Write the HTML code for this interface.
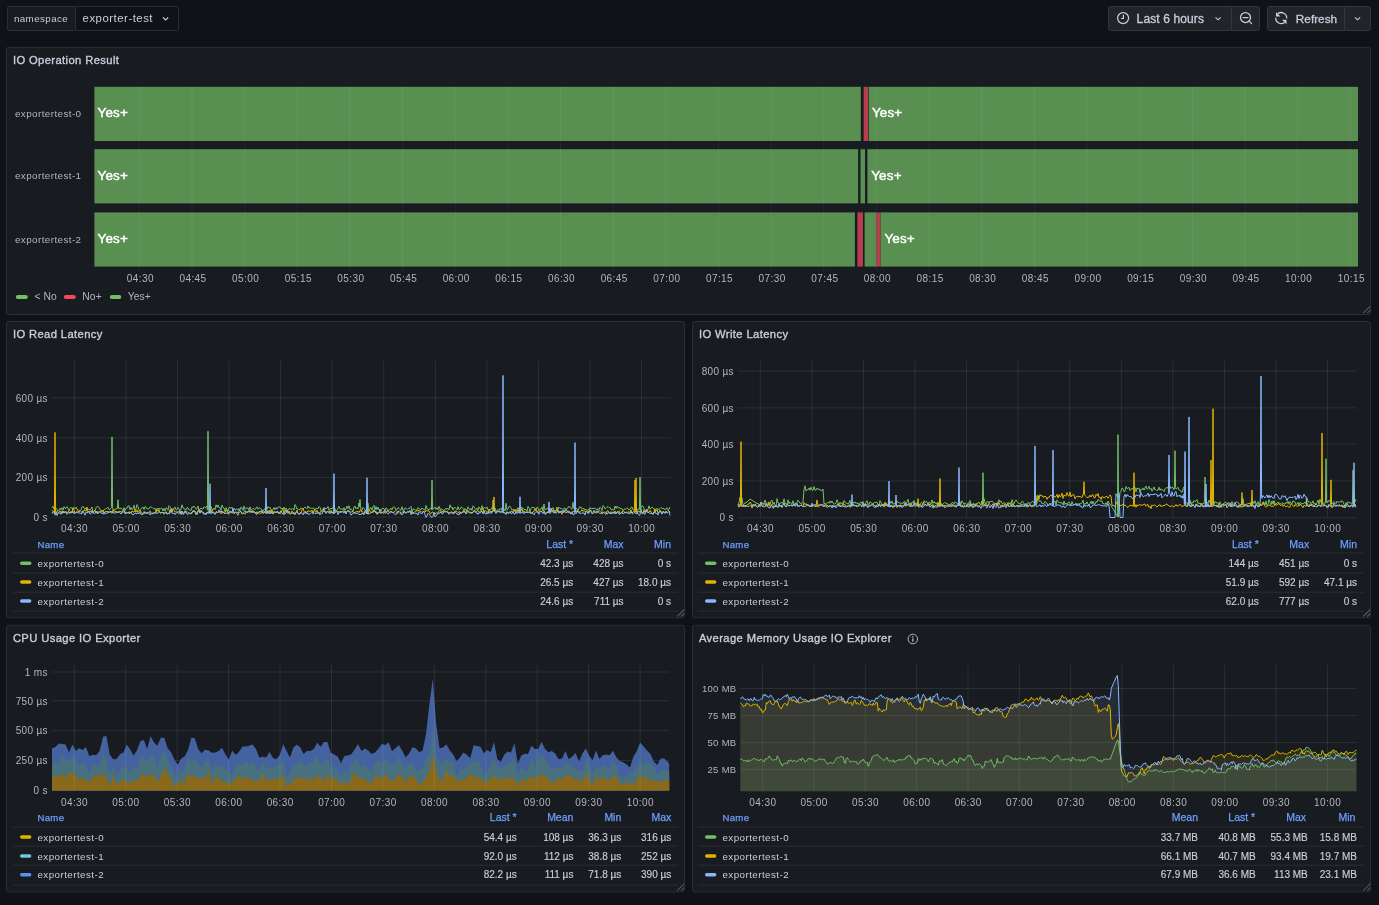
<!DOCTYPE html>
<html><head><meta charset="utf-8"><style>
html,body{margin:0;padding:0;background:#111217;width:1379px;height:905px;overflow:hidden}
svg{display:block;font-family:"Liberation Sans",sans-serif;will-change:transform}
</style></head><body>
<svg width="1379" height="905" viewBox="0 0 1379 905">
<rect width="1379" height="905" fill="#111217"/>
<rect x="7.5" y="6.5" width="68" height="24" fill="#181b1f" stroke="#2b2e34" stroke-width="1" rx="1.5" />
<text x="13.9" y="22" font-size="9.8" fill="#ccccdc" letter-spacing="0.4" >namespace</text>
<rect x="75.5" y="6.5" width="103" height="24" fill="#111217" stroke="#2b2e34" stroke-width="1" rx="1.5" />
<text x="82.6" y="22.0" font-size="11.4" fill="#ccccdc" letter-spacing="0.5" >exporter-test</text>
<path d="M163 17.5 L165.6 20 L168.2 17.5" fill="none" stroke="#ccccdc" stroke-width="1.1"/>
<rect x="1108.5" y="6.5" width="151" height="24" fill="#222429" stroke="#34363c" stroke-width="1" rx="2" />
<line x1="1231.5" y1="7" x2="1231.5" y2="30" stroke="#34363c" stroke-width="1"/>
<circle cx="1123.1" cy="18.1" r="5.5" fill="none" stroke="#ccccdc" stroke-width="1.25"/>
<path d="M1123.4 14.8 V18.5 H1121" fill="none" stroke="#ccccdc" stroke-width="1.2"/>
<text x="1136.6" y="23.1" font-size="12" fill="#ccccdc" letter-spacing="0.12" stroke="#ccccdc" stroke-width="0.3">Last 6 hours</text>
<path d="M1215.5 17.3 L1218.1 19.8 L1220.7 17.3" fill="none" stroke="#ccccdc" stroke-width="1.1"/>
<circle cx="1245.5" cy="17.5" r="5.0" fill="none" stroke="#ccccdc" stroke-width="1.25"/>
<path d="M1243 17.5 H1248 M1249.1 21.1 L1251.6 23.6" fill="none" stroke="#ccccdc" stroke-width="1.25" stroke-linecap="round"/>
<rect x="1267.5" y="6.5" width="103" height="24" fill="#222429" stroke="#34363c" stroke-width="1" rx="2" />
<line x1="1344.5" y1="7" x2="1344.5" y2="30" stroke="#34363c" stroke-width="1"/>
<path d="M1277.81 13.77 A5.5 5.5 0 0 1 1286.69 18.39 M1275.71 17.81 A5.5 5.5 0 0 0 1284.59 22.43" fill="none" stroke="#ccccdc" stroke-width="1.3"/>
<path d="M1276 12 L1276 16.5 L1280.5 16.5 Z M1286.5 24.2 L1286.5 19.7 L1282 19.7 Z" fill="#ccccdc"/>
<text x="1295.8" y="22.9" font-size="11.8" fill="#ccccdc" stroke="#ccccdc" stroke-width="0.3">Refresh</text>
<path d="M1354.9 17.3 L1357.5 19.8 L1360.1 17.3" fill="none" stroke="#ccccdc" stroke-width="1.1"/>
<rect x="6.5" y="47.4" width="1364" height="267.1" fill="#181b1f" stroke="#2b2e34" stroke-width="1" rx="2" />
<text x="12.9" y="63.95" font-size="11.2" fill="#ccccdc" letter-spacing="0.4" stroke="#ccccdc" stroke-width="0.35">IO Operation Result</text>
<path d="M1363.2 313.2 L1370.2 306.2 M1367.2 313.2 L1370.2 310.2" stroke="#53565c" stroke-width="1.1" fill="none"/>
<rect x="6.5" y="321.5" width="678" height="296.29999999999995" fill="#181b1f" stroke="#2b2e34" stroke-width="1" rx="2" />
<text x="12.9" y="338.05" font-size="11.2" fill="#ccccdc" letter-spacing="0.4" stroke="#ccccdc" stroke-width="0.35">IO Read Latency</text>
<path d="M677.2 616.5 L684.2 609.5 M681.2 616.5 L684.2 613.5" stroke="#53565c" stroke-width="1.1" fill="none"/>
<rect x="692.5" y="321.5" width="678" height="296.29999999999995" fill="#181b1f" stroke="#2b2e34" stroke-width="1" rx="2" />
<text x="698.9" y="338.05" font-size="11.2" fill="#ccccdc" letter-spacing="0.4" stroke="#ccccdc" stroke-width="0.35">IO Write Latency</text>
<path d="M1363.2 616.5 L1370.2 609.5 M1367.2 616.5 L1370.2 613.5" stroke="#53565c" stroke-width="1.1" fill="none"/>
<rect x="6.5" y="625.3" width="678" height="266.6" fill="#181b1f" stroke="#2b2e34" stroke-width="1" rx="2" />
<text x="12.9" y="641.8499999999999" font-size="11.2" fill="#ccccdc" letter-spacing="0.4" stroke="#ccccdc" stroke-width="0.35">CPU Usage IO Exporter</text>
<path d="M677.2 890.6 L684.2 883.6 M681.2 890.6 L684.2 887.6" stroke="#53565c" stroke-width="1.1" fill="none"/>
<rect x="692.5" y="625.3" width="678" height="266.6" fill="#181b1f" stroke="#2b2e34" stroke-width="1" rx="2" />
<text x="698.9" y="641.8499999999999" font-size="11.2" fill="#ccccdc" letter-spacing="0.4" stroke="#ccccdc" stroke-width="0.35">Average Memory Usage IO Explorer</text>
<path d="M1363.2 890.6 L1370.2 883.6 M1367.2 890.6 L1370.2 887.6" stroke="#53565c" stroke-width="1.1" fill="none"/>
<circle cx="912.8" cy="639" r="4.8" fill="none" stroke="#b0b0bc" stroke-width="1"/>
<rect x="912.1" y="636.2" width="1.4" height="1.3" fill="#b0b0bc"/><rect x="912.1" y="638.4" width="1.4" height="3.2" fill="#b0b0bc"/>
<rect x="94.4" y="86.8" width="766.4" height="54.2" fill="#5a8f52" />
<rect x="863.6" y="86.8" width="4.5" height="54.2" fill="#b83d4e" />
<rect x="868.7" y="86.8" width="489.29999999999995" height="54.2" fill="#5a8f52" />
<rect x="94.4" y="149.2" width="763.7" height="54.2" fill="#5a8f52" />
<rect x="860.5" y="149.2" width="4.5" height="54.2" fill="#5a8f52" />
<rect x="867.4" y="149.2" width="490.6" height="54.2" fill="#5a8f52" />
<rect x="94.4" y="212.4" width="760.5" height="54.2" fill="#5a8f52" />
<rect x="857.4" y="212.4" width="5.600000000000023" height="54.2" fill="#b83d4e" />
<rect x="864.6" y="212.4" width="11.899999999999977" height="54.2" fill="#5a8f52" />
<rect x="876.5" y="212.4" width="4.100000000000023" height="54.2" fill="#b83d4e" />
<rect x="880.6" y="212.4" width="477.4" height="54.2" fill="#5a8f52" />
<text x="81.5" y="116.9" font-size="9.9" fill="#b4b4c0" text-anchor="end" letter-spacing="0.4" >exportertest-0</text>
<text x="81.5" y="179.29999999999998" font-size="9.9" fill="#b4b4c0" text-anchor="end" letter-spacing="0.4" >exportertest-1</text>
<text x="81.5" y="242.5" font-size="9.9" fill="#b4b4c0" text-anchor="end" letter-spacing="0.4" >exportertest-2</text>
<text x="97.5" y="117" font-size="13.4" fill="#ffffff" letter-spacing="0.2" stroke="#ffffff" stroke-width="0.45">Yes+</text>
<text x="871.9" y="117" font-size="13.4" fill="#ffffff" letter-spacing="0.2" stroke="#ffffff" stroke-width="0.45">Yes+</text>
<text x="97.5" y="180" font-size="13.4" fill="#ffffff" letter-spacing="0.2" stroke="#ffffff" stroke-width="0.45">Yes+</text>
<text x="871.2" y="180" font-size="13.4" fill="#ffffff" letter-spacing="0.2" stroke="#ffffff" stroke-width="0.45">Yes+</text>
<text x="97.5" y="243" font-size="13.4" fill="#ffffff" letter-spacing="0.2" stroke="#ffffff" stroke-width="0.45">Yes+</text>
<text x="884.4" y="243" font-size="13.4" fill="#ffffff" letter-spacing="0.2" stroke="#ffffff" stroke-width="0.45">Yes+</text>
<line x1="139.3" y1="86" x2="139.3" y2="271" stroke="rgba(240,250,255,0.06)" stroke-width="1"/>
<text x="140.3" y="282.3" font-size="10" fill="#b4b4c0" text-anchor="middle" letter-spacing="0.42" >04:30</text>
<line x1="192.0" y1="86" x2="192.0" y2="271" stroke="rgba(240,250,255,0.06)" stroke-width="1"/>
<text x="193.0" y="282.3" font-size="10" fill="#b4b4c0" text-anchor="middle" letter-spacing="0.42" >04:45</text>
<line x1="244.6" y1="86" x2="244.6" y2="271" stroke="rgba(240,250,255,0.06)" stroke-width="1"/>
<text x="245.6" y="282.3" font-size="10" fill="#b4b4c0" text-anchor="middle" letter-spacing="0.42" >05:00</text>
<line x1="297.3" y1="86" x2="297.3" y2="271" stroke="rgba(240,250,255,0.06)" stroke-width="1"/>
<text x="298.3" y="282.3" font-size="10" fill="#b4b4c0" text-anchor="middle" letter-spacing="0.42" >05:15</text>
<line x1="349.9" y1="86" x2="349.9" y2="271" stroke="rgba(240,250,255,0.06)" stroke-width="1"/>
<text x="350.9" y="282.3" font-size="10" fill="#b4b4c0" text-anchor="middle" letter-spacing="0.42" >05:30</text>
<line x1="402.6" y1="86" x2="402.6" y2="271" stroke="rgba(240,250,255,0.06)" stroke-width="1"/>
<text x="403.6" y="282.3" font-size="10" fill="#b4b4c0" text-anchor="middle" letter-spacing="0.42" >05:45</text>
<line x1="455.2" y1="86" x2="455.2" y2="271" stroke="rgba(240,250,255,0.06)" stroke-width="1"/>
<text x="456.2" y="282.3" font-size="10" fill="#b4b4c0" text-anchor="middle" letter-spacing="0.42" >06:00</text>
<line x1="507.9" y1="86" x2="507.9" y2="271" stroke="rgba(240,250,255,0.06)" stroke-width="1"/>
<text x="508.9" y="282.3" font-size="10" fill="#b4b4c0" text-anchor="middle" letter-spacing="0.42" >06:15</text>
<line x1="560.5" y1="86" x2="560.5" y2="271" stroke="rgba(240,250,255,0.06)" stroke-width="1"/>
<text x="561.5" y="282.3" font-size="10" fill="#b4b4c0" text-anchor="middle" letter-spacing="0.42" >06:30</text>
<line x1="613.2" y1="86" x2="613.2" y2="271" stroke="rgba(240,250,255,0.06)" stroke-width="1"/>
<text x="614.2" y="282.3" font-size="10" fill="#b4b4c0" text-anchor="middle" letter-spacing="0.42" >06:45</text>
<line x1="665.8" y1="86" x2="665.8" y2="271" stroke="rgba(240,250,255,0.06)" stroke-width="1"/>
<text x="666.8" y="282.3" font-size="10" fill="#b4b4c0" text-anchor="middle" letter-spacing="0.42" >07:00</text>
<line x1="718.5" y1="86" x2="718.5" y2="271" stroke="rgba(240,250,255,0.06)" stroke-width="1"/>
<text x="719.5" y="282.3" font-size="10" fill="#b4b4c0" text-anchor="middle" letter-spacing="0.42" >07:15</text>
<line x1="771.1" y1="86" x2="771.1" y2="271" stroke="rgba(240,250,255,0.06)" stroke-width="1"/>
<text x="772.1" y="282.3" font-size="10" fill="#b4b4c0" text-anchor="middle" letter-spacing="0.42" >07:30</text>
<line x1="823.8" y1="86" x2="823.8" y2="271" stroke="rgba(240,250,255,0.06)" stroke-width="1"/>
<text x="824.8" y="282.3" font-size="10" fill="#b4b4c0" text-anchor="middle" letter-spacing="0.42" >07:45</text>
<line x1="876.4" y1="86" x2="876.4" y2="271" stroke="rgba(240,250,255,0.06)" stroke-width="1"/>
<text x="877.4" y="282.3" font-size="10" fill="#b4b4c0" text-anchor="middle" letter-spacing="0.42" >08:00</text>
<line x1="929.1" y1="86" x2="929.1" y2="271" stroke="rgba(240,250,255,0.06)" stroke-width="1"/>
<text x="930.1" y="282.3" font-size="10" fill="#b4b4c0" text-anchor="middle" letter-spacing="0.42" >08:15</text>
<line x1="981.7" y1="86" x2="981.7" y2="271" stroke="rgba(240,250,255,0.06)" stroke-width="1"/>
<text x="982.7" y="282.3" font-size="10" fill="#b4b4c0" text-anchor="middle" letter-spacing="0.42" >08:30</text>
<line x1="1034.4" y1="86" x2="1034.4" y2="271" stroke="rgba(240,250,255,0.06)" stroke-width="1"/>
<text x="1035.4" y="282.3" font-size="10" fill="#b4b4c0" text-anchor="middle" letter-spacing="0.42" >08:45</text>
<line x1="1087.0" y1="86" x2="1087.0" y2="271" stroke="rgba(240,250,255,0.06)" stroke-width="1"/>
<text x="1088.0" y="282.3" font-size="10" fill="#b4b4c0" text-anchor="middle" letter-spacing="0.42" >09:00</text>
<line x1="1139.7" y1="86" x2="1139.7" y2="271" stroke="rgba(240,250,255,0.06)" stroke-width="1"/>
<text x="1140.7" y="282.3" font-size="10" fill="#b4b4c0" text-anchor="middle" letter-spacing="0.42" >09:15</text>
<line x1="1192.3" y1="86" x2="1192.3" y2="271" stroke="rgba(240,250,255,0.06)" stroke-width="1"/>
<text x="1193.3" y="282.3" font-size="10" fill="#b4b4c0" text-anchor="middle" letter-spacing="0.42" >09:30</text>
<line x1="1245.0" y1="86" x2="1245.0" y2="271" stroke="rgba(240,250,255,0.06)" stroke-width="1"/>
<text x="1246.0" y="282.3" font-size="10" fill="#b4b4c0" text-anchor="middle" letter-spacing="0.42" >09:45</text>
<line x1="1297.6" y1="86" x2="1297.6" y2="271" stroke="rgba(240,250,255,0.06)" stroke-width="1"/>
<text x="1298.6" y="282.3" font-size="10" fill="#b4b4c0" text-anchor="middle" letter-spacing="0.42" >10:00</text>
<line x1="1350.3" y1="86" x2="1350.3" y2="271" stroke="rgba(240,250,255,0.06)" stroke-width="1"/>
<text x="1351.3" y="282.3" font-size="10" fill="#b4b4c0" text-anchor="middle" letter-spacing="0.42" >10:15</text>
<rect x="15.8" y="295" width="12" height="4" rx="2" fill="#73bf69"/>
<text x="34.5" y="300.3" font-size="10.3" fill="#b4b4c0" letter-spacing="0.1" >&lt; No</text>
<rect x="63.8" y="295" width="12" height="4" rx="2" fill="#f2495c"/>
<text x="82.3" y="300.3" font-size="10.3" fill="#b4b4c0" letter-spacing="0.1" >No+</text>
<rect x="109.8" y="295" width="11.5" height="4" rx="2" fill="#73bf69"/>
<text x="127.7" y="300.3" font-size="10.3" fill="#b4b4c0" letter-spacing="0.1" >Yes+</text>
<line x1="52" y1="397.9" x2="670.7" y2="397.9" stroke="rgba(240,250,255,0.09)" stroke-width="1"/>
<line x1="52" y1="437.8" x2="670.7" y2="437.8" stroke="rgba(240,250,255,0.09)" stroke-width="1"/>
<line x1="52" y1="477.6" x2="670.7" y2="477.6" stroke="rgba(240,250,255,0.09)" stroke-width="1"/>
<line x1="52" y1="517.2" x2="670.7" y2="517.2" stroke="rgba(240,250,255,0.09)" stroke-width="1"/>
<text x="74.5" y="532.3" font-size="10" fill="#b4b4c0" text-anchor="middle" letter-spacing="0.42" >04:30</text>
<text x="126.1" y="532.3" font-size="10" fill="#b4b4c0" text-anchor="middle" letter-spacing="0.42" >05:00</text>
<text x="177.7" y="532.3" font-size="10" fill="#b4b4c0" text-anchor="middle" letter-spacing="0.42" >05:30</text>
<text x="229.2" y="532.3" font-size="10" fill="#b4b4c0" text-anchor="middle" letter-spacing="0.42" >06:00</text>
<text x="280.8" y="532.3" font-size="10" fill="#b4b4c0" text-anchor="middle" letter-spacing="0.42" >06:30</text>
<text x="332.3" y="532.3" font-size="10" fill="#b4b4c0" text-anchor="middle" letter-spacing="0.42" >07:00</text>
<text x="383.9" y="532.3" font-size="10" fill="#b4b4c0" text-anchor="middle" letter-spacing="0.42" >07:30</text>
<text x="435.5" y="532.3" font-size="10" fill="#b4b4c0" text-anchor="middle" letter-spacing="0.42" >08:00</text>
<text x="487.0" y="532.3" font-size="10" fill="#b4b4c0" text-anchor="middle" letter-spacing="0.42" >08:30</text>
<text x="538.6" y="532.3" font-size="10" fill="#b4b4c0" text-anchor="middle" letter-spacing="0.42" >09:00</text>
<text x="590.1" y="532.3" font-size="10" fill="#b4b4c0" text-anchor="middle" letter-spacing="0.42" >09:30</text>
<text x="641.7" y="532.3" font-size="10" fill="#b4b4c0" text-anchor="middle" letter-spacing="0.42" >10:00</text>
<line x1="74.3" y1="360.6" x2="74.3" y2="517.2" stroke="rgba(240,250,255,0.09)" stroke-width="1"/>
<line x1="125.9" y1="360.6" x2="125.9" y2="517.2" stroke="rgba(240,250,255,0.09)" stroke-width="1"/>
<line x1="177.5" y1="360.6" x2="177.5" y2="517.2" stroke="rgba(240,250,255,0.09)" stroke-width="1"/>
<line x1="229.0" y1="360.6" x2="229.0" y2="517.2" stroke="rgba(240,250,255,0.09)" stroke-width="1"/>
<line x1="280.6" y1="360.6" x2="280.6" y2="517.2" stroke="rgba(240,250,255,0.09)" stroke-width="1"/>
<line x1="332.1" y1="360.6" x2="332.1" y2="517.2" stroke="rgba(240,250,255,0.09)" stroke-width="1"/>
<line x1="383.7" y1="360.6" x2="383.7" y2="517.2" stroke="rgba(240,250,255,0.09)" stroke-width="1"/>
<line x1="435.3" y1="360.6" x2="435.3" y2="517.2" stroke="rgba(240,250,255,0.09)" stroke-width="1"/>
<line x1="486.8" y1="360.6" x2="486.8" y2="517.2" stroke="rgba(240,250,255,0.09)" stroke-width="1"/>
<line x1="538.4" y1="360.6" x2="538.4" y2="517.2" stroke="rgba(240,250,255,0.09)" stroke-width="1"/>
<line x1="589.9" y1="360.6" x2="589.9" y2="517.2" stroke="rgba(240,250,255,0.09)" stroke-width="1"/>
<line x1="641.5" y1="360.6" x2="641.5" y2="517.2" stroke="rgba(240,250,255,0.09)" stroke-width="1"/>
<text x="47.82" y="401.6" font-size="10.0" fill="#b4b4c0" text-anchor="end" letter-spacing="0.32" >600 µs</text>
<text x="47.82" y="441.5" font-size="10.0" fill="#b4b4c0" text-anchor="end" letter-spacing="0.32" >400 µs</text>
<text x="47.82" y="481.3" font-size="10.0" fill="#b4b4c0" text-anchor="end" letter-spacing="0.32" >200 µs</text>
<text x="47.82" y="520.9" font-size="10.0" fill="#b4b4c0" text-anchor="end" letter-spacing="0.32" >0 s</text>
<path d="M52.0 507.8 L53.0 506.2 L54.0 509.6 L55.0 509.8 L56.0 508.4 L57.0 509.3 L58.0 511.0 L59.0 510.2 L60.0 508.1 L61.0 509.7 L62.0 507.7 L63.0 510.1 L64.0 506.7 L65.0 508.4 L66.0 508.2 L67.0 506.6 L68.0 508.7 L69.0 510.9 L70.0 508.4 L71.0 507.2 L72.0 508.7 L73.0 509.5 L74.0 507.6 L75.0 508.8 L76.0 507.0 L77.0 509.5 L78.0 509.4 L79.0 510.5 L80.0 510.7 L81.0 509.7 L82.0 506.7 L83.0 506.9 L84.0 507.4 L85.0 509.2 L86.0 507.8 L87.0 510.1 L88.0 509.1 L89.0 509.3 L90.0 509.8 L91.0 509.2 L92.0 507.0 L93.0 512.0 L94.0 510.7 L95.0 510.8 L96.0 507.8 L97.0 506.4 L98.0 506.8 L99.0 507.4 L100.0 509.9 L101.0 510.0 L102.0 510.7 L103.0 511.6 L104.0 509.5 L105.0 509.3 L106.0 508.3 L107.0 508.4 L108.0 507.3 L109.0 509.5 L110.0 509.2 L111.0 508.3 L111.4 507.7 L112.0 436.8 L112.6 507.7 L113.0 509.4 L114.0 510.5 L115.0 508.9 L116.0 509.2 L117.0 508.1 L117.4 508.5 L118.0 499.7 L118.6 508.5 L119.0 508.4 L120.0 508.4 L121.0 508.0 L122.0 509.3 L123.0 510.5 L124.0 507.6 L125.0 510.6 L126.0 508.3 L127.0 508.3 L128.0 506.0 L129.0 505.7 L130.0 509.8 L131.0 507.4 L132.0 509.8 L133.0 508.9 L134.0 505.2 L135.0 510.5 L136.0 508.7 L137.0 504.6 L138.0 506.5 L139.0 510.1 L140.0 511.4 L141.0 508.7 L142.0 507.9 L143.0 507.0 L144.0 509.5 L145.0 506.5 L146.0 507.2 L147.0 509.0 L148.0 508.9 L149.0 508.5 L150.0 506.9 L151.0 507.2 L152.0 507.3 L153.0 508.3 L154.0 508.9 L155.0 508.4 L156.0 511.4 L157.0 508.0 L158.0 509.6 L159.0 508.0 L160.0 509.2 L161.0 508.2 L162.0 508.3 L163.0 510.9 L164.0 508.4 L165.0 511.0 L166.0 507.8 L167.0 508.2 L168.0 510.2 L169.0 505.6 L170.0 506.6 L171.0 508.8 L172.0 509.4 L173.0 509.5 L174.0 508.4 L175.0 506.9 L176.0 509.9 L177.0 509.4 L178.0 507.3 L179.0 508.9 L180.0 511.2 L181.0 509.0 L182.0 504.8 L183.0 508.2 L184.0 508.3 L185.0 509.2 L186.0 510.0 L187.0 507.6 L188.0 507.9 L189.0 510.1 L190.0 509.8 L191.0 510.6 L192.0 506.9 L193.0 507.5 L194.0 506.0 L195.0 507.5 L196.0 509.2 L197.0 508.7 L198.0 506.1 L199.0 510.7 L200.0 508.8 L201.0 508.1 L202.0 508.6 L203.0 509.1 L204.0 506.7 L205.0 507.7 L206.0 507.1 L207.0 506.0 L207.4 510.1 L208.0 431.2 L208.6 510.1 L209.0 510.7 L210.0 510.4 L211.0 506.5 L212.0 509.3 L213.0 509.7 L214.0 508.0 L215.0 509.9 L216.0 504.8 L217.0 507.4 L218.0 504.9 L219.0 507.8 L220.0 507.5 L221.0 510.1 L222.0 505.0 L223.0 507.3 L224.0 508.0 L225.0 511.7 L226.0 507.6 L227.0 509.4 L228.0 511.2 L229.0 507.2 L230.0 507.7 L231.0 508.4 L232.0 507.0 L233.0 510.4 L234.0 508.2 L235.0 510.2 L236.0 509.5 L237.0 508.8 L238.0 510.1 L239.0 508.4 L240.0 510.2 L241.0 507.1 L242.0 507.8 L243.0 510.4 L244.0 506.0 L245.0 509.4 L246.0 508.3 L247.0 508.1 L248.0 507.9 L249.0 510.5 L250.0 506.8 L251.0 509.9 L252.0 509.4 L253.0 508.2 L254.0 508.7 L255.0 509.7 L256.0 508.0 L257.0 506.8 L258.0 509.2 L259.0 507.7 L260.0 508.3 L261.0 508.9 L262.0 509.8 L263.0 511.2 L264.0 509.2 L265.0 508.9 L266.0 509.9 L267.0 509.2 L268.0 506.6 L269.0 508.0 L270.0 507.2 L271.0 509.7 L272.0 510.5 L273.0 509.3 L274.0 507.5 L275.0 509.8 L276.0 507.5 L277.0 509.1 L278.0 507.2 L279.0 507.0 L280.0 507.0 L281.0 508.8 L282.0 507.9 L283.0 509.4 L284.0 507.1 L285.0 509.4 L286.0 508.0 L287.0 510.4 L288.0 510.1 L289.0 508.5 L290.0 508.9 L291.0 509.1 L292.0 509.4 L293.0 508.4 L294.0 510.2 L295.0 504.5 L296.0 506.3 L297.0 509.1 L298.0 508.7 L299.0 509.9 L300.0 509.6 L301.0 507.8 L302.0 508.9 L303.0 509.0 L304.0 507.9 L305.0 507.2 L306.0 507.7 L307.0 508.7 L308.0 505.9 L309.0 508.2 L310.0 507.5 L311.0 508.7 L312.0 507.7 L313.0 508.9 L314.0 508.1 L315.0 510.5 L316.0 508.4 L317.0 508.5 L318.0 508.8 L319.0 506.4 L320.0 507.4 L321.0 510.7 L322.0 509.5 L323.0 508.9 L324.0 510.2 L325.0 508.6 L326.0 508.5 L327.0 508.4 L328.0 506.5 L329.0 510.0 L330.0 508.6 L331.0 508.7 L332.0 508.4 L333.0 508.0 L334.0 505.9 L335.0 509.0 L336.0 511.6 L337.0 510.1 L338.0 508.4 L339.0 506.3 L340.0 508.8 L341.0 509.3 L342.0 508.6 L343.0 509.9 L344.0 507.6 L345.0 510.2 L346.0 509.0 L347.0 506.1 L348.0 508.4 L349.0 505.7 L350.0 509.8 L351.0 508.9 L352.0 509.6 L353.0 511.9 L354.0 506.7 L355.0 506.2 L356.0 508.9 L357.0 507.5 L358.0 508.9 L358.4 506.7 L359.0 503.0 L359.6 506.7 L359.4 506.2 L360.0 499.5 L360.6 506.2 L361.0 510.5 L362.0 510.2 L363.0 507.4 L364.0 508.4 L365.0 510.0 L366.0 511.2 L367.0 507.6 L368.0 503.1 L369.0 510.3 L370.0 508.3 L371.0 507.5 L372.0 510.2 L373.0 506.6 L374.0 505.2 L375.0 510.1 L376.0 506.5 L377.0 509.8 L378.0 507.2 L379.0 509.8 L380.0 509.4 L381.0 510.9 L382.0 508.5 L383.0 508.3 L384.0 508.7 L385.0 510.2 L386.0 507.8 L387.0 508.6 L388.0 511.3 L389.0 509.8 L390.0 509.7 L391.0 508.1 L392.0 509.9 L393.0 507.3 L394.0 506.9 L395.0 507.6 L396.0 510.6 L397.0 509.0 L398.0 507.6 L399.0 508.3 L400.0 509.4 L401.0 510.3 L402.0 506.7 L403.0 510.5 L404.0 510.0 L405.0 507.9 L406.0 508.3 L407.0 509.4 L408.0 508.4 L409.0 509.0 L410.0 507.4 L411.0 506.4 L412.0 512.0 L413.0 509.0 L414.0 509.1 L415.0 509.5 L416.0 510.5 L417.0 510.0 L418.0 507.5 L419.0 508.7 L420.0 508.9 L421.0 509.8 L422.0 508.0 L423.0 509.3 L424.0 509.1 L425.0 510.6 L426.0 505.4 L427.0 508.9 L428.0 509.2 L429.0 509.7 L430.0 508.8 L431.0 507.7 L431.4 509.7 L432.0 480.0 L432.6 509.7 L433.0 509.3 L434.0 507.7 L435.0 507.0 L436.0 509.5 L437.0 507.7 L438.0 509.6 L439.0 506.3 L440.0 509.1 L441.0 509.1 L442.0 509.0 L443.0 510.6 L444.0 510.5 L445.0 508.9 L446.0 508.8 L447.0 508.9 L448.0 508.2 L449.0 509.8 L450.0 504.8 L451.0 507.7 L452.0 506.9 L453.0 510.1 L454.0 507.5 L455.0 507.4 L456.0 508.5 L457.0 509.8 L458.0 506.6 L459.0 509.6 L460.0 509.3 L461.0 507.2 L462.0 507.3 L463.0 508.6 L464.0 511.3 L465.0 508.5 L466.0 510.2 L467.0 510.0 L468.0 506.7 L469.0 508.8 L470.0 510.1 L471.0 508.2 L472.0 510.4 L473.0 505.8 L474.0 506.9 L475.0 508.2 L476.0 509.7 L477.0 508.3 L478.0 510.0 L479.0 506.8 L480.0 508.0 L481.0 510.6 L482.0 505.6 L483.0 509.2 L484.0 507.6 L485.0 507.8 L486.0 508.4 L487.0 506.9 L488.0 510.0 L489.0 509.6 L490.0 510.4 L491.0 509.0 L492.0 507.6 L492.4 509.6 L493.0 500.0 L493.6 509.6 L494.0 507.1 L495.0 507.6 L496.0 511.5 L497.0 510.2 L498.0 509.4 L499.0 510.7 L500.0 508.4 L501.0 509.6 L502.0 507.8 L503.0 508.4 L504.0 508.9 L505.0 510.8 L506.0 503.2 L507.0 510.2 L508.0 508.8 L509.0 506.5 L510.0 506.3 L511.0 507.9 L512.0 510.2 L513.0 509.2 L514.0 511.2 L515.0 509.1 L516.0 510.7 L517.0 509.1 L518.0 507.6 L519.0 509.7 L520.0 507.8 L521.0 507.0 L522.0 507.8 L523.0 508.3 L524.0 509.1 L525.0 509.9 L526.0 509.6 L527.0 511.5 L528.0 506.3 L529.0 508.2 L530.0 512.2 L531.0 508.4 L532.0 507.2 L533.0 507.8 L534.0 507.6 L535.0 508.2 L536.0 510.7 L537.0 507.0 L538.0 507.9 L539.0 510.7 L540.0 509.2 L541.0 509.3 L542.0 506.8 L543.0 510.1 L544.0 504.0 L545.0 510.1 L546.0 509.0 L547.0 508.6 L548.0 508.1 L549.0 510.1 L550.0 509.3 L551.0 508.3 L552.0 509.0 L553.0 507.5 L554.0 510.5 L555.0 510.6 L556.0 510.3 L557.0 509.2 L558.0 509.5 L559.0 507.1 L560.0 508.4 L561.0 508.5 L562.0 508.7 L563.0 509.7 L564.0 508.3 L565.0 507.9 L566.0 510.4 L567.0 508.4 L568.0 508.0 L569.0 506.2 L570.0 507.1 L571.0 508.5 L572.0 509.2 L573.0 502.2 L574.0 508.8 L575.0 509.3 L576.0 508.2 L577.0 508.9 L578.0 510.7 L579.0 507.9 L580.0 506.6 L581.0 508.3 L582.0 507.7 L583.0 508.8 L584.0 508.4 L585.0 510.0 L586.0 509.2 L587.0 510.6 L588.0 509.3 L589.0 510.2 L590.0 507.5 L591.0 509.2 L592.0 508.2 L593.0 508.8 L594.0 508.1 L595.0 508.4 L596.0 508.9 L597.0 510.3 L598.0 508.5 L599.0 509.6 L600.0 507.2 L601.0 508.4 L602.0 510.5 L603.0 505.5 L604.0 506.5 L605.0 508.8 L606.0 508.5 L607.0 507.3 L608.0 506.5 L609.0 507.6 L610.0 507.4 L611.0 509.7 L612.0 509.6 L613.0 509.6 L614.0 510.2 L615.0 506.0 L616.0 508.5 L617.0 506.2 L618.0 507.9 L619.0 508.0 L620.0 507.8 L621.0 509.0 L622.0 508.7 L623.0 510.4 L624.0 509.3 L625.0 509.1 L626.0 508.8 L627.0 507.8 L628.0 509.0 L629.0 509.9 L630.0 509.4 L631.0 507.4 L632.0 506.9 L633.0 509.7 L634.0 509.1 L635.0 509.2 L636.0 507.7 L637.0 509.8 L638.0 509.8 L639.0 508.5 L639.4 509.6 L640.0 477.0 L640.6 509.6 L641.0 507.6 L642.0 505.9 L643.0 506.2 L644.0 508.5 L645.0 512.0 L646.0 509.8 L647.0 511.1 L648.0 509.6 L649.0 505.8 L650.0 509.1 L651.0 508.3 L652.0 507.0 L653.0 507.9 L654.0 508.9 L655.0 513.1 L656.0 509.5 L657.0 508.3 L658.0 509.8 L659.0 509.4 L660.0 508.5 L661.0 507.4 L662.0 508.7 L663.0 508.3 L664.0 508.9 L665.0 509.4 L666.0 509.3 L667.0 507.7 L668.0 509.6 L669.0 509.4 L670.0 507.0" fill="none" stroke="#73bf69" stroke-width="1" stroke-linejoin="miter" stroke-miterlimit="2"/>
<path d="M52.0 510.2 L53.0 511.5 L54.0 511.8 L54.4 513.6 L55.0 432.4 L55.6 513.6 L56.0 513.7 L57.0 511.2 L58.0 512.7 L59.0 512.3 L60.0 510.8 L61.0 513.2 L62.0 513.9 L63.0 510.8 L64.0 512.7 L65.0 511.2 L66.0 513.1 L67.0 513.2 L68.0 511.6 L69.0 511.8 L70.0 513.7 L71.0 511.1 L72.0 513.1 L73.0 507.6 L74.0 510.3 L75.0 513.1 L76.0 512.2 L77.0 511.6 L78.0 510.7 L79.0 512.2 L80.0 510.4 L81.0 511.7 L82.0 512.6 L83.0 511.6 L84.0 510.2 L85.0 510.0 L86.0 511.4 L87.0 507.1 L88.0 512.7 L89.0 511.1 L90.0 511.2 L91.0 511.5 L92.0 511.0 L93.0 513.3 L94.0 511.1 L95.0 510.5 L96.0 513.0 L97.0 511.1 L98.0 513.5 L99.0 512.7 L100.0 511.4 L101.0 512.0 L102.0 510.7 L103.0 510.6 L104.0 513.1 L105.0 511.5 L106.0 511.7 L107.0 511.4 L108.0 512.0 L109.0 511.6 L110.0 512.0 L111.0 512.0 L112.0 513.4 L113.0 509.7 L114.0 511.8 L115.0 512.1 L116.0 510.9 L117.0 512.5 L118.0 511.8 L119.0 511.3 L120.0 511.1 L121.0 511.9 L122.0 512.2 L123.0 512.3 L124.0 511.6 L125.0 511.6 L126.0 513.4 L127.0 512.1 L128.0 513.2 L129.0 511.6 L130.0 513.2 L131.0 512.1 L132.0 511.2 L133.0 511.6 L134.0 512.3 L135.0 510.2 L136.0 512.2 L137.0 509.8 L138.0 512.2 L139.0 511.1 L140.0 510.7 L141.0 511.3 L142.0 513.4 L143.0 513.9 L144.0 511.6 L145.0 513.6 L146.0 512.3 L147.0 513.9 L148.0 512.1 L149.0 512.8 L150.0 510.9 L151.0 513.4 L152.0 513.0 L153.0 513.3 L154.0 513.8 L155.0 511.7 L156.0 512.6 L157.0 510.0 L158.0 511.1 L159.0 509.6 L160.0 513.0 L161.0 512.7 L162.0 512.5 L163.0 512.3 L164.0 514.3 L165.0 513.1 L166.0 511.5 L167.0 514.0 L168.0 514.0 L169.0 513.1 L170.0 509.7 L171.0 511.1 L172.0 512.6 L173.0 508.5 L174.0 510.3 L175.0 512.3 L176.0 511.3 L177.0 512.4 L178.0 512.4 L179.0 513.8 L180.0 511.2 L181.0 513.3 L182.0 511.1 L183.0 513.3 L184.0 512.7 L185.0 512.6 L186.0 512.3 L187.0 511.4 L188.0 512.6 L189.0 512.7 L190.0 513.5 L191.0 512.5 L192.0 512.6 L193.0 510.9 L194.0 510.2 L195.0 512.3 L196.0 514.7 L197.0 511.9 L198.0 511.0 L199.0 509.1 L200.0 512.7 L201.0 510.9 L202.0 511.3 L203.0 512.3 L204.0 512.7 L205.0 514.1 L206.0 513.4 L207.0 512.8 L208.0 512.0 L209.0 510.7 L210.0 511.7 L211.0 513.1 L212.0 509.5 L213.0 511.9 L214.0 513.7 L215.0 513.0 L216.0 511.7 L217.0 511.6 L218.0 512.7 L219.0 511.7 L220.0 512.6 L221.0 513.9 L222.0 511.7 L223.0 511.4 L224.0 513.2 L225.0 512.4 L226.0 511.1 L227.0 509.8 L228.0 514.0 L229.0 514.1 L230.0 511.9 L231.0 512.6 L232.0 512.3 L233.0 512.6 L234.0 513.9 L235.0 512.6 L236.0 512.0 L237.0 512.5 L238.0 512.3 L239.0 512.9 L240.0 511.8 L241.0 511.4 L242.0 514.2 L243.0 512.9 L244.0 513.1 L245.0 514.3 L246.0 512.2 L247.0 511.9 L248.0 512.5 L249.0 511.0 L250.0 511.1 L251.0 511.0 L252.0 512.8 L253.0 510.3 L254.0 512.2 L255.0 511.9 L256.0 513.8 L257.0 511.7 L258.0 513.1 L259.0 513.0 L260.0 512.9 L261.0 513.7 L262.0 510.1 L263.0 512.6 L264.0 511.7 L265.0 511.7 L266.0 513.6 L267.0 511.5 L268.0 511.3 L269.0 513.5 L270.0 509.9 L271.0 513.6 L272.0 509.7 L273.0 514.2 L274.0 511.3 L275.0 512.8 L276.0 512.5 L277.0 512.2 L278.0 512.7 L279.0 512.1 L280.0 513.4 L281.0 512.8 L282.0 510.2 L283.0 509.1 L284.0 514.7 L285.0 509.5 L286.0 512.2 L287.0 511.4 L288.0 511.4 L289.0 511.1 L290.0 514.4 L291.0 513.2 L292.0 510.9 L293.0 512.9 L294.0 512.3 L295.0 514.3 L296.0 512.2 L297.0 510.2 L298.0 514.0 L299.0 514.1 L300.0 514.2 L301.0 512.9 L302.0 509.9 L303.0 508.1 L304.0 511.6 L305.0 512.2 L306.0 511.5 L307.0 512.6 L308.0 510.6 L309.0 511.3 L310.0 511.0 L311.0 511.7 L312.0 510.1 L313.0 514.1 L314.0 510.3 L315.0 511.1 L316.0 512.4 L317.0 510.2 L318.0 512.9 L319.0 512.9 L320.0 513.0 L321.0 511.0 L322.0 510.9 L323.0 511.4 L324.0 511.3 L325.0 511.8 L326.0 512.1 L327.0 511.8 L328.0 511.3 L329.0 513.2 L330.0 513.3 L331.0 510.3 L332.0 512.6 L333.0 512.4 L334.0 513.8 L335.0 511.3 L336.0 510.5 L337.0 511.7 L338.0 511.9 L339.0 511.6 L340.0 511.6 L341.0 511.7 L342.0 512.3 L343.0 511.1 L344.0 510.8 L345.0 511.8 L346.0 512.4 L347.0 511.7 L348.0 510.5 L349.0 511.9 L350.0 511.3 L351.0 512.5 L352.0 511.3 L353.0 511.9 L354.0 513.0 L355.0 512.1 L356.0 511.9 L357.0 511.7 L358.0 511.1 L359.0 512.6 L360.0 510.4 L361.0 511.3 L362.0 510.9 L363.0 512.5 L364.0 514.6 L365.0 510.6 L366.0 512.8 L367.0 512.0 L368.0 514.3 L369.0 509.2 L370.0 511.0 L371.0 512.7 L372.0 512.1 L373.0 512.6 L374.0 510.0 L375.0 511.7 L376.0 511.3 L377.0 514.5 L378.0 512.5 L379.0 512.6 L380.0 511.8 L381.0 513.8 L382.0 512.2 L383.0 512.5 L384.0 511.0 L385.0 513.2 L386.0 513.1 L387.0 510.8 L388.0 511.2 L389.0 512.5 L390.0 511.8 L391.0 511.0 L392.0 512.2 L393.0 512.8 L394.0 512.0 L395.0 511.5 L396.0 512.5 L397.0 511.8 L398.0 511.7 L399.0 512.5 L400.0 513.6 L401.0 513.6 L402.0 512.3 L403.0 511.7 L404.0 512.1 L405.0 512.4 L406.0 512.8 L407.0 511.8 L408.0 512.0 L409.0 512.4 L410.0 510.9 L411.0 512.0 L412.0 512.4 L413.0 512.9 L414.0 512.4 L415.0 511.4 L416.0 510.7 L417.0 511.1 L418.0 510.4 L419.0 510.7 L420.0 511.1 L421.0 511.3 L422.0 512.5 L423.0 511.7 L424.0 511.7 L425.0 512.1 L426.0 511.0 L427.0 510.5 L428.0 511.2 L429.0 510.7 L430.0 513.6 L431.0 513.6 L432.0 511.9 L433.0 512.4 L434.0 513.6 L435.0 513.6 L436.0 513.2 L437.0 512.8 L438.0 513.3 L439.0 510.8 L440.0 509.7 L441.0 511.1 L442.0 512.5 L443.0 511.0 L444.0 511.5 L445.0 512.0 L446.0 511.9 L447.0 510.8 L448.0 511.7 L449.0 513.0 L450.0 512.7 L451.0 512.0 L452.0 511.8 L453.0 513.6 L454.0 513.8 L455.0 510.9 L456.0 511.3 L457.0 511.4 L458.0 512.6 L459.0 512.0 L460.0 511.6 L461.0 513.8 L462.0 512.5 L463.0 511.1 L464.0 512.0 L465.0 511.8 L466.0 513.6 L467.0 509.9 L468.0 511.9 L469.0 512.2 L470.0 513.3 L471.0 512.0 L472.0 512.8 L473.0 512.9 L474.0 510.1 L475.0 511.3 L476.0 511.3 L477.0 511.1 L478.0 510.5 L479.0 512.4 L480.0 511.6 L481.0 512.2 L482.0 509.4 L483.0 508.8 L484.0 512.2 L485.0 510.3 L486.0 511.6 L487.0 512.5 L488.0 514.2 L489.0 509.2 L490.0 511.9 L491.0 511.0 L492.0 512.5 L493.0 510.3 L493.4 511.2 L494.0 497.0 L494.6 511.2 L495.0 512.0 L496.0 511.8 L497.0 511.4 L498.0 511.4 L499.0 511.1 L500.0 512.8 L501.0 511.8 L502.0 510.3 L503.0 512.4 L504.0 512.4 L505.0 513.3 L506.0 513.8 L507.0 511.9 L508.0 513.5 L509.0 512.3 L510.0 512.6 L511.0 511.4 L512.0 511.9 L513.0 511.6 L514.0 509.7 L515.0 511.6 L516.0 510.3 L517.0 512.3 L518.0 509.3 L519.0 512.1 L520.0 510.0 L521.0 510.9 L522.0 508.4 L523.0 512.3 L524.0 510.8 L525.0 511.8 L526.0 513.0 L527.0 511.8 L528.0 512.5 L529.0 511.9 L530.0 513.2 L531.0 512.8 L532.0 513.3 L533.0 511.8 L534.0 511.7 L535.0 508.7 L536.0 510.7 L537.0 510.7 L538.0 512.9 L539.0 511.4 L540.0 510.8 L541.0 511.6 L542.0 511.1 L543.0 510.7 L544.0 510.5 L545.0 513.0 L546.0 513.5 L547.0 511.8 L548.0 512.2 L549.0 512.9 L550.0 511.4 L551.0 508.4 L552.0 510.5 L553.0 509.7 L554.0 511.0 L555.0 513.1 L556.0 511.7 L557.0 507.1 L558.0 512.3 L559.0 513.2 L560.0 510.9 L561.0 512.6 L562.0 514.3 L563.0 511.5 L564.0 512.1 L565.0 511.1 L566.0 510.3 L567.0 510.4 L568.0 513.0 L569.0 512.5 L570.0 511.7 L571.0 514.1 L572.0 511.6 L573.0 512.1 L574.0 511.1 L575.0 511.2 L576.0 510.8 L577.0 511.4 L578.0 510.8 L579.0 512.1 L580.0 512.2 L581.0 511.3 L582.0 509.6 L583.0 511.3 L584.0 510.5 L585.0 511.4 L586.0 512.3 L587.0 511.2 L588.0 513.4 L589.0 510.5 L590.0 511.0 L591.0 510.3 L592.0 512.2 L593.0 513.9 L594.0 512.7 L595.0 512.4 L596.0 511.5 L597.0 511.2 L598.0 511.7 L599.0 512.7 L600.0 513.8 L601.0 512.7 L602.0 511.8 L603.0 512.0 L604.0 512.9 L605.0 513.9 L606.0 514.3 L607.0 511.0 L608.0 510.5 L609.0 513.1 L610.0 513.0 L611.0 513.2 L612.0 513.9 L613.0 511.8 L614.0 513.0 L615.0 510.9 L616.0 513.4 L617.0 511.9 L618.0 511.9 L619.0 510.8 L620.0 513.6 L621.0 513.1 L622.0 512.7 L623.0 510.5 L624.0 511.2 L625.0 513.2 L626.0 511.9 L627.0 512.2 L628.0 512.4 L629.0 511.5 L630.0 513.2 L631.0 509.8 L632.0 513.8 L633.0 513.7 L634.0 512.5 L634.4 509.6 L635.0 480.0 L635.6 509.6 L635.4 511.9 L636.0 478.0 L636.6 511.9 L637.0 514.0 L638.0 511.3 L639.0 510.9 L640.0 512.5 L641.0 511.4 L642.0 511.6 L643.0 513.8 L644.0 509.7 L645.0 512.8 L646.0 510.8 L647.0 512.2 L648.0 512.5 L649.0 512.3 L650.0 510.3 L651.0 512.0 L652.0 512.6 L653.0 514.2 L654.0 512.3 L655.0 508.8 L656.0 511.1 L657.0 509.6 L658.0 513.4 L659.0 512.9 L660.0 510.2 L661.0 511.4 L662.0 513.5 L663.0 511.0 L664.0 512.6 L665.0 511.6 L666.0 512.2 L667.0 511.4 L668.0 510.4 L669.0 510.9 L670.0 512.5" fill="none" stroke="#e0b400" stroke-width="1" stroke-linejoin="miter" stroke-miterlimit="2"/>
<path d="M52.0 513.6 L53.0 511.5 L54.0 511.9 L55.0 515.2 L56.0 513.0 L57.0 515.5 L58.0 513.0 L59.0 512.8 L60.0 513.4 L61.0 514.3 L62.0 510.9 L63.0 512.6 L64.0 512.6 L65.0 512.5 L66.0 511.4 L67.0 514.4 L68.0 513.4 L69.0 512.2 L70.0 512.6 L71.0 512.1 L72.0 512.8 L73.0 511.3 L74.0 513.7 L75.0 513.0 L76.0 512.3 L77.0 512.7 L78.0 512.8 L79.0 513.0 L80.0 512.9 L81.0 513.8 L82.0 513.7 L83.0 510.6 L84.0 513.1 L85.0 515.2 L86.0 512.1 L87.0 513.2 L88.0 512.3 L89.0 511.1 L90.0 514.1 L91.0 513.6 L92.0 510.4 L93.0 512.5 L94.0 513.4 L95.0 513.5 L96.0 511.2 L97.0 513.5 L98.0 513.0 L99.0 511.3 L100.0 512.5 L101.0 512.2 L102.0 513.9 L103.0 512.6 L104.0 514.3 L105.0 512.8 L106.0 513.2 L107.0 513.7 L108.0 511.8 L109.0 512.9 L110.0 511.6 L111.0 511.2 L112.0 512.1 L113.0 512.0 L114.0 512.7 L115.0 513.4 L116.0 512.7 L117.0 512.1 L118.0 513.0 L119.0 511.8 L120.0 512.8 L121.0 514.1 L122.0 512.7 L123.0 510.5 L124.0 510.1 L125.0 513.7 L126.0 513.5 L127.0 512.8 L128.0 512.4 L129.0 513.3 L130.0 513.4 L131.0 511.9 L132.0 514.1 L133.0 514.9 L134.0 514.5 L135.0 513.0 L136.0 513.2 L137.0 514.1 L138.0 512.5 L139.0 513.9 L140.0 512.1 L141.0 514.4 L142.0 514.3 L143.0 514.5 L144.0 513.5 L145.0 511.7 L146.0 513.2 L147.0 513.2 L148.0 512.7 L149.0 512.8 L150.0 515.1 L151.0 513.3 L152.0 514.1 L153.0 513.5 L154.0 512.3 L155.0 513.3 L156.0 512.6 L157.0 513.9 L158.0 512.1 L159.0 511.7 L160.0 512.9 L161.0 513.1 L162.0 512.4 L163.0 512.4 L164.0 513.0 L165.0 512.8 L166.0 512.5 L167.0 513.8 L168.0 513.0 L169.0 513.9 L170.0 513.5 L171.0 508.7 L172.0 512.7 L173.0 513.9 L174.0 513.1 L175.0 514.7 L176.0 512.9 L177.0 512.6 L178.0 511.8 L179.0 510.8 L180.0 511.8 L181.0 514.6 L182.0 511.0 L183.0 514.5 L184.0 513.7 L185.0 510.5 L186.0 512.1 L187.0 514.1 L188.0 514.2 L189.0 513.7 L190.0 513.2 L191.0 514.0 L192.0 513.3 L193.0 510.8 L194.0 512.0 L195.0 511.1 L196.0 512.5 L197.0 514.6 L198.0 511.6 L199.0 510.8 L200.0 513.2 L201.0 510.1 L202.0 512.6 L203.0 513.0 L204.0 514.5 L205.0 513.2 L206.0 514.9 L207.0 512.2 L208.0 513.5 L209.0 511.8 L209.4 513.4 L210.0 483.7 L210.6 513.4 L211.0 513.9 L212.0 512.1 L213.0 512.9 L214.0 512.9 L215.0 514.6 L216.0 512.9 L217.0 512.5 L218.0 512.5 L219.0 509.9 L220.0 512.4 L221.0 510.5 L222.0 512.3 L223.0 512.5 L224.0 513.0 L225.0 513.8 L226.0 513.1 L227.0 513.0 L228.0 513.1 L229.0 511.7 L230.0 511.6 L231.0 511.1 L232.0 513.1 L233.0 508.6 L234.0 513.4 L235.0 511.8 L236.0 512.6 L237.0 513.9 L238.0 515.4 L239.0 510.4 L240.0 510.4 L241.0 512.4 L242.0 513.3 L243.0 513.5 L244.0 511.9 L245.0 510.5 L246.0 512.6 L247.0 511.9 L248.0 511.8 L249.0 510.8 L250.0 512.7 L251.0 510.6 L252.0 512.0 L253.0 512.3 L254.0 512.2 L255.0 512.6 L256.0 514.2 L257.0 514.4 L258.0 512.5 L259.0 511.7 L260.0 511.3 L261.0 511.4 L262.0 511.7 L263.0 513.4 L264.0 513.1 L265.0 511.5 L265.4 511.8 L266.0 488.0 L266.6 511.8 L267.0 513.9 L268.0 510.6 L269.0 513.1 L270.0 513.8 L271.0 512.0 L272.0 513.3 L273.0 513.2 L274.0 512.8 L275.0 511.4 L276.0 512.5 L277.0 511.2 L278.0 511.5 L279.0 514.0 L280.0 512.2 L281.0 510.8 L282.0 513.5 L283.0 513.9 L284.0 514.0 L285.0 513.4 L286.0 513.0 L287.0 510.0 L288.0 513.5 L289.0 511.8 L290.0 512.5 L291.0 513.5 L292.0 513.3 L293.0 512.9 L294.0 514.1 L295.0 514.6 L296.0 512.2 L297.0 512.0 L298.0 512.6 L299.0 513.9 L300.0 512.9 L301.0 512.1 L302.0 513.4 L303.0 515.0 L304.0 512.3 L305.0 513.7 L306.0 511.8 L307.0 514.1 L308.0 513.2 L309.0 514.8 L310.0 513.6 L311.0 513.2 L312.0 512.2 L313.0 512.1 L314.0 512.6 L315.0 513.7 L316.0 513.1 L317.0 513.3 L318.0 513.2 L319.0 512.5 L320.0 514.9 L321.0 513.3 L322.0 513.9 L323.0 511.4 L324.0 507.5 L325.0 512.0 L326.0 513.5 L327.0 511.8 L328.0 511.7 L329.0 510.6 L330.0 512.9 L331.0 512.8 L332.0 512.2 L333.0 513.7 L333.4 513.2 L334.0 473.6 L334.6 513.2 L335.0 512.9 L336.0 511.8 L337.0 511.5 L338.0 514.7 L339.0 512.2 L340.0 512.4 L341.0 512.2 L342.0 511.5 L343.0 511.6 L344.0 513.2 L345.0 510.7 L346.0 514.0 L347.0 511.3 L348.0 510.8 L349.0 510.5 L350.0 512.8 L351.0 515.2 L352.0 513.9 L353.0 513.5 L354.0 512.6 L355.0 513.7 L356.0 513.2 L357.0 513.1 L358.0 513.3 L359.0 514.8 L360.0 514.2 L361.0 514.8 L362.0 512.9 L363.0 514.2 L364.0 513.8 L365.0 511.5 L366.0 512.0 L366.4 513.9 L367.0 477.7 L367.6 513.9 L368.0 513.0 L369.0 514.1 L370.0 513.1 L371.0 512.9 L372.0 512.1 L373.0 510.8 L374.0 510.0 L375.0 512.3 L376.0 512.7 L377.0 512.2 L378.0 513.5 L379.0 512.5 L380.0 509.4 L381.0 512.2 L382.0 512.3 L383.0 512.8 L384.0 513.3 L385.0 509.9 L386.0 511.9 L387.0 512.6 L388.0 514.0 L389.0 513.7 L390.0 512.2 L391.0 511.8 L392.0 512.8 L393.0 511.8 L394.0 513.5 L395.0 514.7 L396.0 514.1 L397.0 513.9 L398.0 512.0 L399.0 510.7 L400.0 511.7 L401.0 513.4 L402.0 515.0 L403.0 514.1 L404.0 510.6 L405.0 512.0 L406.0 513.4 L407.0 512.1 L408.0 511.4 L409.0 512.0 L410.0 510.4 L411.0 514.7 L412.0 512.2 L413.0 514.0 L414.0 513.1 L415.0 513.0 L416.0 513.4 L417.0 513.3 L418.0 515.2 L419.0 511.8 L420.0 512.5 L421.0 513.4 L422.0 513.8 L423.0 511.6 L424.0 511.6 L425.0 514.4 L426.0 517.4 L427.0 515.9 L428.0 513.3 L429.0 514.3 L430.0 515.2 L431.0 517.1 L432.0 517.3 L433.0 516.4 L434.0 512.1 L435.0 516.9 L436.0 515.8 L437.0 514.9 L438.0 513.5 L439.0 512.9 L440.0 513.3 L441.0 511.6 L442.0 513.8 L443.0 513.8 L444.0 511.7 L445.0 510.9 L446.0 511.4 L447.0 512.5 L448.0 512.3 L449.0 514.3 L450.0 513.2 L451.0 512.4 L452.0 513.6 L453.0 513.0 L454.0 512.1 L455.0 511.9 L456.0 512.5 L457.0 514.3 L458.0 513.8 L459.0 515.1 L460.0 512.4 L461.0 513.4 L462.0 512.2 L463.0 512.2 L464.0 511.9 L465.0 511.3 L466.0 514.0 L467.0 512.6 L468.0 511.4 L469.0 511.3 L470.0 512.7 L471.0 513.0 L472.0 513.1 L473.0 511.6 L474.0 511.4 L475.0 510.8 L476.0 513.2 L477.0 512.7 L478.0 514.4 L479.0 512.4 L480.0 513.1 L481.0 512.2 L482.0 511.1 L483.0 514.0 L484.0 511.1 L485.0 513.6 L486.0 514.1 L487.0 511.6 L488.0 512.3 L489.0 512.6 L490.0 512.2 L491.0 513.7 L492.0 511.0 L493.0 511.3 L494.0 509.9 L495.0 511.7 L496.0 513.5 L497.0 511.7 L498.0 512.0 L499.0 511.1 L500.0 512.0 L501.0 511.6 L502.0 512.5 L502.4 512.8 L503.0 375.4 L503.6 512.8 L504.0 512.8 L505.0 512.5 L506.0 514.6 L507.0 511.7 L508.0 512.7 L509.0 513.4 L510.0 511.5 L511.0 513.7 L512.0 513.4 L513.0 511.6 L514.0 514.1 L515.0 514.1 L516.0 511.4 L517.0 513.6 L518.0 512.1 L519.0 512.6 L519.4 513.3 L520.0 496.7 L520.6 513.3 L521.0 513.3 L522.0 512.5 L523.0 511.9 L524.0 513.9 L525.0 512.1 L526.0 512.6 L527.0 512.1 L528.0 512.8 L529.0 511.8 L530.0 512.9 L531.0 512.8 L532.0 513.2 L533.0 513.5 L534.0 514.9 L535.0 512.7 L536.0 511.6 L537.0 512.3 L538.0 511.9 L539.0 514.3 L540.0 512.2 L541.0 511.1 L542.0 512.0 L543.0 513.7 L544.0 511.5 L545.0 514.4 L546.0 513.7 L547.0 512.9 L548.0 512.1 L548.4 512.1 L549.0 501.8 L549.6 512.1 L550.0 513.6 L551.0 509.2 L552.0 512.3 L553.0 511.0 L554.0 513.3 L555.0 511.3 L556.0 513.3 L557.0 512.4 L558.0 509.9 L559.0 512.5 L560.0 511.9 L561.0 512.6 L562.0 510.6 L563.0 512.9 L564.0 509.7 L565.0 512.6 L566.0 512.7 L567.0 511.8 L568.0 511.4 L569.0 511.2 L570.0 513.2 L571.0 514.1 L572.0 512.3 L573.0 514.7 L574.0 514.9 L574.4 512.2 L575.0 442.6 L575.6 512.2 L576.0 513.8 L577.0 510.8 L578.0 512.3 L579.0 512.8 L580.0 513.3 L581.0 513.7 L582.0 512.5 L583.0 513.4 L584.0 512.7 L585.0 515.1 L586.0 511.0 L587.0 512.4 L588.0 513.0 L589.0 513.0 L590.0 510.2 L591.0 511.8 L592.0 513.5 L593.0 512.3 L594.0 510.3 L595.0 512.3 L596.0 513.1 L597.0 512.7 L598.0 512.3 L599.0 510.3 L600.0 511.3 L601.0 512.3 L602.0 514.2 L603.0 512.0 L604.0 512.8 L605.0 511.7 L606.0 512.8 L607.0 514.2 L608.0 512.5 L609.0 512.6 L610.0 514.0 L611.0 511.7 L612.0 512.8 L613.0 511.9 L614.0 513.8 L615.0 512.4 L616.0 514.0 L617.0 512.1 L618.0 511.9 L619.0 514.2 L620.0 514.3 L621.0 512.6 L622.0 511.9 L623.0 514.0 L624.0 512.8 L625.0 512.4 L626.0 513.1 L627.0 512.6 L628.0 513.1 L629.0 513.9 L630.0 513.3 L631.0 512.0 L632.0 513.1 L633.0 511.8 L634.0 511.4 L635.0 513.0 L636.0 513.7 L637.0 510.8 L638.0 514.1 L639.0 515.4 L640.0 514.8 L641.0 509.2 L642.0 513.5 L643.0 513.0 L644.0 513.8 L645.0 514.4 L646.0 510.1 L647.0 509.1 L648.0 512.1 L649.0 513.0 L650.0 513.1 L651.0 513.6 L652.0 513.0 L653.0 514.5 L654.0 511.8 L655.0 512.2 L656.0 513.8 L657.0 513.3 L658.0 515.1 L659.0 511.8 L660.0 510.7 L661.0 512.5 L662.0 514.2 L663.0 512.0 L664.0 511.7 L665.0 513.5 L666.0 511.3 L667.0 513.1 L668.0 512.6 L669.0 511.3 L670.0 515.5" fill="none" stroke="#8ab8ff" stroke-width="1" stroke-linejoin="miter" stroke-miterlimit="2"/>
<text x="37.4" y="548.3" font-size="9.6" fill="#6e9fff" letter-spacing="0.35" stroke="#6e9fff" stroke-width="0.25">Name</text>
<text x="573.2" y="548.3" font-size="10.5" fill="#6e9fff" text-anchor="end" stroke="#6e9fff" stroke-width="0.25">Last *</text>
<text x="623.6" y="548.3" font-size="10.5" fill="#6e9fff" text-anchor="end" stroke="#6e9fff" stroke-width="0.25">Max</text>
<text x="671" y="548.3" font-size="10.5" fill="#6e9fff" text-anchor="end" stroke="#6e9fff" stroke-width="0.25">Min</text>
<line x1="13" y1="553.0" x2="678" y2="553.0" stroke="rgba(204,204,220,0.10)" stroke-width="1"/>
<line x1="13" y1="573.0" x2="678" y2="573.0" stroke="rgba(204,204,220,0.10)" stroke-width="1"/>
<line x1="13" y1="592.2" x2="678" y2="592.2" stroke="rgba(204,204,220,0.10)" stroke-width="1"/>
<line x1="13" y1="611.1" x2="678" y2="611.1" stroke="rgba(204,204,220,0.10)" stroke-width="1"/>
<rect x="20" y="561.4499999999999" width="11.4" height="3.5" rx="1.75" fill="#73bf69"/>
<text x="37.4" y="566.9" font-size="9.8" fill="#ccccdc" letter-spacing="0.45" >exportertest-0</text>
<text x="573.2" y="566.9" font-size="10" fill="#ccccdc" text-anchor="end" stroke="#ccccdc" stroke-width="0.15">42.3 µs</text>
<text x="623.6" y="566.9" font-size="10" fill="#ccccdc" text-anchor="end" stroke="#ccccdc" stroke-width="0.15">428 µs</text>
<text x="671" y="566.9" font-size="10" fill="#ccccdc" text-anchor="end" stroke="#ccccdc" stroke-width="0.15">0 s</text>
<rect x="20" y="580.25" width="11.4" height="3.5" rx="1.75" fill="#e0b400"/>
<text x="37.4" y="585.7" font-size="9.8" fill="#ccccdc" letter-spacing="0.45" >exportertest-1</text>
<text x="573.2" y="585.7" font-size="10" fill="#ccccdc" text-anchor="end" stroke="#ccccdc" stroke-width="0.15">26.5 µs</text>
<text x="623.6" y="585.7" font-size="10" fill="#ccccdc" text-anchor="end" stroke="#ccccdc" stroke-width="0.15">427 µs</text>
<text x="671" y="585.7" font-size="10" fill="#ccccdc" text-anchor="end" stroke="#ccccdc" stroke-width="0.15">18.0 µs</text>
<rect x="20" y="599.15" width="11.4" height="3.5" rx="1.75" fill="#8ab8ff"/>
<text x="37.4" y="604.6" font-size="9.8" fill="#ccccdc" letter-spacing="0.45" >exportertest-2</text>
<text x="573.2" y="604.6" font-size="10" fill="#ccccdc" text-anchor="end" stroke="#ccccdc" stroke-width="0.15">24.6 µs</text>
<text x="623.6" y="604.6" font-size="10" fill="#ccccdc" text-anchor="end" stroke="#ccccdc" stroke-width="0.15">711 µs</text>
<text x="671" y="604.6" font-size="10" fill="#ccccdc" text-anchor="end" stroke="#ccccdc" stroke-width="0.15">0 s</text>
<line x1="738" y1="371.1" x2="1356.7" y2="371.1" stroke="rgba(240,250,255,0.09)" stroke-width="1"/>
<line x1="738" y1="407.9" x2="1356.7" y2="407.9" stroke="rgba(240,250,255,0.09)" stroke-width="1"/>
<line x1="738" y1="443.9" x2="1356.7" y2="443.9" stroke="rgba(240,250,255,0.09)" stroke-width="1"/>
<line x1="738" y1="480.9" x2="1356.7" y2="480.9" stroke="rgba(240,250,255,0.09)" stroke-width="1"/>
<line x1="738" y1="517.8" x2="1356.7" y2="517.8" stroke="rgba(240,250,255,0.09)" stroke-width="1"/>
<text x="760.5" y="532.3" font-size="10" fill="#b4b4c0" text-anchor="middle" letter-spacing="0.42" >04:30</text>
<text x="812.1" y="532.3" font-size="10" fill="#b4b4c0" text-anchor="middle" letter-spacing="0.42" >05:00</text>
<text x="863.7" y="532.3" font-size="10" fill="#b4b4c0" text-anchor="middle" letter-spacing="0.42" >05:30</text>
<text x="915.2" y="532.3" font-size="10" fill="#b4b4c0" text-anchor="middle" letter-spacing="0.42" >06:00</text>
<text x="966.8" y="532.3" font-size="10" fill="#b4b4c0" text-anchor="middle" letter-spacing="0.42" >06:30</text>
<text x="1018.3" y="532.3" font-size="10" fill="#b4b4c0" text-anchor="middle" letter-spacing="0.42" >07:00</text>
<text x="1069.9" y="532.3" font-size="10" fill="#b4b4c0" text-anchor="middle" letter-spacing="0.42" >07:30</text>
<text x="1121.5" y="532.3" font-size="10" fill="#b4b4c0" text-anchor="middle" letter-spacing="0.42" >08:00</text>
<text x="1173.0" y="532.3" font-size="10" fill="#b4b4c0" text-anchor="middle" letter-spacing="0.42" >08:30</text>
<text x="1224.6" y="532.3" font-size="10" fill="#b4b4c0" text-anchor="middle" letter-spacing="0.42" >09:00</text>
<text x="1276.1" y="532.3" font-size="10" fill="#b4b4c0" text-anchor="middle" letter-spacing="0.42" >09:30</text>
<text x="1327.7" y="532.3" font-size="10" fill="#b4b4c0" text-anchor="middle" letter-spacing="0.42" >10:00</text>
<line x1="760.3" y1="360.8" x2="760.3" y2="517.4" stroke="rgba(240,250,255,0.09)" stroke-width="1"/>
<line x1="811.9" y1="360.8" x2="811.9" y2="517.4" stroke="rgba(240,250,255,0.09)" stroke-width="1"/>
<line x1="863.5" y1="360.8" x2="863.5" y2="517.4" stroke="rgba(240,250,255,0.09)" stroke-width="1"/>
<line x1="915.0" y1="360.8" x2="915.0" y2="517.4" stroke="rgba(240,250,255,0.09)" stroke-width="1"/>
<line x1="966.6" y1="360.8" x2="966.6" y2="517.4" stroke="rgba(240,250,255,0.09)" stroke-width="1"/>
<line x1="1018.1" y1="360.8" x2="1018.1" y2="517.4" stroke="rgba(240,250,255,0.09)" stroke-width="1"/>
<line x1="1069.7" y1="360.8" x2="1069.7" y2="517.4" stroke="rgba(240,250,255,0.09)" stroke-width="1"/>
<line x1="1121.3" y1="360.8" x2="1121.3" y2="517.4" stroke="rgba(240,250,255,0.09)" stroke-width="1"/>
<line x1="1172.8" y1="360.8" x2="1172.8" y2="517.4" stroke="rgba(240,250,255,0.09)" stroke-width="1"/>
<line x1="1224.4" y1="360.8" x2="1224.4" y2="517.4" stroke="rgba(240,250,255,0.09)" stroke-width="1"/>
<line x1="1275.9" y1="360.8" x2="1275.9" y2="517.4" stroke="rgba(240,250,255,0.09)" stroke-width="1"/>
<line x1="1327.5" y1="360.8" x2="1327.5" y2="517.4" stroke="rgba(240,250,255,0.09)" stroke-width="1"/>
<text x="733.82" y="374.7" font-size="10.0" fill="#b4b4c0" text-anchor="end" letter-spacing="0.32" >800 µs</text>
<text x="733.82" y="411.5" font-size="10.0" fill="#b4b4c0" text-anchor="end" letter-spacing="0.32" >600 µs</text>
<text x="733.82" y="447.5" font-size="10.0" fill="#b4b4c0" text-anchor="end" letter-spacing="0.32" >400 µs</text>
<text x="733.82" y="484.5" font-size="10.0" fill="#b4b4c0" text-anchor="end" letter-spacing="0.32" >200 µs</text>
<text x="733.82" y="521.4" font-size="10.0" fill="#b4b4c0" text-anchor="end" letter-spacing="0.32" >0 s</text>
<path d="M738.0 505.6 L739.0 502.3 L740.0 496.9 L741.0 502.7 L742.0 498.1 L743.0 505.2 L744.0 504.3 L745.0 502.6 L746.0 503.0 L747.0 501.8 L748.0 501.2 L749.0 500.0 L750.0 499.3 L751.0 499.6 L752.0 500.4 L753.0 500.9 L754.0 501.7 L755.0 502.1 L756.0 503.4 L757.0 502.9 L758.0 504.0 L759.0 504.0 L760.0 505.0 L761.0 502.1 L762.0 502.6 L763.0 504.3 L764.0 502.6 L765.0 500.0 L766.0 503.1 L767.0 503.7 L768.0 502.6 L769.0 504.0 L770.0 505.0 L771.0 500.9 L772.0 500.2 L773.0 504.2 L774.0 502.2 L775.0 505.1 L776.0 506.9 L777.0 498.6 L778.0 502.7 L779.0 503.2 L780.0 503.6 L781.0 503.1 L782.0 502.0 L783.0 503.7 L784.0 498.8 L785.0 503.7 L786.0 503.3 L787.0 504.9 L788.0 499.8 L789.0 503.8 L790.0 502.0 L791.0 503.4 L792.0 504.2 L793.0 500.7 L794.0 503.4 L795.0 505.3 L796.0 504.9 L797.0 502.4 L798.0 500.0 L799.0 501.8 L800.0 503.3 L801.0 503.4 L802.0 502.8 L803.0 502.7 L804.0 489.7 L805.0 485.7 L806.0 491.0 L807.0 489.4 L808.0 489.9 L809.0 487.9 L810.0 490.3 L811.0 487.1 L812.0 489.9 L813.0 490.5 L814.0 486.4 L815.0 490.0 L816.0 490.2 L817.0 488.1 L818.0 489.4 L819.0 488.8 L820.0 490.4 L821.0 489.8 L822.0 490.9 L823.0 489.1 L824.0 503.7 L825.0 503.2 L826.0 504.6 L827.0 503.1 L828.0 502.1 L829.0 503.3 L830.0 500.9 L831.0 503.0 L832.0 500.9 L833.0 503.2 L834.0 504.1 L835.0 504.0 L836.0 503.0 L837.0 499.7 L838.0 502.6 L839.0 504.9 L840.0 502.4 L841.0 503.9 L842.0 502.4 L843.0 505.3 L844.0 500.5 L845.0 502.5 L846.0 502.7 L847.0 503.9 L848.0 503.3 L849.0 503.4 L850.0 500.2 L851.0 505.8 L852.0 503.5 L853.0 502.4 L854.0 503.1 L855.0 501.8 L856.0 503.7 L857.0 502.6 L858.0 504.2 L859.0 503.5 L860.0 503.1 L861.0 501.9 L862.0 503.7 L863.0 501.6 L864.0 504.6 L865.0 504.3 L866.0 502.2 L867.0 500.7 L868.0 504.1 L869.0 504.1 L870.0 501.8 L871.0 502.7 L872.0 503.4 L873.0 504.2 L874.0 502.8 L875.0 502.2 L876.0 502.6 L877.0 502.0 L878.0 505.5 L879.0 505.6 L880.0 500.6 L881.0 502.7 L882.0 505.2 L883.0 505.0 L884.0 505.8 L885.0 504.9 L886.0 503.8 L887.0 503.6 L888.0 505.0 L889.0 503.8 L890.0 501.1 L891.0 503.4 L892.0 500.9 L893.0 504.3 L894.0 503.7 L895.0 503.0 L896.0 503.1 L897.0 501.0 L898.0 502.6 L899.0 502.4 L900.0 503.3 L901.0 502.9 L902.0 503.4 L903.0 503.5 L904.0 501.4 L905.0 501.6 L906.0 504.7 L907.0 502.1 L908.0 499.2 L909.0 504.2 L910.0 502.8 L911.0 506.0 L912.0 502.0 L913.0 502.4 L914.0 500.6 L915.0 504.1 L916.0 502.7 L917.0 504.0 L918.0 503.9 L919.0 506.4 L920.0 503.9 L921.0 502.7 L922.0 502.6 L923.0 504.2 L924.0 500.7 L925.0 502.6 L926.0 501.2 L927.0 501.9 L928.0 504.8 L929.0 502.0 L930.0 502.6 L931.0 504.3 L932.0 499.9 L933.0 503.4 L934.0 501.6 L935.0 503.5 L936.0 502.6 L937.0 504.5 L938.0 501.9 L939.0 503.8 L940.0 505.1 L941.0 503.1 L942.0 504.9 L943.0 504.1 L944.0 503.4 L945.0 502.3 L946.0 503.5 L947.0 503.4 L948.0 504.2 L949.0 504.7 L950.0 504.5 L951.0 504.0 L952.0 502.5 L953.0 502.6 L954.0 503.9 L955.0 501.7 L956.0 502.8 L957.0 503.1 L958.0 503.8 L959.0 504.0 L960.0 501.7 L961.0 504.1 L962.0 500.8 L963.0 502.4 L964.0 504.4 L965.0 502.8 L966.0 503.8 L967.0 506.5 L968.0 502.9 L969.0 503.0 L970.0 500.5 L971.0 503.7 L972.0 505.1 L973.0 503.5 L974.0 503.3 L975.0 507.1 L976.0 503.4 L977.0 503.4 L978.0 503.4 L979.0 501.9 L980.0 504.2 L981.0 504.9 L982.0 504.6 L982.4 504.3 L983.0 472.7 L983.6 504.3 L984.0 498.6 L985.0 502.6 L986.0 505.4 L987.0 501.6 L988.0 501.4 L989.0 503.2 L990.0 501.3 L991.0 501.6 L992.0 501.3 L993.0 501.7 L994.0 502.9 L995.0 504.2 L996.0 503.4 L997.0 504.2 L998.0 502.7 L999.0 499.7 L1000.0 502.2 L1001.0 500.9 L1002.0 503.5 L1003.0 503.9 L1004.0 502.4 L1005.0 503.0 L1006.0 504.0 L1007.0 504.7 L1008.0 502.2 L1009.0 504.4 L1010.0 502.5 L1011.0 504.3 L1012.0 499.7 L1013.0 502.6 L1014.0 503.6 L1015.0 501.5 L1016.0 499.9 L1017.0 501.6 L1018.0 502.8 L1019.0 503.7 L1020.0 503.9 L1021.0 503.1 L1022.0 501.2 L1023.0 501.7 L1024.0 503.8 L1025.0 504.4 L1026.0 503.3 L1027.0 505.7 L1028.0 502.4 L1029.0 503.1 L1030.0 503.4 L1031.0 502.9 L1032.0 501.4 L1033.0 501.4 L1034.0 503.2 L1035.0 503.7 L1036.0 505.5 L1037.0 503.3 L1038.0 495.3 L1039.0 501.3 L1040.0 501.0 L1041.0 501.1 L1042.0 503.8 L1043.0 503.6 L1044.0 503.6 L1045.0 501.3 L1046.0 502.7 L1047.0 503.1 L1048.0 505.9 L1049.0 504.5 L1050.0 503.0 L1051.0 504.3 L1052.0 503.4 L1053.0 502.8 L1054.0 502.7 L1055.0 500.9 L1056.0 505.2 L1057.0 499.8 L1058.0 501.7 L1059.0 502.6 L1060.0 502.4 L1061.0 503.0 L1062.0 502.6 L1063.0 505.3 L1064.0 501.0 L1065.0 504.6 L1066.0 503.0 L1067.0 504.5 L1068.0 502.5 L1069.0 501.9 L1070.0 503.5 L1071.0 505.4 L1072.0 501.6 L1073.0 504.2 L1074.0 505.1 L1075.0 503.9 L1076.0 503.1 L1077.0 505.9 L1078.0 503.3 L1079.0 504.3 L1080.0 503.5 L1081.0 503.9 L1082.0 502.6 L1083.0 500.1 L1084.0 504.9 L1085.0 503.3 L1086.0 504.0 L1087.0 501.8 L1088.0 504.5 L1089.0 505.0 L1090.0 503.5 L1091.0 501.2 L1092.0 504.2 L1093.0 501.1 L1094.0 504.0 L1095.0 504.3 L1096.0 501.5 L1097.0 502.3 L1098.0 499.5 L1099.0 500.2 L1100.0 501.3 L1101.0 501.0 L1102.0 500.9 L1103.0 504.1 L1104.0 503.4 L1105.0 504.6 L1106.0 502.7 L1107.0 505.0 L1108.0 501.0 L1109.0 503.1 L1110.0 504.0 L1111.0 505.6 L1112.0 507.2 L1113.0 508.9 L1114.0 510.5 L1115.0 512.1 L1116.0 513.8 L1117.0 515.4 L1117.4 517.0 L1118.0 434.6 L1118.6 517.0 L1119.0 502.2 L1120.0 492.3 L1121.0 491.2 L1122.0 488.0 L1123.0 488.7 L1124.0 491.7 L1125.0 491.4 L1126.0 486.4 L1127.0 488.7 L1128.0 488.2 L1129.0 487.3 L1130.0 490.5 L1131.0 489.0 L1132.0 488.2 L1133.0 489.4 L1134.0 486.3 L1135.0 487.2 L1136.0 491.9 L1137.0 487.9 L1138.0 489.1 L1139.0 487.8 L1140.0 492.9 L1141.0 489.0 L1142.0 489.8 L1143.0 487.9 L1144.0 490.2 L1145.0 488.0 L1146.0 486.0 L1147.0 489.3 L1148.0 488.5 L1149.0 486.3 L1150.0 489.4 L1151.0 488.2 L1152.0 491.3 L1153.0 489.4 L1154.0 486.9 L1155.0 489.9 L1156.0 489.5 L1157.0 490.6 L1158.0 490.3 L1159.0 487.1 L1160.0 490.3 L1161.0 488.7 L1162.0 489.9 L1163.0 490.2 L1164.0 491.5 L1165.0 488.8 L1166.0 487.8 L1167.0 487.6 L1168.0 488.0 L1169.0 487.4 L1170.0 486.2 L1171.0 488.5 L1172.0 487.2 L1173.0 487.5 L1174.0 489.7 L1174.4 487.7 L1175.0 450.7 L1175.6 487.7 L1176.0 489.0 L1177.0 488.5 L1178.0 487.3 L1179.0 489.9 L1180.0 490.6 L1181.0 491.5 L1182.0 492.4 L1183.0 488.7 L1184.0 486.8 L1185.0 505.1 L1186.0 502.1 L1187.0 503.4 L1188.0 503.3 L1189.0 503.1 L1190.0 499.9 L1191.0 504.4 L1192.0 502.0 L1193.0 502.9 L1194.0 500.5 L1195.0 501.7 L1196.0 501.0 L1197.0 499.6 L1198.0 503.4 L1199.0 503.2 L1200.0 503.4 L1201.0 503.5 L1202.0 504.2 L1203.0 503.4 L1204.0 503.9 L1204.4 502.0 L1205.0 477.0 L1205.6 502.0 L1206.0 503.9 L1207.0 502.2 L1208.0 503.1 L1209.0 500.0 L1210.0 502.5 L1211.0 503.9 L1212.0 502.9 L1213.0 501.7 L1214.0 504.2 L1215.0 501.4 L1216.0 502.8 L1217.0 503.0 L1218.0 502.6 L1219.0 504.5 L1220.0 501.8 L1221.0 504.9 L1222.0 504.8 L1223.0 503.6 L1224.0 503.8 L1225.0 502.2 L1226.0 502.2 L1227.0 503.9 L1228.0 503.6 L1229.0 504.7 L1230.0 502.8 L1231.0 504.0 L1232.0 501.6 L1233.0 504.1 L1234.0 504.1 L1235.0 504.3 L1236.0 502.1 L1237.0 501.7 L1238.0 502.8 L1239.0 503.3 L1240.0 504.6 L1241.0 504.4 L1242.0 503.4 L1243.0 498.4 L1244.0 505.9 L1245.0 505.2 L1246.0 504.0 L1247.0 504.3 L1248.0 503.5 L1249.0 503.5 L1250.0 503.3 L1251.0 502.5 L1252.0 505.7 L1253.0 501.6 L1254.0 503.7 L1255.0 500.7 L1256.0 503.9 L1257.0 503.9 L1258.0 501.6 L1259.0 505.5 L1260.0 503.5 L1261.0 505.3 L1262.0 504.3 L1263.0 501.9 L1264.0 502.3 L1265.0 505.0 L1266.0 500.9 L1267.0 505.9 L1268.0 504.5 L1269.0 499.4 L1270.0 502.7 L1271.0 504.9 L1272.0 500.8 L1273.0 504.2 L1274.0 500.6 L1275.0 504.3 L1276.0 504.0 L1277.0 502.9 L1278.0 502.3 L1279.0 502.5 L1280.0 503.8 L1281.0 503.6 L1282.0 502.6 L1283.0 503.5 L1284.0 503.6 L1285.0 504.4 L1286.0 502.2 L1287.0 503.4 L1288.0 501.2 L1289.0 504.3 L1290.0 501.5 L1291.0 502.9 L1292.0 503.9 L1293.0 500.7 L1294.0 502.0 L1295.0 501.9 L1296.0 504.3 L1297.0 504.3 L1298.0 502.1 L1299.0 505.8 L1300.0 502.4 L1301.0 503.0 L1302.0 503.8 L1303.0 503.7 L1304.0 503.4 L1305.0 501.9 L1306.0 503.9 L1307.0 497.8 L1308.0 502.1 L1309.0 501.5 L1310.0 502.4 L1311.0 503.0 L1312.0 503.2 L1313.0 500.8 L1314.0 504.0 L1315.0 503.8 L1316.0 503.5 L1317.0 503.0 L1318.0 500.1 L1319.0 504.1 L1320.0 499.2 L1321.0 502.6 L1322.0 503.2 L1323.0 503.5 L1324.0 502.8 L1325.0 503.5 L1325.4 502.8 L1326.0 458.6 L1326.6 502.8 L1327.0 501.4 L1328.0 502.3 L1329.0 500.2 L1330.0 500.7 L1331.0 503.0 L1332.0 503.8 L1333.0 503.0 L1334.0 501.5 L1335.0 502.5 L1336.0 503.7 L1337.0 501.1 L1338.0 501.9 L1339.0 502.5 L1340.0 501.3 L1341.0 502.4 L1342.0 500.6 L1343.0 501.7 L1344.0 504.1 L1345.0 507.1 L1346.0 502.6 L1347.0 504.4 L1348.0 501.7 L1349.0 502.8 L1350.0 503.0 L1351.0 502.6 L1352.0 503.9 L1352.4 504.1 L1353.0 470.0 L1353.6 504.1 L1354.0 503.1 L1355.0 502.0 L1356.0 499.3" fill="none" stroke="#73bf69" stroke-width="1" stroke-linejoin="miter" stroke-miterlimit="2"/>
<path d="M738.0 504.1 L739.0 506.4 L740.0 504.2 L740.4 505.6 L741.0 441.6 L741.6 505.6 L742.0 506.2 L743.0 506.8 L744.0 505.9 L745.0 506.6 L746.0 506.5 L747.0 504.9 L748.0 503.8 L749.0 504.4 L750.0 502.1 L751.0 503.0 L752.0 508.2 L753.0 504.1 L754.0 506.0 L755.0 505.2 L756.0 505.6 L757.0 506.4 L758.0 505.4 L759.0 504.6 L760.0 506.9 L761.0 505.1 L762.0 506.2 L763.0 505.5 L764.0 504.9 L765.0 503.1 L766.0 506.7 L767.0 504.4 L768.0 505.9 L769.0 501.9 L770.0 506.6 L771.0 505.8 L772.0 504.2 L773.0 505.2 L774.0 507.3 L775.0 506.0 L776.0 507.0 L777.0 505.8 L778.0 507.4 L779.0 504.6 L780.0 506.4 L781.0 505.7 L782.0 505.4 L783.0 504.4 L784.0 503.4 L785.0 505.9 L786.0 505.8 L787.0 504.0 L788.0 505.0 L789.0 505.5 L790.0 505.9 L791.0 504.9 L792.0 505.0 L793.0 505.3 L794.0 505.5 L795.0 504.3 L796.0 502.9 L797.0 505.0 L798.0 505.9 L799.0 505.9 L800.0 506.1 L801.0 504.8 L802.0 505.4 L803.0 506.4 L804.0 502.7 L805.0 504.8 L806.0 503.5 L807.0 505.2 L808.0 505.2 L809.0 506.1 L810.0 506.8 L811.0 505.2 L812.0 506.9 L813.0 504.4 L814.0 505.9 L815.0 506.3 L816.0 506.7 L817.0 499.9 L818.0 506.9 L819.0 506.5 L820.0 504.7 L821.0 504.9 L822.0 504.4 L823.0 504.3 L824.0 506.5 L825.0 504.4 L826.0 504.4 L827.0 505.9 L828.0 505.5 L829.0 507.1 L830.0 505.2 L831.0 506.3 L832.0 505.5 L833.0 507.1 L834.0 506.1 L835.0 506.7 L836.0 505.4 L837.0 505.2 L838.0 503.7 L839.0 506.4 L840.0 505.0 L841.0 505.5 L842.0 506.3 L843.0 505.1 L844.0 504.9 L845.0 504.5 L846.0 506.8 L847.0 505.9 L848.0 506.8 L849.0 505.2 L850.0 504.8 L851.0 506.5 L852.0 505.2 L853.0 503.6 L854.0 506.1 L855.0 505.5 L856.0 505.8 L857.0 507.0 L858.0 505.7 L859.0 504.6 L860.0 504.8 L861.0 504.6 L862.0 505.8 L863.0 506.8 L864.0 506.0 L865.0 504.0 L866.0 504.9 L867.0 504.5 L868.0 505.4 L869.0 504.9 L870.0 505.3 L871.0 505.3 L872.0 504.8 L873.0 503.7 L874.0 506.0 L875.0 505.5 L876.0 506.9 L877.0 506.6 L878.0 505.5 L879.0 504.3 L880.0 505.5 L881.0 504.7 L882.0 505.5 L883.0 504.8 L884.0 507.2 L885.0 502.0 L886.0 506.1 L887.0 504.3 L888.0 505.6 L889.0 506.9 L890.0 505.7 L891.0 504.9 L892.0 506.2 L893.0 505.7 L894.0 506.5 L895.0 506.7 L896.0 505.2 L897.0 507.5 L898.0 505.5 L899.0 506.1 L900.0 504.7 L901.0 506.6 L902.0 505.4 L903.0 505.9 L904.0 505.4 L905.0 503.2 L906.0 506.3 L907.0 504.3 L908.0 505.2 L909.0 505.1 L910.0 503.3 L911.0 504.8 L912.0 505.2 L913.0 506.2 L914.0 505.5 L915.0 504.5 L916.0 503.8 L917.0 505.4 L917.4 506.2 L918.0 498.7 L918.6 506.2 L919.0 505.1 L920.0 504.5 L921.0 504.8 L922.0 506.5 L923.0 503.6 L924.0 504.4 L925.0 503.9 L926.0 504.9 L927.0 505.5 L928.0 505.1 L929.0 505.1 L930.0 503.8 L931.0 505.4 L932.0 506.2 L933.0 504.4 L934.0 507.5 L935.0 505.6 L936.0 505.7 L937.0 506.4 L938.0 503.0 L939.0 506.1 L939.4 506.1 L940.0 478.5 L940.6 506.1 L941.0 504.2 L942.0 506.4 L943.0 506.6 L944.0 505.0 L945.0 508.0 L946.0 506.7 L947.0 506.0 L948.0 504.7 L949.0 505.8 L950.0 506.1 L951.0 505.9 L952.0 503.9 L953.0 505.1 L954.0 505.8 L955.0 504.9 L956.0 505.3 L957.0 505.9 L958.0 505.3 L959.0 504.6 L960.0 504.0 L961.0 507.1 L962.0 506.2 L963.0 506.3 L964.0 505.7 L965.0 505.6 L966.0 506.6 L967.0 506.6 L968.0 505.0 L969.0 504.6 L970.0 506.4 L971.0 503.8 L972.0 506.2 L973.0 504.6 L974.0 504.4 L975.0 505.5 L976.0 503.9 L977.0 505.1 L978.0 505.4 L979.0 506.3 L980.0 505.7 L981.0 504.5 L982.0 501.0 L983.0 505.7 L984.0 504.5 L985.0 504.8 L986.0 505.8 L987.0 505.3 L988.0 505.9 L989.0 503.3 L990.0 504.3 L991.0 505.6 L992.0 505.6 L993.0 503.6 L994.0 505.7 L995.0 503.8 L996.0 503.7 L997.0 506.2 L998.0 504.7 L999.0 502.6 L1000.0 505.1 L1001.0 507.8 L1002.0 506.3 L1003.0 504.7 L1004.0 505.9 L1005.0 503.9 L1006.0 506.2 L1007.0 504.3 L1008.0 505.0 L1009.0 506.8 L1010.0 506.1 L1011.0 504.1 L1012.0 506.6 L1013.0 503.1 L1014.0 506.2 L1015.0 506.8 L1016.0 505.8 L1017.0 505.3 L1018.0 507.2 L1019.0 506.1 L1020.0 506.2 L1021.0 504.5 L1022.0 504.2 L1023.0 505.1 L1024.0 504.8 L1025.0 505.5 L1026.0 505.0 L1027.0 506.3 L1028.0 507.2 L1029.0 505.5 L1030.0 504.3 L1031.0 506.4 L1032.0 507.0 L1033.0 505.4 L1034.0 504.9 L1035.0 504.8 L1036.0 504.1 L1037.0 495.7 L1038.0 495.8 L1039.0 499.0 L1040.0 494.5 L1041.0 495.9 L1042.0 495.3 L1043.0 497.2 L1044.0 496.8 L1045.0 496.2 L1046.0 496.9 L1047.0 499.4 L1048.0 497.2 L1049.0 497.5 L1050.0 495.6 L1051.0 495.0 L1052.0 496.5 L1053.0 494.6 L1054.0 496.0 L1055.0 497.3 L1056.0 496.5 L1057.0 494.5 L1058.0 498.1 L1059.0 494.5 L1060.0 496.8 L1061.0 496.4 L1062.0 493.1 L1063.0 498.5 L1064.0 494.9 L1065.0 496.0 L1066.0 495.8 L1067.0 492.5 L1068.0 495.6 L1069.0 496.1 L1070.0 492.0 L1071.0 496.9 L1072.0 495.0 L1073.0 494.9 L1074.0 494.8 L1075.0 498.8 L1076.0 497.1 L1077.0 496.1 L1078.0 496.5 L1079.0 496.9 L1080.0 496.1 L1081.0 497.4 L1082.0 497.4 L1083.0 494.2 L1083.4 494.3 L1084.0 481.7 L1084.6 494.3 L1085.0 495.3 L1086.0 496.4 L1087.0 497.6 L1088.0 497.4 L1089.0 497.2 L1090.0 495.1 L1091.0 497.0 L1092.0 495.2 L1093.0 494.7 L1094.0 497.6 L1095.0 498.0 L1096.0 494.3 L1097.0 495.8 L1098.0 493.5 L1099.0 497.5 L1100.0 497.0 L1101.0 499.5 L1102.0 496.5 L1103.0 497.4 L1104.0 497.9 L1105.0 497.3 L1106.0 496.4 L1107.0 496.6 L1108.0 498.2 L1109.0 496.7 L1110.0 494.9 L1111.0 496.0 L1112.0 505.4 L1113.0 505.7 L1114.0 505.4 L1115.0 506.9 L1116.0 503.8 L1117.0 501.7 L1118.0 504.3 L1119.0 505.4 L1120.0 505.6 L1121.0 505.2 L1122.0 505.5 L1123.0 503.9 L1124.0 505.3 L1125.0 505.2 L1126.0 505.6 L1127.0 506.9 L1128.0 507.6 L1129.0 506.1 L1130.0 505.1 L1131.0 505.5 L1132.0 505.5 L1133.0 506.0 L1133.4 506.4 L1134.0 472.7 L1134.6 506.4 L1135.0 504.6 L1136.0 507.3 L1137.0 504.7 L1138.0 506.1 L1139.0 504.7 L1140.0 504.7 L1141.0 505.3 L1142.0 505.0 L1143.0 505.1 L1144.0 504.2 L1145.0 504.1 L1146.0 506.3 L1147.0 505.0 L1148.0 504.4 L1149.0 507.4 L1150.0 506.2 L1151.0 508.7 L1152.0 504.8 L1153.0 505.8 L1154.0 505.0 L1155.0 505.1 L1156.0 506.3 L1157.0 507.2 L1158.0 505.7 L1159.0 505.3 L1160.0 504.6 L1161.0 506.6 L1162.0 506.1 L1163.0 505.7 L1164.0 505.3 L1165.0 505.5 L1166.0 504.0 L1167.0 504.0 L1168.0 505.5 L1169.0 505.5 L1170.0 506.8 L1171.0 506.1 L1172.0 505.5 L1173.0 506.6 L1174.0 506.7 L1175.0 506.0 L1176.0 504.5 L1177.0 506.2 L1178.0 505.6 L1179.0 505.6 L1180.0 504.2 L1181.0 505.3 L1182.0 506.8 L1183.0 505.5 L1184.0 506.1 L1185.0 505.1 L1186.0 506.4 L1187.0 505.6 L1188.0 503.4 L1189.0 505.8 L1190.0 505.3 L1191.0 506.1 L1192.0 504.0 L1193.0 504.3 L1194.0 506.1 L1195.0 507.1 L1196.0 504.4 L1197.0 505.2 L1198.0 504.8 L1199.0 506.4 L1200.0 506.2 L1201.0 503.4 L1202.0 504.7 L1203.0 506.3 L1204.0 505.2 L1205.0 505.5 L1206.0 506.3 L1207.0 505.2 L1208.0 506.5 L1209.0 505.2 L1210.0 506.0 L1210.4 506.3 L1211.0 460.0 L1211.6 506.3 L1212.0 506.1 L1212.4 505.6 L1213.0 408.7 L1213.6 505.6 L1214.0 505.7 L1215.0 505.1 L1216.0 506.1 L1217.0 504.9 L1218.0 506.9 L1219.0 504.0 L1220.0 505.2 L1221.0 507.5 L1222.0 505.2 L1223.0 506.5 L1224.0 505.9 L1225.0 504.8 L1226.0 505.5 L1227.0 505.0 L1228.0 502.7 L1229.0 503.1 L1230.0 504.8 L1231.0 507.1 L1232.0 503.9 L1233.0 505.5 L1234.0 506.0 L1235.0 505.1 L1236.0 505.4 L1237.0 505.9 L1238.0 507.7 L1239.0 504.7 L1240.0 507.3 L1241.0 504.1 L1241.4 505.1 L1242.0 492.5 L1242.6 505.1 L1243.0 505.8 L1244.0 504.2 L1245.0 505.4 L1246.0 504.7 L1247.0 505.4 L1248.0 505.7 L1249.0 505.9 L1250.0 505.9 L1251.0 502.7 L1251.4 505.8 L1252.0 490.0 L1252.6 505.8 L1253.0 505.1 L1254.0 507.1 L1255.0 506.6 L1256.0 504.7 L1257.0 504.9 L1258.0 505.6 L1259.0 506.1 L1260.0 505.1 L1261.0 505.2 L1262.0 505.4 L1263.0 502.4 L1264.0 504.8 L1265.0 506.2 L1266.0 507.3 L1267.0 506.1 L1268.0 505.7 L1269.0 504.9 L1270.0 505.5 L1271.0 506.0 L1272.0 506.7 L1273.0 506.0 L1274.0 506.0 L1275.0 503.6 L1276.0 505.4 L1277.0 504.8 L1278.0 504.1 L1279.0 503.3 L1280.0 505.2 L1281.0 505.5 L1282.0 504.2 L1283.0 506.4 L1284.0 505.0 L1285.0 506.1 L1286.0 506.9 L1287.0 505.7 L1288.0 506.4 L1289.0 507.3 L1290.0 507.3 L1291.0 503.6 L1292.0 504.2 L1293.0 505.8 L1294.0 506.8 L1295.0 504.5 L1296.0 505.4 L1297.0 506.6 L1298.0 505.8 L1299.0 505.4 L1300.0 505.1 L1301.0 504.3 L1302.0 506.2 L1303.0 507.7 L1304.0 505.2 L1305.0 505.9 L1306.0 506.3 L1307.0 503.1 L1308.0 505.2 L1309.0 506.5 L1310.0 504.0 L1311.0 504.1 L1312.0 504.9 L1313.0 504.7 L1314.0 506.0 L1315.0 505.1 L1316.0 503.8 L1317.0 505.2 L1318.0 505.5 L1319.0 504.9 L1320.0 505.3 L1321.0 506.9 L1321.4 503.8 L1322.0 433.0 L1322.6 503.8 L1323.0 505.1 L1324.0 504.5 L1325.0 506.1 L1326.0 505.3 L1327.0 507.7 L1328.0 506.3 L1329.0 505.1 L1330.0 506.3 L1330.4 504.6 L1331.0 479.8 L1331.6 504.6 L1332.0 507.8 L1333.0 506.6 L1334.0 505.9 L1335.0 505.4 L1336.0 506.5 L1337.0 505.1 L1338.0 505.9 L1339.0 505.7 L1340.0 506.4 L1341.0 505.0 L1342.0 505.3 L1343.0 507.7 L1344.0 505.5 L1345.0 506.7 L1346.0 505.3 L1347.0 506.6 L1348.0 505.6 L1349.0 505.4 L1350.0 507.0 L1351.0 505.0 L1352.0 505.6 L1353.0 506.9 L1354.0 505.9 L1355.0 504.1 L1356.0 507.4" fill="none" stroke="#e0b400" stroke-width="1" stroke-linejoin="miter" stroke-miterlimit="2"/>
<path d="M738.0 506.8 L739.0 507.1 L740.0 505.7 L741.0 506.3 L742.0 505.7 L743.0 505.9 L744.0 505.0 L745.0 506.0 L746.0 505.1 L747.0 506.6 L748.0 506.2 L749.0 506.6 L750.0 505.4 L751.0 506.4 L752.0 505.8 L753.0 506.2 L754.0 505.9 L755.0 504.0 L756.0 505.9 L757.0 507.4 L758.0 507.1 L759.0 505.8 L760.0 505.6 L761.0 502.0 L762.0 506.0 L763.0 506.6 L764.0 507.1 L765.0 506.5 L766.0 505.1 L767.0 504.1 L768.0 507.3 L769.0 507.6 L770.0 508.1 L771.0 505.7 L772.0 505.7 L773.0 508.4 L774.0 507.6 L775.0 505.5 L776.0 505.7 L777.0 506.5 L778.0 507.2 L779.0 503.8 L780.0 506.3 L781.0 505.1 L782.0 507.6 L783.0 505.4 L784.0 503.1 L785.0 505.9 L786.0 507.1 L787.0 506.2 L788.0 505.7 L789.0 505.4 L790.0 506.0 L791.0 505.2 L792.0 506.0 L793.0 506.0 L794.0 503.7 L795.0 506.2 L796.0 505.8 L797.0 503.4 L798.0 506.8 L799.0 505.8 L800.0 505.9 L801.0 504.8 L802.0 505.7 L803.0 507.1 L804.0 506.2 L805.0 506.5 L806.0 506.4 L807.0 504.9 L808.0 504.2 L809.0 505.8 L810.0 505.5 L811.0 506.8 L812.0 503.2 L813.0 506.1 L814.0 505.2 L815.0 504.2 L816.0 506.0 L817.0 506.5 L818.0 505.4 L819.0 504.8 L820.0 505.2 L821.0 504.8 L822.0 505.8 L823.0 506.1 L824.0 506.3 L825.0 506.0 L826.0 505.9 L827.0 507.5 L828.0 506.8 L829.0 506.0 L830.0 505.7 L831.0 506.1 L832.0 508.1 L833.0 505.0 L834.0 507.1 L835.0 505.7 L836.0 508.0 L837.0 506.5 L838.0 505.3 L839.0 504.7 L840.0 506.7 L841.0 506.3 L842.0 506.0 L843.0 505.9 L844.0 507.0 L845.0 506.4 L846.0 507.5 L847.0 506.4 L848.0 505.3 L849.0 505.2 L850.0 507.3 L851.0 506.6 L851.4 506.2 L852.0 494.6 L852.6 506.2 L853.0 505.2 L854.0 504.5 L855.0 505.9 L856.0 505.7 L857.0 505.4 L858.0 506.6 L859.0 504.6 L860.0 505.5 L861.0 506.5 L862.0 506.3 L863.0 503.1 L864.0 506.7 L865.0 504.6 L866.0 506.3 L867.0 505.6 L868.0 507.8 L869.0 505.9 L870.0 506.0 L871.0 505.7 L872.0 504.4 L873.0 505.8 L874.0 506.6 L875.0 507.9 L876.0 505.2 L877.0 505.7 L878.0 506.9 L879.0 504.1 L880.0 506.1 L881.0 506.7 L882.0 504.8 L883.0 504.0 L884.0 504.5 L885.0 505.9 L886.0 504.4 L887.0 505.8 L888.0 506.2 L888.4 506.9 L889.0 481.0 L889.6 506.9 L890.0 506.6 L891.0 506.4 L892.0 506.0 L893.0 507.8 L894.0 505.7 L895.0 505.5 L895.4 505.2 L896.0 495.0 L896.6 505.2 L897.0 506.0 L898.0 505.2 L899.0 506.4 L900.0 507.2 L901.0 504.9 L902.0 507.6 L903.0 507.1 L904.0 506.1 L905.0 502.7 L906.0 506.1 L907.0 504.7 L908.0 504.7 L909.0 505.1 L910.0 507.0 L911.0 505.6 L912.0 506.9 L913.0 505.6 L914.0 502.6 L915.0 506.3 L916.0 506.1 L917.0 505.6 L918.0 505.3 L919.0 507.4 L920.0 506.3 L921.0 505.8 L922.0 507.5 L923.0 506.9 L924.0 506.0 L925.0 503.9 L926.0 505.6 L927.0 505.7 L928.0 504.3 L929.0 504.5 L930.0 507.2 L931.0 505.7 L932.0 505.3 L933.0 508.2 L934.0 505.9 L935.0 506.4 L936.0 507.5 L937.0 506.5 L938.0 507.2 L939.0 504.7 L940.0 506.7 L941.0 505.7 L942.0 505.1 L943.0 505.7 L944.0 506.3 L945.0 505.7 L946.0 505.2 L947.0 506.2 L948.0 506.2 L949.0 506.5 L950.0 505.8 L951.0 506.2 L952.0 506.7 L953.0 504.8 L954.0 506.6 L955.0 506.0 L956.0 507.4 L957.0 504.8 L958.0 505.0 L958.4 506.0 L959.0 467.6 L959.6 506.0 L960.0 504.7 L961.0 505.6 L962.0 504.8 L963.0 507.2 L964.0 507.0 L965.0 506.5 L966.0 506.2 L967.0 505.5 L968.0 506.0 L969.0 507.3 L970.0 503.1 L971.0 506.4 L972.0 505.9 L973.0 507.9 L974.0 505.5 L975.0 504.7 L976.0 506.1 L977.0 505.4 L978.0 507.0 L979.0 506.7 L980.0 506.5 L981.0 508.4 L982.0 505.8 L983.0 506.1 L984.0 506.0 L985.0 505.3 L986.0 506.7 L987.0 508.1 L988.0 504.7 L989.0 505.7 L990.0 507.8 L991.0 505.7 L992.0 505.7 L993.0 508.6 L994.0 504.4 L995.0 506.5 L996.0 507.6 L997.0 502.6 L998.0 506.0 L999.0 508.2 L1000.0 507.2 L1001.0 505.1 L1002.0 506.3 L1003.0 506.7 L1004.0 506.0 L1005.0 505.9 L1006.0 507.8 L1007.0 506.0 L1008.0 504.4 L1009.0 506.9 L1010.0 506.0 L1011.0 505.9 L1012.0 506.1 L1013.0 506.8 L1014.0 505.1 L1015.0 507.0 L1016.0 506.1 L1017.0 505.8 L1018.0 505.5 L1019.0 505.4 L1020.0 507.1 L1021.0 504.8 L1022.0 506.8 L1023.0 505.8 L1024.0 506.9 L1025.0 504.3 L1026.0 506.8 L1027.0 505.7 L1028.0 506.3 L1029.0 505.0 L1030.0 505.4 L1031.0 506.3 L1032.0 505.1 L1033.0 505.7 L1034.0 506.7 L1034.4 505.1 L1035.0 445.9 L1035.6 505.1 L1036.0 505.1 L1037.0 506.9 L1038.0 505.9 L1039.0 505.5 L1040.0 504.7 L1041.0 507.0 L1042.0 505.1 L1043.0 506.6 L1044.0 505.1 L1045.0 504.4 L1046.0 506.2 L1047.0 506.6 L1048.0 505.0 L1049.0 505.2 L1050.0 504.6 L1051.0 504.9 L1052.0 505.7 L1052.4 506.0 L1053.0 449.9 L1053.6 506.0 L1054.0 506.7 L1055.0 506.1 L1056.0 505.9 L1057.0 505.7 L1058.0 504.3 L1059.0 505.7 L1060.0 504.9 L1061.0 506.9 L1062.0 507.0 L1063.0 506.8 L1064.0 506.1 L1065.0 507.8 L1066.0 506.5 L1067.0 505.1 L1068.0 504.9 L1069.0 504.3 L1070.0 506.1 L1071.0 504.8 L1072.0 505.9 L1073.0 504.5 L1074.0 505.4 L1075.0 504.1 L1076.0 505.3 L1077.0 504.7 L1078.0 505.7 L1079.0 504.1 L1080.0 506.4 L1081.0 505.8 L1082.0 507.6 L1083.0 507.8 L1084.0 505.0 L1085.0 506.6 L1086.0 505.0 L1087.0 506.0 L1088.0 506.1 L1089.0 504.4 L1090.0 507.3 L1091.0 507.5 L1092.0 506.0 L1093.0 505.4 L1094.0 504.9 L1095.0 505.1 L1096.0 505.4 L1097.0 505.1 L1098.0 505.2 L1099.0 504.1 L1100.0 505.4 L1101.0 505.1 L1102.0 505.8 L1103.0 506.2 L1104.0 505.6 L1105.0 505.8 L1106.0 506.2 L1107.0 506.3 L1108.0 503.6 L1109.0 505.5 L1110.0 517.5 L1111.0 517.5 L1112.0 517.5 L1113.0 517.5 L1114.0 517.5 L1115.0 517.5 L1116.0 493.7 L1117.0 495.8 L1118.0 497.8 L1119.0 493.7 L1120.0 517.5 L1121.0 517.5 L1122.0 517.5 L1123.0 517.5 L1124.0 496.6 L1125.0 494.3 L1126.0 497.2 L1127.0 494.5 L1128.0 496.0 L1129.0 495.9 L1130.0 496.9 L1131.0 496.3 L1132.0 498.1 L1133.0 498.8 L1134.0 497.7 L1135.0 497.7 L1136.0 494.8 L1137.0 495.3 L1138.0 495.7 L1139.0 494.7 L1140.0 497.6 L1141.0 492.6 L1142.0 495.1 L1143.0 496.5 L1144.0 496.6 L1145.0 495.3 L1146.0 496.3 L1147.0 494.9 L1148.0 493.1 L1149.0 496.6 L1150.0 494.2 L1151.0 494.6 L1152.0 494.8 L1153.0 494.2 L1154.0 495.0 L1155.0 493.5 L1156.0 494.6 L1157.0 494.5 L1158.0 496.8 L1159.0 494.9 L1160.0 495.4 L1161.0 493.3 L1162.0 497.8 L1163.0 496.7 L1164.0 495.5 L1165.0 494.6 L1166.0 494.7 L1167.0 496.5 L1168.0 494.6 L1168.4 493.1 L1169.0 455.0 L1169.6 493.1 L1170.0 493.6 L1171.0 496.6 L1172.0 491.7 L1173.0 495.3 L1174.0 496.1 L1175.0 492.3 L1176.0 491.4 L1177.0 496.9 L1178.0 495.3 L1179.0 496.3 L1180.0 494.9 L1181.0 497.6 L1182.0 495.7 L1183.0 498.5 L1184.0 494.0 L1184.4 504.3 L1185.0 451.6 L1185.6 504.3 L1186.0 505.5 L1187.0 506.9 L1188.0 505.0 L1188.4 504.4 L1189.0 416.9 L1189.6 504.4 L1190.0 506.7 L1191.0 505.9 L1192.0 506.6 L1193.0 504.8 L1194.0 505.7 L1195.0 507.5 L1196.0 503.8 L1197.0 506.3 L1198.0 506.2 L1199.0 506.1 L1200.0 506.9 L1201.0 506.0 L1202.0 504.6 L1203.0 507.0 L1204.0 506.8 L1205.0 506.6 L1205.4 507.0 L1206.0 484.0 L1206.6 507.0 L1207.0 506.8 L1208.0 503.3 L1209.0 507.1 L1210.0 505.7 L1211.0 506.4 L1212.0 506.1 L1213.0 506.5 L1214.0 505.1 L1215.0 505.2 L1216.0 506.0 L1217.0 506.9 L1218.0 505.4 L1219.0 507.8 L1220.0 505.6 L1221.0 506.5 L1222.0 504.9 L1223.0 503.9 L1224.0 505.3 L1225.0 504.3 L1226.0 504.6 L1227.0 508.0 L1228.0 506.2 L1229.0 504.8 L1230.0 506.3 L1231.0 503.9 L1232.0 507.0 L1233.0 505.4 L1234.0 506.5 L1235.0 502.4 L1236.0 504.5 L1237.0 507.2 L1238.0 505.9 L1239.0 504.8 L1240.0 505.8 L1241.0 506.8 L1242.0 506.9 L1243.0 506.4 L1244.0 506.1 L1245.0 505.8 L1246.0 505.8 L1247.0 506.1 L1248.0 506.7 L1249.0 506.2 L1250.0 505.6 L1251.0 506.0 L1252.0 506.3 L1253.0 505.5 L1254.0 505.4 L1255.0 508.5 L1256.0 504.0 L1257.0 506.0 L1258.0 506.9 L1259.0 506.6 L1260.0 505.7 L1260.4 496.0 L1261.0 376.0 L1261.6 496.0 L1262.0 498.4 L1263.0 495.5 L1264.0 497.0 L1265.0 498.0 L1266.0 496.3 L1267.0 494.8 L1268.0 497.9 L1269.0 495.2 L1270.0 497.8 L1271.0 495.7 L1272.0 497.2 L1273.0 497.8 L1274.0 498.6 L1275.0 494.6 L1276.0 494.2 L1277.0 495.2 L1278.0 496.6 L1279.0 498.6 L1280.0 499.0 L1281.0 498.9 L1282.0 495.5 L1283.0 496.4 L1284.0 497.1 L1285.0 495.7 L1286.0 498.2 L1287.0 500.6 L1288.0 498.1 L1289.0 498.0 L1290.0 496.7 L1291.0 497.9 L1292.0 496.9 L1293.0 497.8 L1294.0 496.7 L1295.0 496.1 L1296.0 499.7 L1297.0 497.9 L1298.0 494.3 L1299.0 498.8 L1300.0 495.1 L1301.0 496.2 L1302.0 498.4 L1303.0 497.4 L1304.0 494.1 L1305.0 496.3 L1306.0 496.4 L1307.0 506.1 L1308.0 505.4 L1309.0 506.9 L1310.0 505.9 L1311.0 505.1 L1312.0 505.8 L1313.0 506.5 L1314.0 506.8 L1315.0 506.2 L1316.0 506.3 L1317.0 507.2 L1318.0 505.8 L1319.0 505.2 L1320.0 506.1 L1321.0 506.1 L1322.0 505.3 L1323.0 506.4 L1324.0 505.0 L1325.0 504.7 L1326.0 506.0 L1327.0 506.2 L1328.0 507.5 L1329.0 504.2 L1330.0 506.0 L1331.0 506.2 L1332.0 506.3 L1333.0 505.9 L1334.0 503.0 L1335.0 504.9 L1336.0 506.3 L1337.0 504.8 L1338.0 506.1 L1339.0 504.6 L1340.0 505.4 L1341.0 506.4 L1342.0 505.7 L1343.0 505.9 L1344.0 506.8 L1345.0 508.0 L1346.0 505.2 L1347.0 504.5 L1348.0 504.9 L1349.0 507.1 L1350.0 506.2 L1351.0 506.5 L1352.0 504.7 L1353.0 507.3 L1353.4 506.5 L1354.0 462.8 L1354.6 506.5 L1355.0 504.8 L1356.0 506.0" fill="none" stroke="#8ab8ff" stroke-width="1" stroke-linejoin="miter" stroke-miterlimit="2"/>
<text x="722.4" y="548.3" font-size="9.6" fill="#6e9fff" letter-spacing="0.35" stroke="#6e9fff" stroke-width="0.25">Name</text>
<text x="1258.8" y="548.3" font-size="10.5" fill="#6e9fff" text-anchor="end" stroke="#6e9fff" stroke-width="0.25">Last *</text>
<text x="1309.2" y="548.3" font-size="10.5" fill="#6e9fff" text-anchor="end" stroke="#6e9fff" stroke-width="0.25">Max</text>
<text x="1357" y="548.3" font-size="10.5" fill="#6e9fff" text-anchor="end" stroke="#6e9fff" stroke-width="0.25">Min</text>
<line x1="698" y1="553.0" x2="1364" y2="553.0" stroke="rgba(204,204,220,0.10)" stroke-width="1"/>
<line x1="698" y1="573.0" x2="1364" y2="573.0" stroke="rgba(204,204,220,0.10)" stroke-width="1"/>
<line x1="698" y1="592.2" x2="1364" y2="592.2" stroke="rgba(204,204,220,0.10)" stroke-width="1"/>
<line x1="698" y1="611.1" x2="1364" y2="611.1" stroke="rgba(204,204,220,0.10)" stroke-width="1"/>
<rect x="705" y="561.4499999999999" width="11.4" height="3.5" rx="1.75" fill="#73bf69"/>
<text x="722.4" y="566.9" font-size="9.8" fill="#ccccdc" letter-spacing="0.45" >exportertest-0</text>
<text x="1258.8" y="566.9" font-size="10" fill="#ccccdc" text-anchor="end" stroke="#ccccdc" stroke-width="0.15">144 µs</text>
<text x="1309.2" y="566.9" font-size="10" fill="#ccccdc" text-anchor="end" stroke="#ccccdc" stroke-width="0.15">451 µs</text>
<text x="1357" y="566.9" font-size="10" fill="#ccccdc" text-anchor="end" stroke="#ccccdc" stroke-width="0.15">0 s</text>
<rect x="705" y="580.25" width="11.4" height="3.5" rx="1.75" fill="#e0b400"/>
<text x="722.4" y="585.7" font-size="9.8" fill="#ccccdc" letter-spacing="0.45" >exportertest-1</text>
<text x="1258.8" y="585.7" font-size="10" fill="#ccccdc" text-anchor="end" stroke="#ccccdc" stroke-width="0.15">51.9 µs</text>
<text x="1309.2" y="585.7" font-size="10" fill="#ccccdc" text-anchor="end" stroke="#ccccdc" stroke-width="0.15">592 µs</text>
<text x="1357" y="585.7" font-size="10" fill="#ccccdc" text-anchor="end" stroke="#ccccdc" stroke-width="0.15">47.1 µs</text>
<rect x="705" y="599.15" width="11.4" height="3.5" rx="1.75" fill="#8ab8ff"/>
<text x="722.4" y="604.6" font-size="9.8" fill="#ccccdc" letter-spacing="0.45" >exportertest-2</text>
<text x="1258.8" y="604.6" font-size="10" fill="#ccccdc" text-anchor="end" stroke="#ccccdc" stroke-width="0.15">62.0 µs</text>
<text x="1309.2" y="604.6" font-size="10" fill="#ccccdc" text-anchor="end" stroke="#ccccdc" stroke-width="0.15">777 µs</text>
<text x="1357" y="604.6" font-size="10" fill="#ccccdc" text-anchor="end" stroke="#ccccdc" stroke-width="0.15">0 s</text>
<line x1="52" y1="672" x2="669.2" y2="672" stroke="rgba(240,250,255,0.09)" stroke-width="1"/>
<line x1="52" y1="700.8" x2="669.2" y2="700.8" stroke="rgba(240,250,255,0.09)" stroke-width="1"/>
<line x1="52" y1="730.7" x2="669.2" y2="730.7" stroke="rgba(240,250,255,0.09)" stroke-width="1"/>
<line x1="52" y1="760.5" x2="669.2" y2="760.5" stroke="rgba(240,250,255,0.09)" stroke-width="1"/>
<line x1="52" y1="790.4" x2="669.2" y2="790.4" stroke="rgba(240,250,255,0.09)" stroke-width="1"/>
<text x="74.5" y="806" font-size="10" fill="#b4b4c0" text-anchor="middle" letter-spacing="0.42" >04:30</text>
<text x="125.9" y="806" font-size="10" fill="#b4b4c0" text-anchor="middle" letter-spacing="0.42" >05:00</text>
<text x="177.4" y="806" font-size="10" fill="#b4b4c0" text-anchor="middle" letter-spacing="0.42" >05:30</text>
<text x="228.8" y="806" font-size="10" fill="#b4b4c0" text-anchor="middle" letter-spacing="0.42" >06:00</text>
<text x="280.2" y="806" font-size="10" fill="#b4b4c0" text-anchor="middle" letter-spacing="0.42" >06:30</text>
<text x="331.7" y="806" font-size="10" fill="#b4b4c0" text-anchor="middle" letter-spacing="0.42" >07:00</text>
<text x="383.1" y="806" font-size="10" fill="#b4b4c0" text-anchor="middle" letter-spacing="0.42" >07:30</text>
<text x="434.5" y="806" font-size="10" fill="#b4b4c0" text-anchor="middle" letter-spacing="0.42" >08:00</text>
<text x="486.0" y="806" font-size="10" fill="#b4b4c0" text-anchor="middle" letter-spacing="0.42" >08:30</text>
<text x="537.4" y="806" font-size="10" fill="#b4b4c0" text-anchor="middle" letter-spacing="0.42" >09:00</text>
<text x="588.8" y="806" font-size="10" fill="#b4b4c0" text-anchor="middle" letter-spacing="0.42" >09:30</text>
<text x="640.3" y="806" font-size="10" fill="#b4b4c0" text-anchor="middle" letter-spacing="0.42" >10:00</text>
<text x="47.82" y="675.7" font-size="10.0" fill="#b4b4c0" text-anchor="end" letter-spacing="0.32" >1 ms</text>
<text x="47.82" y="704.5" font-size="10.0" fill="#b4b4c0" text-anchor="end" letter-spacing="0.32" >750 µs</text>
<text x="47.82" y="734.4" font-size="10.0" fill="#b4b4c0" text-anchor="end" letter-spacing="0.32" >500 µs</text>
<text x="47.82" y="764.2" font-size="10.0" fill="#b4b4c0" text-anchor="end" letter-spacing="0.32" >250 µs</text>
<text x="47.82" y="794.1" font-size="10.0" fill="#b4b4c0" text-anchor="end" letter-spacing="0.32" >0 s</text>
<path d="M52.0 748.6 L55.4 747.0 L58.8 743.4 L62.2 743.9 L65.6 744.6 L69.0 752.6 L72.4 744.5 L75.8 751.1 L79.2 748.3 L82.6 750.0 L86.0 747.1 L89.4 756.3 L92.8 754.8 L96.2 755.2 L99.6 751.1 L103.0 736.8 L106.4 736.0 L109.8 754.7 L113.2 759.3 L116.6 759.1 L120.0 754.3 L123.4 752.5 L126.8 744.5 L130.2 749.6 L133.6 755.5 L137.0 750.2 L140.4 741.0 L143.8 740.1 L147.2 748.7 L150.6 736.2 L154.0 742.5 L157.4 745.7 L160.8 737.8 L164.2 737.7 L167.6 748.1 L171.0 752.3 L174.4 759.6 L177.8 764.8 L181.2 758.4 L184.6 756.4 L188.0 749.9 L191.4 737.4 L194.8 738.2 L198.2 749.1 L201.6 753.2 L205.0 749.7 L208.4 750.3 L211.8 752.7 L215.2 752.6 L218.6 751.0 L222.0 747.7 L225.4 754.3 L228.8 759.7 L232.2 750.4 L235.6 754.7 L239.0 751.9 L242.4 746.4 L245.8 746.4 L249.2 745.8 L252.6 744.6 L256.0 748.9 L259.4 757.4 L262.8 756.7 L266.2 757.6 L269.6 752.1 L273.0 757.9 L276.4 759.3 L279.8 754.9 L283.2 744.0 L286.6 751.0 L290.0 757.5 L293.4 747.6 L296.8 744.7 L300.2 747.3 L303.6 754.1 L307.0 750.7 L310.4 751.0 L313.8 749.0 L317.2 742.8 L320.6 746.8 L324.0 742.1 L327.4 742.1 L330.8 752.8 L334.2 754.6 L337.6 756.4 L341.0 763.3 L344.4 756.0 L347.8 755.4 L351.2 754.3 L354.6 749.5 L358.0 744.1 L361.4 750.9 L364.8 748.4 L368.2 750.5 L371.6 754.1 L375.0 752.5 L378.4 748.8 L381.8 744.0 L385.2 745.1 L388.6 742.3 L392.0 751.3 L395.4 748.2 L398.8 744.9 L402.2 750.7 L405.6 757.3 L409.0 753.8 L412.4 747.2 L415.8 748.3 L419.2 752.2 L422.6 750.6 L426.0 734.2 L429.4 704.3 L432.8 678.4 L436.2 724.5 L439.6 748.2 L443.0 747.4 L446.4 744.2 L449.8 750.6 L453.2 754.6 L456.6 761.2 L460.0 757.6 L463.4 752.6 L466.8 754.7 L470.2 758.2 L473.6 745.3 L477.0 746.0 L480.4 746.7 L483.8 753.3 L487.2 750.1 L490.6 752.3 L494.0 742.1 L497.4 759.2 L500.8 762.0 L504.2 754.8 L507.6 751.6 L511.0 752.4 L514.4 743.1 L517.8 763.8 L521.2 755.5 L524.6 753.7 L528.0 753.9 L531.4 745.6 L534.8 748.9 L538.2 749.0 L541.6 741.7 L545.0 748.9 L548.4 752.2 L551.8 751.1 L555.2 753.5 L558.6 759.2 L562.0 758.5 L565.4 750.9 L568.8 759.2 L572.2 756.5 L575.6 753.1 L579.0 761.6 L582.4 753.4 L585.8 748.2 L589.2 755.7 L592.6 760.3 L596.0 750.4 L599.4 758.9 L602.8 755.2 L606.2 754.4 L609.6 755.3 L613.0 750.8 L616.4 757.5 L619.8 761.1 L623.2 762.3 L626.6 764.5 L630.0 767.5 L633.4 756.7 L636.8 751.0 L640.2 742.5 L643.6 746.4 L647.0 750.4 L650.4 754.0 L653.8 761.5 L657.2 765.0 L660.6 758.7 L664.0 758.2 L669.2 763.5 L669.2 790.4 L52.0 790.4 Z" fill="#4462a0"/>
<path d="M52.0 766.0 L55.4 760.2 L58.8 764.4 L62.2 755.1 L65.6 760.5 L69.0 761.1 L72.4 756.1 L75.8 761.1 L79.2 766.0 L82.6 762.9 L86.0 765.5 L89.4 774.5 L92.8 762.2 L96.2 765.9 L99.6 766.2 L103.0 751.3 L106.4 761.8 L109.8 775.0 L113.2 765.8 L116.6 775.8 L120.0 770.2 L123.4 765.8 L126.8 767.9 L130.2 771.7 L133.6 765.6 L137.0 769.0 L140.4 758.9 L143.8 757.6 L147.2 761.8 L150.6 754.4 L154.0 757.6 L157.4 769.0 L160.8 756.5 L164.2 750.3 L167.6 759.0 L171.0 765.9 L174.4 774.9 L177.8 775.6 L181.2 771.4 L184.6 769.9 L188.0 757.1 L191.4 763.1 L194.8 758.4 L198.2 764.2 L201.6 766.9 L205.0 763.4 L208.4 757.7 L211.8 773.3 L215.2 765.2 L218.6 765.2 L222.0 767.0 L225.4 767.1 L228.8 773.8 L232.2 774.5 L235.6 764.5 L239.0 763.0 L242.4 765.3 L245.8 760.1 L249.2 765.4 L252.6 762.6 L256.0 768.6 L259.4 770.5 L262.8 760.7 L266.2 768.9 L269.6 767.6 L273.0 767.2 L276.4 765.8 L279.8 764.4 L283.2 758.8 L286.6 776.2 L290.0 772.2 L293.4 765.5 L296.8 764.1 L300.2 761.7 L303.6 764.0 L307.0 766.1 L310.4 762.7 L313.8 761.3 L317.2 756.0 L320.6 765.8 L324.0 762.1 L327.4 757.1 L330.8 767.2 L334.2 766.9 L337.6 771.7 L341.0 775.9 L344.4 770.4 L347.8 773.1 L351.2 764.3 L354.6 759.6 L358.0 760.0 L361.4 767.9 L364.8 763.8 L368.2 768.6 L371.6 771.2 L375.0 762.9 L378.4 758.9 L381.8 763.7 L385.2 759.4 L388.6 763.4 L392.0 765.2 L395.4 764.2 L398.8 756.1 L402.2 764.2 L405.6 767.4 L409.0 764.1 L412.4 762.7 L415.8 770.1 L419.2 770.7 L422.6 768.3 L426.0 757.7 L429.4 756.0 L432.8 726.0 L436.2 756.0 L439.6 762.8 L443.0 764.5 L446.4 757.8 L449.8 762.3 L453.2 761.8 L456.6 776.1 L460.0 769.7 L463.4 769.1 L466.8 766.2 L470.2 762.8 L473.6 761.7 L477.0 761.0 L480.4 763.8 L483.8 774.8 L487.2 771.6 L490.6 765.2 L494.0 757.4 L497.4 765.1 L500.8 768.4 L504.2 767.4 L507.6 763.3 L511.0 762.5 L514.4 757.4 L517.8 776.8 L521.2 767.1 L524.6 769.6 L528.0 771.6 L531.4 757.2 L534.8 765.8 L538.2 758.6 L541.6 754.6 L545.0 758.0 L548.4 764.1 L551.8 769.0 L555.2 769.1 L558.6 766.8 L562.0 768.5 L565.4 761.7 L568.8 764.0 L572.2 764.3 L575.6 770.5 L579.0 770.0 L582.4 772.1 L585.8 757.8 L589.2 766.4 L592.6 773.1 L596.0 765.5 L599.4 768.4 L602.8 765.1 L606.2 767.3 L609.6 769.7 L613.0 760.9 L616.4 765.4 L619.8 775.4 L623.2 778.4 L626.6 775.4 L630.0 774.3 L633.4 771.1 L636.8 767.0 L640.2 759.2 L643.6 765.7 L647.0 761.7 L650.4 764.1 L653.8 766.9 L657.2 774.4 L660.6 772.1 L664.0 768.7 L669.2 771.4 L669.2 790.4 L52.0 790.4 Z" fill="#48707e"/>
<path d="M52.0 776.8 L55.4 775.5 L58.8 776.9 L62.2 773.5 L65.6 778.2 L69.0 771.7 L72.4 773.4 L75.8 775.1 L79.2 780.2 L82.6 777.1 L86.0 780.2 L89.4 782.5 L92.8 777.6 L96.2 774.7 L99.6 777.2 L103.0 772.2 L106.4 776.5 L109.8 786.2 L113.2 775.2 L116.6 784.8 L120.0 781.6 L123.4 779.1 L126.8 782.6 L130.2 783.1 L133.6 779.8 L137.0 781.6 L140.4 776.5 L143.8 773.1 L147.2 777.6 L150.6 774.4 L154.0 775.0 L157.4 782.4 L160.8 776.1 L164.2 768.0 L167.6 774.3 L171.0 779.8 L174.4 786.3 L177.8 784.0 L181.2 779.4 L184.6 783.4 L188.0 773.1 L191.4 777.3 L194.8 775.9 L198.2 778.6 L201.6 778.0 L205.0 778.9 L208.4 770.3 L211.8 783.9 L215.2 777.3 L218.6 777.1 L222.0 781.9 L225.4 781.2 L228.8 784.5 L232.2 781.8 L235.6 779.6 L239.0 775.2 L242.4 779.8 L245.8 776.1 L249.2 778.1 L252.6 781.8 L256.0 779.6 L259.4 781.3 L262.8 773.6 L266.2 780.4 L269.6 780.0 L273.0 779.6 L276.4 778.3 L279.8 779.8 L283.2 774.9 L286.6 786.4 L290.0 783.5 L293.4 780.8 L296.8 777.4 L300.2 777.8 L303.6 778.8 L307.0 779.1 L310.4 778.7 L313.8 779.5 L317.2 774.7 L320.6 778.4 L324.0 780.9 L327.4 773.6 L330.8 780.6 L334.2 777.0 L337.6 780.9 L341.0 783.6 L344.4 781.8 L347.8 785.4 L351.2 778.0 L354.6 772.0 L358.0 778.5 L361.4 778.3 L364.8 779.1 L368.2 782.4 L371.6 783.3 L375.0 776.8 L378.4 776.1 L381.8 779.0 L385.2 774.6 L388.6 778.1 L392.0 781.2 L395.4 779.9 L398.8 773.1 L402.2 777.3 L405.6 782.3 L409.0 776.6 L412.4 775.7 L415.8 779.2 L419.2 784.9 L422.6 782.1 L426.0 776.9 L429.4 772.0 L432.8 755.0 L436.2 772.0 L439.6 780.7 L443.0 780.0 L446.4 769.4 L449.8 776.4 L453.2 774.1 L456.6 781.0 L460.0 780.7 L463.4 780.0 L466.8 778.0 L470.2 773.3 L473.6 777.2 L477.0 777.6 L480.4 776.7 L483.8 783.4 L487.2 779.7 L490.6 780.2 L494.0 775.0 L497.4 778.9 L500.8 778.5 L504.2 779.8 L507.6 776.8 L511.0 778.6 L514.4 778.4 L517.8 786.4 L521.2 778.6 L524.6 780.7 L528.0 779.8 L531.4 775.9 L534.8 779.1 L538.2 776.6 L541.6 774.4 L545.0 775.4 L548.4 778.5 L551.8 783.1 L555.2 781.3 L558.6 778.0 L562.0 780.0 L565.4 775.5 L568.8 775.1 L572.2 777.5 L575.6 779.2 L579.0 779.6 L582.4 781.9 L585.8 772.8 L589.2 779.4 L592.6 785.0 L596.0 775.7 L599.4 781.0 L602.8 776.3 L606.2 780.0 L609.6 780.2 L613.0 776.8 L616.4 775.4 L619.8 785.1 L623.2 783.2 L626.6 782.9 L630.0 782.7 L633.4 784.9 L636.8 779.4 L640.2 775.0 L643.6 778.2 L647.0 777.1 L650.4 781.9 L653.8 779.4 L657.2 781.5 L660.6 781.8 L664.0 780.5 L669.2 780.6 L669.2 790.4 L52.0 790.4 Z" fill="#8a6a1a"/>
<line x1="74.3" y1="664.8" x2="74.3" y2="790.4" stroke="rgba(240,250,255,0.09)" stroke-width="1"/>
<line x1="125.7" y1="664.8" x2="125.7" y2="790.4" stroke="rgba(240,250,255,0.09)" stroke-width="1"/>
<line x1="177.2" y1="664.8" x2="177.2" y2="790.4" stroke="rgba(240,250,255,0.09)" stroke-width="1"/>
<line x1="228.6" y1="664.8" x2="228.6" y2="790.4" stroke="rgba(240,250,255,0.09)" stroke-width="1"/>
<line x1="280.0" y1="664.8" x2="280.0" y2="790.4" stroke="rgba(240,250,255,0.09)" stroke-width="1"/>
<line x1="331.5" y1="664.8" x2="331.5" y2="790.4" stroke="rgba(240,250,255,0.09)" stroke-width="1"/>
<line x1="382.9" y1="664.8" x2="382.9" y2="790.4" stroke="rgba(240,250,255,0.09)" stroke-width="1"/>
<line x1="434.3" y1="664.8" x2="434.3" y2="790.4" stroke="rgba(240,250,255,0.09)" stroke-width="1"/>
<line x1="485.8" y1="664.8" x2="485.8" y2="790.4" stroke="rgba(240,250,255,0.09)" stroke-width="1"/>
<line x1="537.2" y1="664.8" x2="537.2" y2="790.4" stroke="rgba(240,250,255,0.09)" stroke-width="1"/>
<line x1="588.6" y1="664.8" x2="588.6" y2="790.4" stroke="rgba(240,250,255,0.09)" stroke-width="1"/>
<line x1="640.1" y1="664.8" x2="640.1" y2="790.4" stroke="rgba(240,250,255,0.09)" stroke-width="1"/>
<text x="37.4" y="821.3" font-size="9.6" fill="#6e9fff" letter-spacing="0.35" stroke="#6e9fff" stroke-width="0.25">Name</text>
<text x="516.7" y="821.3" font-size="10.5" fill="#6e9fff" text-anchor="end" stroke="#6e9fff" stroke-width="0.25">Last *</text>
<text x="573.4" y="821.3" font-size="10.5" fill="#6e9fff" text-anchor="end" stroke="#6e9fff" stroke-width="0.25">Mean</text>
<text x="621.3" y="821.3" font-size="10.5" fill="#6e9fff" text-anchor="end" stroke="#6e9fff" stroke-width="0.25">Min</text>
<text x="671.3" y="821.3" font-size="10.5" fill="#6e9fff" text-anchor="end" stroke="#6e9fff" stroke-width="0.25">Max</text>
<line x1="13" y1="827.1" x2="678" y2="827.1" stroke="rgba(204,204,220,0.10)" stroke-width="1"/>
<line x1="13" y1="846.1" x2="678" y2="846.1" stroke="rgba(204,204,220,0.10)" stroke-width="1"/>
<line x1="13" y1="865.2" x2="678" y2="865.2" stroke="rgba(204,204,220,0.10)" stroke-width="1"/>
<line x1="13" y1="885.2" x2="678" y2="885.2" stroke="rgba(204,204,220,0.10)" stroke-width="1"/>
<rect x="20" y="835.3499999999999" width="11.4" height="3.5" rx="1.75" fill="#e0b400"/>
<text x="37.4" y="840.8" font-size="9.8" fill="#ccccdc" letter-spacing="0.45" >exportertest-0</text>
<text x="516.7" y="840.8" font-size="10" fill="#ccccdc" text-anchor="end" stroke="#ccccdc" stroke-width="0.15">54.4 µs</text>
<text x="573.4" y="840.8" font-size="10" fill="#ccccdc" text-anchor="end" stroke="#ccccdc" stroke-width="0.15">108 µs</text>
<text x="621.3" y="840.8" font-size="10" fill="#ccccdc" text-anchor="end" stroke="#ccccdc" stroke-width="0.15">36.3 µs</text>
<text x="671.3" y="840.8" font-size="10" fill="#ccccdc" text-anchor="end" stroke="#ccccdc" stroke-width="0.15">316 µs</text>
<rect x="20" y="854.15" width="11.4" height="3.5" rx="1.75" fill="#6ccadb"/>
<text x="37.4" y="859.6" font-size="9.8" fill="#ccccdc" letter-spacing="0.45" >exportertest-1</text>
<text x="516.7" y="859.6" font-size="10" fill="#ccccdc" text-anchor="end" stroke="#ccccdc" stroke-width="0.15">92.0 µs</text>
<text x="573.4" y="859.6" font-size="10" fill="#ccccdc" text-anchor="end" stroke="#ccccdc" stroke-width="0.15">112 µs</text>
<text x="621.3" y="859.6" font-size="10" fill="#ccccdc" text-anchor="end" stroke="#ccccdc" stroke-width="0.15">38.8 µs</text>
<text x="671.3" y="859.6" font-size="10" fill="#ccccdc" text-anchor="end" stroke="#ccccdc" stroke-width="0.15">252 µs</text>
<rect x="20" y="872.9499999999999" width="11.4" height="3.5" rx="1.75" fill="#5794f2"/>
<text x="37.4" y="878.4" font-size="9.8" fill="#ccccdc" letter-spacing="0.45" >exportertest-2</text>
<text x="516.7" y="878.4" font-size="10" fill="#ccccdc" text-anchor="end" stroke="#ccccdc" stroke-width="0.15">82.2 µs</text>
<text x="573.4" y="878.4" font-size="10" fill="#ccccdc" text-anchor="end" stroke="#ccccdc" stroke-width="0.15">111 µs</text>
<text x="621.3" y="878.4" font-size="10" fill="#ccccdc" text-anchor="end" stroke="#ccccdc" stroke-width="0.15">71.8 µs</text>
<text x="671.3" y="878.4" font-size="10" fill="#ccccdc" text-anchor="end" stroke="#ccccdc" stroke-width="0.15">390 µs</text>
<text x="762.8" y="806" font-size="10" fill="#b4b4c0" text-anchor="middle" letter-spacing="0.42" >04:30</text>
<text x="814.1" y="806" font-size="10" fill="#b4b4c0" text-anchor="middle" letter-spacing="0.42" >05:00</text>
<text x="865.5" y="806" font-size="10" fill="#b4b4c0" text-anchor="middle" letter-spacing="0.42" >05:30</text>
<text x="916.8" y="806" font-size="10" fill="#b4b4c0" text-anchor="middle" letter-spacing="0.42" >06:00</text>
<text x="968.2" y="806" font-size="10" fill="#b4b4c0" text-anchor="middle" letter-spacing="0.42" >06:30</text>
<text x="1019.5" y="806" font-size="10" fill="#b4b4c0" text-anchor="middle" letter-spacing="0.42" >07:00</text>
<text x="1070.9" y="806" font-size="10" fill="#b4b4c0" text-anchor="middle" letter-spacing="0.42" >07:30</text>
<text x="1122.2" y="806" font-size="10" fill="#b4b4c0" text-anchor="middle" letter-spacing="0.42" >08:00</text>
<text x="1173.6" y="806" font-size="10" fill="#b4b4c0" text-anchor="middle" letter-spacing="0.42" >08:30</text>
<text x="1224.9" y="806" font-size="10" fill="#b4b4c0" text-anchor="middle" letter-spacing="0.42" >09:00</text>
<text x="1276.3" y="806" font-size="10" fill="#b4b4c0" text-anchor="middle" letter-spacing="0.42" >09:30</text>
<text x="1327.6" y="806" font-size="10" fill="#b4b4c0" text-anchor="middle" letter-spacing="0.42" >10:00</text>
<text x="736.5" y="692.2" font-size="9.5" fill="#b4b4c0" text-anchor="end" letter-spacing="0.3" >100 MB</text>
<text x="736.5" y="719.3" font-size="9.5" fill="#b4b4c0" text-anchor="end" letter-spacing="0.3" >75 MB</text>
<text x="736.5" y="746.2" font-size="9.5" fill="#b4b4c0" text-anchor="end" letter-spacing="0.3" >50 MB</text>
<text x="736.5" y="773.1" font-size="9.5" fill="#b4b4c0" text-anchor="end" letter-spacing="0.3" >25 MB</text>
<line x1="740.3" y1="688.5" x2="1356.5" y2="688.5" stroke="rgba(240,250,255,0.09)" stroke-width="1"/>
<line x1="740.3" y1="715.6" x2="1356.5" y2="715.6" stroke="rgba(240,250,255,0.09)" stroke-width="1"/>
<line x1="740.3" y1="742.5" x2="1356.5" y2="742.5" stroke="rgba(240,250,255,0.09)" stroke-width="1"/>
<line x1="740.3" y1="769.4" x2="1356.5" y2="769.4" stroke="rgba(240,250,255,0.09)" stroke-width="1"/>
<line x1="762.6" y1="664.8" x2="762.6" y2="791.2" stroke="rgba(240,250,255,0.09)" stroke-width="1"/>
<line x1="813.9" y1="664.8" x2="813.9" y2="791.2" stroke="rgba(240,250,255,0.09)" stroke-width="1"/>
<line x1="865.3" y1="664.8" x2="865.3" y2="791.2" stroke="rgba(240,250,255,0.09)" stroke-width="1"/>
<line x1="916.6" y1="664.8" x2="916.6" y2="791.2" stroke="rgba(240,250,255,0.09)" stroke-width="1"/>
<line x1="968.0" y1="664.8" x2="968.0" y2="791.2" stroke="rgba(240,250,255,0.09)" stroke-width="1"/>
<line x1="1019.3" y1="664.8" x2="1019.3" y2="791.2" stroke="rgba(240,250,255,0.09)" stroke-width="1"/>
<line x1="1070.7" y1="664.8" x2="1070.7" y2="791.2" stroke="rgba(240,250,255,0.09)" stroke-width="1"/>
<line x1="1122.0" y1="664.8" x2="1122.0" y2="791.2" stroke="rgba(240,250,255,0.09)" stroke-width="1"/>
<line x1="1173.4" y1="664.8" x2="1173.4" y2="791.2" stroke="rgba(240,250,255,0.09)" stroke-width="1"/>
<line x1="1224.7" y1="664.8" x2="1224.7" y2="791.2" stroke="rgba(240,250,255,0.09)" stroke-width="1"/>
<line x1="1276.1" y1="664.8" x2="1276.1" y2="791.2" stroke="rgba(240,250,255,0.09)" stroke-width="1"/>
<line x1="1327.4" y1="664.8" x2="1327.4" y2="791.2" stroke="rgba(240,250,255,0.09)" stroke-width="1"/>
<path d="M740.3 759.5 L741.3 758.8 L742.3 759.5 L743.3 760.5 L744.3 760.7 L745.3 760.4 L746.3 760.6 L747.3 762.0 L748.3 759.8 L749.3 761.7 L750.3 760.7 L751.3 760.1 L752.3 759.4 L753.3 758.6 L754.3 758.5 L755.3 759.2 L756.3 759.7 L757.3 760.1 L758.3 759.8 L759.3 760.8 L760.3 759.2 L761.3 759.8 L762.3 760.1 L763.3 760.9 L764.3 762.0 L765.3 758.8 L766.3 758.8 L767.3 758.7 L768.3 757.8 L769.3 755.8 L770.3 757.6 L771.3 759.3 L772.3 760.1 L773.3 760.1 L774.3 759.5 L775.3 759.7 L776.3 759.7 L777.3 755.9 L778.3 757.6 L779.3 759.3 L780.3 763.0 L781.3 763.1 L782.3 766.1 L783.3 764.3 L784.3 763.2 L785.3 763.2 L786.3 763.3 L787.3 763.8 L788.3 760.0 L789.3 761.3 L790.3 760.8 L791.3 759.8 L792.3 761.3 L793.3 761.5 L794.3 760.2 L795.3 761.1 L796.3 761.5 L797.3 761.6 L798.3 760.1 L799.3 759.3 L800.3 759.0 L801.3 760.7 L802.3 757.9 L803.3 759.2 L804.3 760.1 L805.3 762.1 L806.3 761.3 L807.3 760.0 L808.3 758.5 L809.3 758.3 L810.3 759.6 L811.3 758.1 L812.3 759.3 L813.3 759.5 L814.3 760.9 L815.3 761.0 L816.3 761.1 L817.3 760.1 L818.3 759.4 L819.3 759.4 L820.3 758.4 L821.3 760.0 L822.3 759.6 L823.3 759.3 L824.3 759.3 L825.3 761.4 L826.3 762.4 L827.3 764.2 L828.3 763.3 L829.3 762.6 L830.3 763.1 L831.3 762.4 L832.3 763.7 L833.3 763.3 L834.3 761.7 L835.3 760.4 L836.3 758.2 L837.3 757.4 L838.3 758.0 L839.3 757.4 L840.3 756.6 L841.3 756.4 L842.3 757.2 L843.3 757.1 L844.3 762.1 L845.3 763.5 L846.3 758.6 L847.3 757.6 L848.3 759.4 L849.3 760.3 L850.3 762.2 L851.3 761.5 L852.3 761.3 L853.3 761.3 L854.3 761.5 L855.3 761.8 L856.3 761.3 L857.3 763.9 L858.3 764.3 L859.3 763.0 L860.3 761.0 L861.3 760.9 L862.3 760.7 L863.3 759.0 L864.3 761.1 L865.3 762.6 L866.3 762.7 L867.3 762.1 L868.3 766.5 L869.3 763.8 L870.3 761.6 L871.3 760.3 L872.3 756.8 L873.3 756.2 L874.3 755.5 L875.3 755.5 L876.3 755.5 L877.3 754.2 L878.3 755.6 L879.3 757.1 L880.3 757.5 L881.3 758.3 L882.3 759.2 L883.3 760.4 L884.3 759.9 L885.3 759.4 L886.3 757.9 L887.3 757.4 L888.3 760.6 L889.3 761.2 L890.3 760.5 L891.3 761.6 L892.3 760.3 L893.3 759.8 L894.3 762.8 L895.3 761.1 L896.3 760.8 L897.3 760.5 L898.3 760.2 L899.3 759.0 L900.3 760.6 L901.3 759.3 L902.3 759.7 L903.3 760.1 L904.3 759.1 L905.3 759.2 L906.3 756.6 L907.3 757.2 L908.3 755.5 L909.3 755.8 L910.3 755.8 L911.3 758.3 L912.3 758.4 L913.3 759.5 L914.3 760.5 L915.3 764.0 L916.3 763.3 L917.3 763.3 L918.3 758.6 L919.3 760.4 L920.3 758.9 L921.3 760.3 L922.3 758.4 L923.3 758.5 L924.3 758.3 L925.3 758.4 L926.3 758.6 L927.3 759.5 L928.3 761.8 L929.3 760.2 L930.3 758.2 L931.3 758.3 L932.3 758.7 L933.3 759.9 L934.3 763.7 L935.3 762.1 L936.3 763.4 L937.3 763.8 L938.3 765.2 L939.3 760.9 L940.3 761.0 L941.3 761.2 L942.3 759.5 L943.3 764.2 L944.3 764.7 L945.3 765.0 L946.3 765.6 L947.3 764.4 L948.3 763.7 L949.3 762.1 L950.3 762.6 L951.3 761.4 L952.3 761.9 L953.3 759.9 L954.3 758.5 L955.3 762.1 L956.3 761.1 L957.3 763.5 L958.3 762.1 L959.3 757.9 L960.3 758.1 L961.3 757.8 L962.3 760.0 L963.3 759.3 L964.3 761.0 L965.3 758.7 L966.3 757.8 L967.3 756.4 L968.3 754.9 L969.3 756.5 L970.3 755.1 L971.3 757.2 L972.3 760.2 L973.3 760.3 L974.3 764.5 L975.3 765.6 L976.3 764.0 L977.3 763.9 L978.3 765.1 L979.3 763.5 L980.3 764.5 L981.3 765.4 L982.3 768.5 L983.3 766.2 L984.3 766.3 L985.3 761.2 L986.3 761.3 L987.3 762.3 L988.3 761.8 L989.3 761.6 L990.3 760.2 L991.3 759.6 L992.3 763.0 L993.3 764.4 L994.3 767.3 L995.3 764.9 L996.3 763.5 L997.3 758.5 L998.3 763.0 L999.3 762.5 L1000.3 761.9 L1001.3 763.1 L1002.3 762.2 L1003.3 762.1 L1004.3 757.2 L1005.3 756.6 L1006.3 755.7 L1007.3 756.0 L1008.3 755.8 L1009.3 756.6 L1010.3 757.4 L1011.3 757.1 L1012.3 759.3 L1013.3 759.1 L1014.3 759.4 L1015.3 757.8 L1016.3 760.0 L1017.3 758.6 L1018.3 758.9 L1019.3 758.8 L1020.3 757.5 L1021.3 758.6 L1022.3 759.1 L1023.3 759.1 L1024.3 758.7 L1025.3 759.5 L1026.3 759.8 L1027.3 759.8 L1028.3 756.3 L1029.3 756.4 L1030.3 758.7 L1031.3 759.2 L1032.3 759.3 L1033.3 758.1 L1034.3 758.3 L1035.3 758.5 L1036.3 758.7 L1037.3 758.9 L1038.3 758.6 L1039.3 758.0 L1040.3 757.7 L1041.3 757.3 L1042.3 758.8 L1043.3 759.0 L1044.3 756.9 L1045.3 758.3 L1046.3 759.1 L1047.3 759.4 L1048.3 760.4 L1049.3 760.9 L1050.3 761.5 L1051.3 761.4 L1052.3 760.0 L1053.3 758.5 L1054.3 756.8 L1055.3 757.0 L1056.3 755.8 L1057.3 755.2 L1058.3 755.5 L1059.3 757.6 L1060.3 758.6 L1061.3 759.5 L1062.3 760.2 L1063.3 759.2 L1064.3 760.1 L1065.3 758.7 L1066.3 759.4 L1067.3 759.3 L1068.3 758.6 L1069.3 758.7 L1070.3 760.8 L1071.3 761.0 L1072.3 757.4 L1073.3 757.5 L1074.3 758.7 L1075.3 759.9 L1076.3 760.0 L1077.3 760.4 L1078.3 759.3 L1079.3 759.7 L1080.3 761.3 L1081.3 759.4 L1082.3 759.7 L1083.3 761.2 L1084.3 759.2 L1085.3 760.8 L1086.3 760.2 L1087.3 759.2 L1088.3 757.6 L1089.3 757.2 L1090.3 757.6 L1091.3 756.9 L1092.3 756.6 L1093.3 757.3 L1094.3 757.0 L1095.3 758.0 L1096.3 758.8 L1097.3 759.1 L1098.3 761.1 L1099.3 760.9 L1100.3 760.0 L1101.3 761.9 L1102.3 761.5 L1103.3 759.8 L1104.3 759.1 L1105.3 759.5 L1106.3 758.8 L1107.3 759.4 L1108.3 759.6 L1109.3 758.5 L1110.3 759.2 L1111.3 756.4 L1112.3 753.6 L1113.3 750.8 L1114.3 748.0 L1115.3 745.3 L1116.3 742.8 L1117.3 740.3 L1118.3 740.7 L1119.3 747.9 L1120.3 755.0 L1121.3 760.9 L1122.3 764.1 L1123.3 767.3 L1124.3 770.4 L1125.3 773.6 L1126.3 776.8 L1127.3 779.7 L1128.3 781.7 L1129.3 781.8 L1130.3 782.0 L1131.3 780.9 L1132.3 780.1 L1133.3 779.6 L1134.3 778.9 L1135.3 778.4 L1136.3 777.8 L1137.3 775.9 L1138.3 775.7 L1139.3 774.0 L1140.3 772.0 L1141.3 774.4 L1142.3 774.3 L1143.3 775.2 L1144.3 775.6 L1145.3 775.0 L1146.3 773.1 L1147.3 772.4 L1148.3 770.5 L1149.3 770.1 L1150.3 771.0 L1151.3 770.9 L1152.3 771.1 L1153.3 770.3 L1154.3 771.0 L1155.3 769.2 L1156.3 770.2 L1157.3 770.2 L1158.3 771.0 L1159.3 771.8 L1160.3 771.1 L1161.3 770.6 L1162.3 771.4 L1163.3 772.7 L1164.3 772.0 L1165.3 773.0 L1166.3 771.7 L1167.3 771.1 L1168.3 772.1 L1169.3 772.2 L1170.3 771.2 L1171.3 771.4 L1172.3 771.3 L1173.3 771.9 L1174.3 771.3 L1175.3 771.2 L1176.3 770.1 L1177.3 770.2 L1178.3 769.4 L1179.3 769.0 L1180.3 769.5 L1181.3 769.2 L1182.3 769.6 L1183.3 769.4 L1184.3 770.4 L1185.3 770.4 L1186.3 770.5 L1187.3 771.3 L1188.3 770.5 L1189.3 769.1 L1190.3 769.9 L1191.3 771.6 L1192.3 772.8 L1193.3 770.7 L1194.3 771.4 L1195.3 770.2 L1196.3 769.5 L1197.3 771.5 L1198.3 769.3 L1199.3 770.5 L1200.3 770.6 L1201.3 771.8 L1202.3 770.7 L1203.3 772.7 L1204.3 773.6 L1205.3 772.3 L1206.3 771.0 L1207.3 770.5 L1208.3 769.5 L1209.3 767.7 L1210.3 769.4 L1211.3 770.2 L1212.3 768.7 L1213.3 772.8 L1214.3 772.1 L1215.3 770.1 L1216.3 772.3 L1217.3 773.1 L1218.3 772.4 L1219.3 772.7 L1220.3 772.9 L1221.3 771.7 L1222.3 772.3 L1223.3 772.8 L1224.3 771.8 L1225.3 772.9 L1226.3 772.1 L1227.3 768.9 L1228.3 768.7 L1229.3 768.6 L1230.3 768.5 L1231.3 766.5 L1232.3 766.5 L1233.3 766.5 L1234.3 766.9 L1235.3 768.7 L1236.3 765.4 L1237.3 766.2 L1238.3 764.8 L1239.3 767.1 L1240.3 766.4 L1241.3 768.2 L1242.3 768.1 L1243.3 767.0 L1244.3 764.7 L1245.3 765.5 L1246.3 768.1 L1247.3 769.8 L1248.3 769.5 L1249.3 770.0 L1250.3 766.1 L1251.3 765.2 L1252.3 763.6 L1253.3 766.7 L1254.3 766.6 L1255.3 764.7 L1256.3 764.8 L1257.3 767.0 L1258.3 767.0 L1259.3 767.4 L1260.3 765.7 L1261.3 764.1 L1262.3 763.2 L1263.3 765.9 L1264.3 767.2 L1265.3 766.6 L1266.3 766.0 L1267.3 763.8 L1268.3 762.9 L1269.3 762.5 L1270.3 761.2 L1271.3 760.2 L1272.3 761.4 L1273.3 759.7 L1274.3 760.9 L1275.3 762.1 L1276.3 762.8 L1277.3 762.0 L1278.3 760.5 L1279.3 761.0 L1280.3 762.4 L1281.3 761.6 L1282.3 763.7 L1283.3 763.7 L1284.3 762.2 L1285.3 760.2 L1286.3 757.5 L1287.3 757.0 L1288.3 757.4 L1289.3 756.3 L1290.3 757.3 L1291.3 757.4 L1292.3 756.4 L1293.3 755.7 L1294.3 755.0 L1295.3 754.1 L1296.3 755.5 L1297.3 755.0 L1298.3 755.3 L1299.3 755.9 L1300.3 753.3 L1301.3 751.7 L1302.3 752.6 L1303.3 749.9 L1304.3 749.8 L1305.3 749.6 L1306.3 747.0 L1307.3 747.7 L1308.3 747.7 L1309.3 748.5 L1310.3 749.9 L1311.3 752.0 L1312.3 753.8 L1313.3 751.8 L1314.3 752.8 L1315.3 752.3 L1316.3 753.3 L1317.3 754.8 L1318.3 755.2 L1319.3 759.8 L1320.3 761.1 L1321.3 761.1 L1322.3 758.7 L1323.3 758.8 L1324.3 759.0 L1325.3 754.0 L1326.3 756.9 L1327.3 754.5 L1328.3 754.9 L1329.3 756.6 L1330.3 754.2 L1331.3 753.2 L1332.3 751.7 L1333.3 751.9 L1334.3 751.9 L1335.3 753.6 L1336.3 755.3 L1337.3 754.9 L1338.3 755.3 L1339.3 755.5 L1340.3 754.1 L1341.3 753.2 L1342.3 753.0 L1343.3 754.4 L1344.3 753.9 L1345.3 755.1 L1346.3 755.1 L1347.3 755.7 L1348.3 756.9 L1349.3 758.3 L1350.3 758.6 L1351.3 758.6 L1352.3 756.2 L1353.3 755.3 L1354.3 754.8 L1355.3 752.9 L1356.5 754.0 L1356.5 791.2 L740.3 791.2 Z" fill="#73bf691c"/>
<path d="M740.3 703.0 L741.3 703.7 L742.3 704.3 L743.3 706.7 L744.3 705.7 L745.3 706.1 L746.3 703.0 L747.3 703.8 L748.3 703.9 L749.3 704.5 L750.3 706.0 L751.3 705.9 L752.3 705.6 L753.3 703.9 L754.3 704.8 L755.3 703.9 L756.3 705.2 L757.3 704.3 L758.3 707.0 L759.3 706.5 L760.3 709.7 L761.3 709.1 L762.3 712.3 L763.3 712.4 L764.3 710.2 L765.3 710.0 L766.3 702.4 L767.3 703.6 L768.3 701.8 L769.3 701.0 L770.3 700.8 L771.3 703.7 L772.3 704.0 L773.3 705.0 L774.3 703.4 L775.3 701.2 L776.3 701.7 L777.3 700.9 L778.3 703.8 L779.3 706.8 L780.3 707.3 L781.3 709.1 L782.3 706.8 L783.3 704.5 L784.3 703.6 L785.3 703.5 L786.3 704.9 L787.3 705.5 L788.3 701.6 L789.3 700.1 L790.3 699.6 L791.3 699.3 L792.3 701.2 L793.3 699.4 L794.3 701.0 L795.3 701.0 L796.3 702.5 L797.3 701.8 L798.3 701.0 L799.3 703.3 L800.3 702.8 L801.3 702.5 L802.3 702.5 L803.3 701.2 L804.3 701.6 L805.3 701.0 L806.3 701.6 L807.3 701.1 L808.3 701.5 L809.3 701.7 L810.3 700.9 L811.3 699.9 L812.3 699.9 L813.3 698.8 L814.3 698.8 L815.3 700.2 L816.3 699.8 L817.3 699.7 L818.3 698.5 L819.3 698.0 L820.3 697.1 L821.3 698.1 L822.3 697.9 L823.3 697.8 L824.3 698.5 L825.3 698.7 L826.3 700.1 L827.3 699.5 L828.3 701.5 L829.3 704.4 L830.3 702.9 L831.3 702.2 L832.3 702.1 L833.3 702.1 L834.3 701.8 L835.3 701.5 L836.3 701.1 L837.3 699.5 L838.3 698.9 L839.3 699.8 L840.3 700.2 L841.3 698.9 L842.3 701.1 L843.3 702.1 L844.3 701.1 L845.3 703.8 L846.3 703.2 L847.3 701.4 L848.3 703.1 L849.3 703.4 L850.3 702.4 L851.3 702.3 L852.3 705.4 L853.3 703.4 L854.3 700.3 L855.3 700.3 L856.3 704.2 L857.3 702.8 L858.3 703.6 L859.3 704.5 L860.3 703.7 L861.3 700.1 L862.3 701.6 L863.3 703.3 L864.3 705.3 L865.3 705.2 L866.3 705.1 L867.3 705.6 L868.3 705.3 L869.3 703.5 L870.3 704.7 L871.3 704.5 L872.3 705.6 L873.3 702.9 L874.3 705.1 L875.3 704.1 L876.3 702.0 L877.3 702.6 L878.3 711.2 L879.3 708.4 L880.3 710.1 L881.3 711.0 L882.3 712.1 L883.3 709.6 L884.3 710.9 L885.3 709.8 L886.3 709.7 L887.3 700.0 L888.3 699.0 L889.3 699.8 L890.3 700.9 L891.3 702.0 L892.3 702.9 L893.3 702.2 L894.3 700.7 L895.3 699.6 L896.3 698.6 L897.3 697.8 L898.3 699.7 L899.3 699.3 L900.3 698.4 L901.3 697.4 L902.3 698.4 L903.3 700.6 L904.3 701.9 L905.3 699.7 L906.3 699.5 L907.3 702.1 L908.3 704.0 L909.3 704.8 L910.3 702.1 L911.3 703.7 L912.3 706.5 L913.3 706.1 L914.3 708.1 L915.3 709.2 L916.3 708.0 L917.3 709.6 L918.3 709.6 L919.3 707.9 L920.3 707.2 L921.3 710.8 L922.3 709.9 L923.3 707.0 L924.3 699.9 L925.3 700.9 L926.3 698.6 L927.3 700.3 L928.3 699.2 L929.3 699.7 L930.3 697.9 L931.3 699.6 L932.3 702.6 L933.3 701.4 L934.3 701.8 L935.3 703.2 L936.3 703.2 L937.3 702.7 L938.3 704.1 L939.3 705.2 L940.3 705.9 L941.3 705.6 L942.3 706.2 L943.3 706.5 L944.3 706.4 L945.3 706.3 L946.3 705.2 L947.3 706.7 L948.3 704.9 L949.3 704.6 L950.3 703.2 L951.3 705.5 L952.3 701.8 L953.3 700.6 L954.3 701.2 L955.3 700.9 L956.3 702.3 L957.3 709.0 L958.3 707.9 L959.3 707.1 L960.3 706.9 L961.3 708.2 L962.3 708.4 L963.3 704.3 L964.3 705.0 L965.3 706.4 L966.3 706.6 L967.3 707.2 L968.3 707.4 L969.3 709.0 L970.3 708.4 L971.3 708.0 L972.3 707.3 L973.3 713.2 L974.3 712.1 L975.3 713.2 L976.3 714.4 L977.3 714.6 L978.3 714.9 L979.3 715.5 L980.3 713.3 L981.3 714.5 L982.3 709.2 L983.3 710.6 L984.3 710.9 L985.3 709.5 L986.3 708.4 L987.3 708.3 L988.3 709.1 L989.3 710.7 L990.3 712.6 L991.3 711.8 L992.3 712.9 L993.3 710.1 L994.3 711.1 L995.3 708.0 L996.3 707.9 L997.3 707.6 L998.3 709.6 L999.3 710.1 L1000.3 711.9 L1001.3 711.3 L1002.3 712.8 L1003.3 716.7 L1004.3 717.2 L1005.3 717.6 L1006.3 717.1 L1007.3 713.7 L1008.3 712.7 L1009.3 709.9 L1010.3 707.9 L1011.3 705.0 L1012.3 704.8 L1013.3 704.0 L1014.3 705.1 L1015.3 705.5 L1016.3 707.4 L1017.3 706.8 L1018.3 704.7 L1019.3 703.9 L1020.3 703.7 L1021.3 703.0 L1022.3 701.7 L1023.3 702.3 L1024.3 700.9 L1025.3 698.9 L1026.3 699.3 L1027.3 700.0 L1028.3 701.4 L1029.3 699.7 L1030.3 699.9 L1031.3 697.2 L1032.3 698.9 L1033.3 698.9 L1034.3 700.4 L1035.3 699.4 L1036.3 698.3 L1037.3 698.1 L1038.3 700.1 L1039.3 699.3 L1040.3 696.7 L1041.3 698.6 L1042.3 700.7 L1043.3 700.8 L1044.3 701.1 L1045.3 700.0 L1046.3 701.4 L1047.3 700.6 L1048.3 700.7 L1049.3 700.6 L1050.3 701.1 L1051.3 703.4 L1052.3 703.9 L1053.3 701.9 L1054.3 700.3 L1055.3 700.1 L1056.3 700.2 L1057.3 701.6 L1058.3 699.6 L1059.3 700.6 L1060.3 699.0 L1061.3 697.7 L1062.3 695.3 L1063.3 697.4 L1064.3 697.9 L1065.3 697.1 L1066.3 698.0 L1067.3 700.8 L1068.3 702.0 L1069.3 700.0 L1070.3 703.8 L1071.3 703.1 L1072.3 698.7 L1073.3 698.0 L1074.3 699.1 L1075.3 700.5 L1076.3 700.0 L1077.3 697.9 L1078.3 699.1 L1079.3 696.9 L1080.3 696.0 L1081.3 696.6 L1082.3 696.4 L1083.3 698.1 L1084.3 697.3 L1085.3 696.1 L1086.3 696.0 L1087.3 695.3 L1088.3 692.9 L1089.3 694.9 L1090.3 697.0 L1091.3 695.7 L1092.3 697.7 L1093.3 699.7 L1094.3 703.3 L1095.3 706.0 L1096.3 705.4 L1097.3 704.8 L1098.3 712.4 L1099.3 709.5 L1100.3 711.4 L1101.3 711.3 L1102.3 709.1 L1103.3 709.1 L1104.3 708.3 L1105.3 708.4 L1106.3 709.7 L1107.3 711.2 L1108.3 704.7 L1109.3 705.1 L1110.3 709.6 L1111.3 734.8 L1112.3 739.2 L1113.3 738.3 L1114.3 737.5 L1115.3 736.6 L1116.3 734.1 L1117.3 727.8 L1118.3 723.6 L1119.3 730.0 L1120.3 750.0 L1121.3 770.0 L1122.3 772.5 L1123.3 774.4 L1124.3 776.0 L1125.3 776.6 L1126.3 776.1 L1127.3 776.5 L1128.3 772.6 L1129.3 773.0 L1130.3 773.0 L1131.3 772.2 L1132.3 773.0 L1133.3 773.4 L1134.3 775.7 L1135.3 775.9 L1136.3 775.6 L1137.3 774.5 L1138.3 774.2 L1139.3 772.3 L1140.3 771.0 L1141.3 768.6 L1142.3 768.0 L1143.3 771.3 L1144.3 774.0 L1145.3 769.3 L1146.3 769.7 L1147.3 767.1 L1148.3 766.3 L1149.3 768.5 L1150.3 767.2 L1151.3 764.3 L1152.3 764.3 L1153.3 764.9 L1154.3 764.8 L1155.3 764.3 L1156.3 763.1 L1157.3 764.0 L1158.3 764.6 L1159.3 763.6 L1160.3 764.4 L1161.3 764.0 L1162.3 760.4 L1163.3 756.8 L1164.3 756.8 L1165.3 757.9 L1166.3 759.2 L1167.3 759.8 L1168.3 759.4 L1169.3 759.1 L1170.3 759.4 L1171.3 758.0 L1172.3 758.4 L1173.3 758.7 L1174.3 758.5 L1175.3 759.1 L1176.3 759.5 L1177.3 758.6 L1178.3 757.9 L1179.3 758.8 L1180.3 760.7 L1181.3 761.3 L1182.3 762.3 L1183.3 762.9 L1184.3 764.1 L1185.3 763.6 L1186.3 762.1 L1187.3 762.4 L1188.3 761.8 L1189.3 762.9 L1190.3 764.5 L1191.3 763.6 L1192.3 763.7 L1193.3 763.6 L1194.3 762.4 L1195.3 762.1 L1196.3 761.1 L1197.3 760.5 L1198.3 760.3 L1199.3 758.1 L1200.3 757.4 L1201.3 757.9 L1202.3 759.5 L1203.3 760.7 L1204.3 762.2 L1205.3 763.1 L1206.3 762.3 L1207.3 761.2 L1208.3 760.0 L1209.3 760.9 L1210.3 762.2 L1211.3 759.6 L1212.3 757.5 L1213.3 755.6 L1214.3 756.1 L1215.3 756.8 L1216.3 756.7 L1217.3 755.8 L1218.3 755.3 L1219.3 755.8 L1220.3 754.6 L1221.3 754.3 L1222.3 755.0 L1223.3 755.7 L1224.3 758.0 L1225.3 755.3 L1226.3 754.8 L1227.3 753.6 L1228.3 753.4 L1229.3 754.1 L1230.3 752.8 L1231.3 753.4 L1232.3 755.8 L1233.3 755.6 L1234.3 755.6 L1235.3 755.9 L1236.3 755.5 L1237.3 756.0 L1238.3 758.0 L1239.3 756.9 L1240.3 757.2 L1241.3 755.7 L1242.3 755.5 L1243.3 756.6 L1244.3 755.7 L1245.3 755.9 L1246.3 756.5 L1247.3 756.6 L1248.3 756.8 L1249.3 755.4 L1250.3 754.9 L1251.3 755.8 L1252.3 756.6 L1253.3 757.3 L1254.3 757.2 L1255.3 756.1 L1256.3 754.4 L1257.3 755.3 L1258.3 756.5 L1259.3 756.0 L1260.3 756.7 L1261.3 757.7 L1262.3 758.7 L1263.3 760.5 L1264.3 760.5 L1265.3 759.3 L1266.3 758.6 L1267.3 759.3 L1268.3 757.5 L1269.3 757.1 L1270.3 756.4 L1271.3 755.1 L1272.3 754.9 L1273.3 755.4 L1274.3 755.0 L1275.3 752.5 L1276.3 751.3 L1277.3 751.3 L1278.3 753.3 L1279.3 752.7 L1280.3 754.1 L1281.3 753.3 L1282.3 753.0 L1283.3 753.0 L1284.3 753.9 L1285.3 753.6 L1286.3 754.2 L1287.3 753.9 L1288.3 753.0 L1289.3 752.5 L1290.3 753.1 L1291.3 750.6 L1292.3 750.5 L1293.3 750.5 L1294.3 751.7 L1295.3 751.2 L1296.3 749.9 L1297.3 750.3 L1298.3 749.2 L1299.3 748.4 L1300.3 748.7 L1301.3 749.2 L1302.3 753.5 L1303.3 752.7 L1304.3 754.4 L1305.3 751.7 L1306.3 750.6 L1307.3 751.7 L1308.3 750.8 L1309.3 752.1 L1310.3 753.2 L1311.3 753.8 L1312.3 753.5 L1313.3 755.9 L1314.3 756.1 L1315.3 757.2 L1316.3 756.9 L1317.3 755.2 L1318.3 754.6 L1319.3 754.0 L1320.3 755.0 L1321.3 754.5 L1322.3 750.3 L1323.3 752.3 L1324.3 754.3 L1325.3 755.3 L1326.3 754.5 L1327.3 754.2 L1328.3 753.9 L1329.3 752.2 L1330.3 752.8 L1331.3 751.4 L1332.3 750.3 L1333.3 750.0 L1334.3 750.1 L1335.3 751.5 L1336.3 751.2 L1337.3 752.8 L1338.3 753.5 L1339.3 754.0 L1340.3 753.4 L1341.3 752.3 L1342.3 753.5 L1343.3 753.5 L1344.3 753.9 L1345.3 752.0 L1346.3 751.1 L1347.3 752.7 L1348.3 754.4 L1349.3 752.5 L1350.3 752.5 L1351.3 752.6 L1352.3 752.4 L1353.3 752.7 L1354.3 751.5 L1355.3 750.4 L1356.5 750.3 L1356.5 791.2 L740.3 791.2 Z" fill="#e0b4001c"/>
<path d="M740.3 698.6 L741.3 698.4 L742.3 696.9 L743.3 697.5 L744.3 699.2 L745.3 699.4 L746.3 699.9 L747.3 699.2 L748.3 699.0 L749.3 700.8 L750.3 698.6 L751.3 698.9 L752.3 701.0 L753.3 700.5 L754.3 697.4 L755.3 699.7 L756.3 699.9 L757.3 700.4 L758.3 700.3 L759.3 700.1 L760.3 699.2 L761.3 699.2 L762.3 698.7 L763.3 694.6 L764.3 695.8 L765.3 694.1 L766.3 696.1 L767.3 696.0 L768.3 697.3 L769.3 697.1 L770.3 695.2 L771.3 695.5 L772.3 697.5 L773.3 698.4 L774.3 700.9 L775.3 701.3 L776.3 700.6 L777.3 699.6 L778.3 698.7 L779.3 699.6 L780.3 699.5 L781.3 698.8 L782.3 698.3 L783.3 696.9 L784.3 696.6 L785.3 695.3 L786.3 696.8 L787.3 694.1 L788.3 696.4 L789.3 699.3 L790.3 697.3 L791.3 698.4 L792.3 696.7 L793.3 697.4 L794.3 696.3 L795.3 697.8 L796.3 699.1 L797.3 702.2 L798.3 698.9 L799.3 697.8 L800.3 696.8 L801.3 698.5 L802.3 699.6 L803.3 699.1 L804.3 699.7 L805.3 699.5 L806.3 699.9 L807.3 700.9 L808.3 702.1 L809.3 700.4 L810.3 700.0 L811.3 699.7 L812.3 700.8 L813.3 701.0 L814.3 699.1 L815.3 700.8 L816.3 698.9 L817.3 699.6 L818.3 697.7 L819.3 699.1 L820.3 697.6 L821.3 697.5 L822.3 697.0 L823.3 697.8 L824.3 696.2 L825.3 695.2 L826.3 695.2 L827.3 696.7 L828.3 696.3 L829.3 695.0 L830.3 698.9 L831.3 697.4 L832.3 696.4 L833.3 696.1 L834.3 696.7 L835.3 696.6 L836.3 698.0 L837.3 698.6 L838.3 696.8 L839.3 697.1 L840.3 697.3 L841.3 696.4 L842.3 699.5 L843.3 697.9 L844.3 701.1 L845.3 701.6 L846.3 702.2 L847.3 701.9 L848.3 698.8 L849.3 697.4 L850.3 697.9 L851.3 696.7 L852.3 696.2 L853.3 697.2 L854.3 697.7 L855.3 697.8 L856.3 697.7 L857.3 697.8 L858.3 697.9 L859.3 695.7 L860.3 697.7 L861.3 696.5 L862.3 699.2 L863.3 697.3 L864.3 699.9 L865.3 698.4 L866.3 699.5 L867.3 699.6 L868.3 699.8 L869.3 700.6 L870.3 702.5 L871.3 700.3 L872.3 700.3 L873.3 700.6 L874.3 701.9 L875.3 699.1 L876.3 697.7 L877.3 699.1 L878.3 697.1 L879.3 696.6 L880.3 695.2 L881.3 694.8 L882.3 697.5 L883.3 696.6 L884.3 697.1 L885.3 698.7 L886.3 698.0 L887.3 697.5 L888.3 698.8 L889.3 698.8 L890.3 699.0 L891.3 700.7 L892.3 698.5 L893.3 701.8 L894.3 702.4 L895.3 701.1 L896.3 699.9 L897.3 698.7 L898.3 700.8 L899.3 701.3 L900.3 700.6 L901.3 698.3 L902.3 696.2 L903.3 697.6 L904.3 699.0 L905.3 698.1 L906.3 699.0 L907.3 700.2 L908.3 699.2 L909.3 697.5 L910.3 698.5 L911.3 699.0 L912.3 697.8 L913.3 698.7 L914.3 698.0 L915.3 696.7 L916.3 697.6 L917.3 695.5 L918.3 694.1 L919.3 702.0 L920.3 703.3 L921.3 698.7 L922.3 696.8 L923.3 694.1 L924.3 695.6 L925.3 697.5 L926.3 700.7 L927.3 700.2 L928.3 698.5 L929.3 699.5 L930.3 696.7 L931.3 702.4 L932.3 701.6 L933.3 696.1 L934.3 697.1 L935.3 695.2 L936.3 694.1 L937.3 693.5 L938.3 699.0 L939.3 700.0 L940.3 700.0 L941.3 700.1 L942.3 697.9 L943.3 697.2 L944.3 698.4 L945.3 699.5 L946.3 698.1 L947.3 698.6 L948.3 697.8 L949.3 698.6 L950.3 699.9 L951.3 699.5 L952.3 700.9 L953.3 700.6 L954.3 700.3 L955.3 699.1 L956.3 699.2 L957.3 697.9 L958.3 696.2 L959.3 696.1 L960.3 695.8 L961.3 696.0 L962.3 698.3 L963.3 702.1 L964.3 709.0 L965.3 706.9 L966.3 706.5 L967.3 708.0 L968.3 709.4 L969.3 709.3 L970.3 709.0 L971.3 709.5 L972.3 709.4 L973.3 708.5 L974.3 709.5 L975.3 711.5 L976.3 709.4 L977.3 708.0 L978.3 708.0 L979.3 709.2 L980.3 711.4 L981.3 709.6 L982.3 710.5 L983.3 710.1 L984.3 708.2 L985.3 708.5 L986.3 708.3 L987.3 710.5 L988.3 710.4 L989.3 711.2 L990.3 711.9 L991.3 710.9 L992.3 710.0 L993.3 710.4 L994.3 710.1 L995.3 709.5 L996.3 711.2 L997.3 711.1 L998.3 709.4 L999.3 709.4 L1000.3 708.7 L1001.3 709.3 L1002.3 710.0 L1003.3 710.4 L1004.3 709.0 L1005.3 709.3 L1006.3 708.6 L1007.3 707.2 L1008.3 707.8 L1009.3 708.3 L1010.3 707.5 L1011.3 707.9 L1012.3 709.0 L1013.3 707.0 L1014.3 706.0 L1015.3 703.7 L1016.3 705.4 L1017.3 703.7 L1018.3 704.3 L1019.3 703.2 L1020.3 705.1 L1021.3 705.1 L1022.3 705.6 L1023.3 705.4 L1024.3 704.6 L1025.3 704.7 L1026.3 705.4 L1027.3 706.0 L1028.3 707.6 L1029.3 707.0 L1030.3 704.7 L1031.3 704.0 L1032.3 703.5 L1033.3 701.8 L1034.3 704.4 L1035.3 705.9 L1036.3 704.8 L1037.3 706.6 L1038.3 705.3 L1039.3 703.5 L1040.3 704.1 L1041.3 699.3 L1042.3 699.5 L1043.3 698.7 L1044.3 700.0 L1045.3 700.9 L1046.3 700.4 L1047.3 699.6 L1048.3 698.1 L1049.3 699.1 L1050.3 701.6 L1051.3 702.0 L1052.3 703.4 L1053.3 700.8 L1054.3 701.5 L1055.3 701.9 L1056.3 704.4 L1057.3 704.7 L1058.3 702.9 L1059.3 702.2 L1060.3 699.4 L1061.3 701.3 L1062.3 700.3 L1063.3 703.0 L1064.3 700.9 L1065.3 702.4 L1066.3 703.8 L1067.3 701.2 L1068.3 701.3 L1069.3 699.8 L1070.3 700.1 L1071.3 701.2 L1072.3 705.6 L1073.3 705.5 L1074.3 701.0 L1075.3 701.9 L1076.3 701.6 L1077.3 701.7 L1078.3 703.1 L1079.3 702.3 L1080.3 701.3 L1081.3 700.6 L1082.3 700.9 L1083.3 701.6 L1084.3 700.2 L1085.3 700.0 L1086.3 700.4 L1087.3 698.4 L1088.3 700.0 L1089.3 699.8 L1090.3 697.9 L1091.3 699.9 L1092.3 699.7 L1093.3 701.2 L1094.3 700.6 L1095.3 698.2 L1096.3 697.0 L1097.3 697.8 L1098.3 697.5 L1099.3 699.0 L1100.3 697.2 L1101.3 696.4 L1102.3 697.1 L1103.3 697.0 L1104.3 696.1 L1105.3 696.2 L1106.3 698.1 L1107.3 698.2 L1108.3 697.5 L1109.3 700.1 L1110.3 696.7 L1111.3 688.3 L1112.3 686.0 L1113.3 683.7 L1114.3 681.5 L1115.3 679.2 L1116.3 676.9 L1117.3 675.5 L1118.3 685.3 L1119.3 716.3 L1120.3 747.3 L1121.3 765.8 L1122.3 767.5 L1123.3 766.8 L1124.3 764.5 L1125.3 766.1 L1126.3 765.2 L1127.3 766.1 L1128.3 765.0 L1129.3 764.7 L1130.3 767.9 L1131.3 767.3 L1132.3 767.5 L1133.3 768.6 L1134.3 768.0 L1135.3 765.3 L1136.3 765.7 L1137.3 765.5 L1138.3 766.3 L1139.3 766.8 L1140.3 767.3 L1141.3 767.0 L1142.3 765.2 L1143.3 763.8 L1144.3 763.8 L1145.3 762.7 L1146.3 764.6 L1147.3 765.5 L1148.3 766.4 L1149.3 766.3 L1150.3 767.6 L1151.3 765.8 L1152.3 764.8 L1153.3 763.5 L1154.3 762.6 L1155.3 762.7 L1156.3 764.5 L1157.3 764.3 L1158.3 761.3 L1159.3 763.0 L1160.3 761.7 L1161.3 761.5 L1162.3 760.8 L1163.3 760.4 L1164.3 759.9 L1165.3 759.3 L1166.3 759.2 L1167.3 757.9 L1168.3 758.1 L1169.3 757.3 L1170.3 757.5 L1171.3 758.2 L1172.3 759.4 L1173.3 760.5 L1174.3 758.8 L1175.3 758.3 L1176.3 757.0 L1177.3 755.5 L1178.3 756.4 L1179.3 755.1 L1180.3 756.4 L1181.3 759.7 L1182.3 758.3 L1183.3 763.6 L1184.3 764.3 L1185.3 763.4 L1186.3 761.5 L1187.3 758.3 L1188.3 758.6 L1189.3 759.0 L1190.3 760.3 L1191.3 761.3 L1192.3 762.5 L1193.3 761.7 L1194.3 760.7 L1195.3 761.7 L1196.3 763.4 L1197.3 762.8 L1198.3 764.4 L1199.3 763.7 L1200.3 763.1 L1201.3 764.8 L1202.3 764.4 L1203.3 764.1 L1204.3 761.8 L1205.3 761.7 L1206.3 761.0 L1207.3 760.3 L1208.3 760.9 L1209.3 761.0 L1210.3 762.1 L1211.3 761.6 L1212.3 762.1 L1213.3 762.9 L1214.3 762.8 L1215.3 764.9 L1216.3 765.4 L1217.3 768.8 L1218.3 768.2 L1219.3 768.3 L1220.3 768.7 L1221.3 770.2 L1222.3 764.5 L1223.3 764.1 L1224.3 763.3 L1225.3 762.8 L1226.3 765.5 L1227.3 763.4 L1228.3 765.4 L1229.3 764.4 L1230.3 762.8 L1231.3 761.9 L1232.3 763.5 L1233.3 761.2 L1234.3 762.6 L1235.3 764.3 L1236.3 768.7 L1237.3 769.8 L1238.3 763.8 L1239.3 764.3 L1240.3 763.5 L1241.3 764.6 L1242.3 763.5 L1243.3 762.7 L1244.3 763.5 L1245.3 762.9 L1246.3 764.1 L1247.3 763.8 L1248.3 764.2 L1249.3 763.6 L1250.3 763.6 L1251.3 760.6 L1252.3 758.8 L1253.3 758.4 L1254.3 760.5 L1255.3 760.4 L1256.3 760.3 L1257.3 759.3 L1258.3 760.7 L1259.3 762.4 L1260.3 763.7 L1261.3 764.3 L1262.3 762.7 L1263.3 763.2 L1264.3 764.9 L1265.3 765.4 L1266.3 764.9 L1267.3 766.4 L1268.3 766.4 L1269.3 767.3 L1270.3 766.2 L1271.3 766.4 L1272.3 765.0 L1273.3 766.0 L1274.3 765.1 L1275.3 764.1 L1276.3 763.0 L1277.3 762.1 L1278.3 764.0 L1279.3 763.2 L1280.3 764.1 L1281.3 765.6 L1282.3 764.2 L1283.3 764.0 L1284.3 762.0 L1285.3 765.2 L1286.3 764.6 L1287.3 761.4 L1288.3 760.3 L1289.3 762.8 L1290.3 762.2 L1291.3 760.9 L1292.3 758.6 L1293.3 758.3 L1294.3 759.2 L1295.3 761.0 L1296.3 759.7 L1297.3 757.4 L1298.3 758.3 L1299.3 757.5 L1300.3 756.9 L1301.3 757.2 L1302.3 757.4 L1303.3 756.8 L1304.3 757.0 L1305.3 756.1 L1306.3 755.6 L1307.3 755.8 L1308.3 755.3 L1309.3 755.1 L1310.3 756.8 L1311.3 757.4 L1312.3 758.8 L1313.3 757.6 L1314.3 757.8 L1315.3 758.9 L1316.3 759.6 L1317.3 758.6 L1318.3 758.6 L1319.3 757.9 L1320.3 757.9 L1321.3 757.2 L1322.3 756.6 L1323.3 758.7 L1324.3 758.2 L1325.3 758.9 L1326.3 759.4 L1327.3 758.4 L1328.3 758.2 L1329.3 758.8 L1330.3 758.4 L1331.3 757.0 L1332.3 757.6 L1333.3 759.1 L1334.3 759.3 L1335.3 756.2 L1336.3 755.2 L1337.3 754.8 L1338.3 756.1 L1339.3 755.7 L1340.3 756.4 L1341.3 757.7 L1342.3 758.1 L1343.3 757.8 L1344.3 757.5 L1345.3 758.4 L1346.3 757.8 L1347.3 756.7 L1348.3 758.1 L1349.3 758.9 L1350.3 760.2 L1351.3 760.9 L1352.3 760.2 L1353.3 761.0 L1354.3 759.7 L1355.3 759.9 L1356.5 759.0 L1356.5 791.2 L740.3 791.2 Z" fill="#8ab8ff1c"/>
<path d="M740.3 759.5 L741.3 758.8 L742.3 759.5 L743.3 760.5 L744.3 760.7 L745.3 760.4 L746.3 760.6 L747.3 762.0 L748.3 759.8 L749.3 761.7 L750.3 760.7 L751.3 760.1 L752.3 759.4 L753.3 758.6 L754.3 758.5 L755.3 759.2 L756.3 759.7 L757.3 760.1 L758.3 759.8 L759.3 760.8 L760.3 759.2 L761.3 759.8 L762.3 760.1 L763.3 760.9 L764.3 762.0 L765.3 758.8 L766.3 758.8 L767.3 758.7 L768.3 757.8 L769.3 755.8 L770.3 757.6 L771.3 759.3 L772.3 760.1 L773.3 760.1 L774.3 759.5 L775.3 759.7 L776.3 759.7 L777.3 755.9 L778.3 757.6 L779.3 759.3 L780.3 763.0 L781.3 763.1 L782.3 766.1 L783.3 764.3 L784.3 763.2 L785.3 763.2 L786.3 763.3 L787.3 763.8 L788.3 760.0 L789.3 761.3 L790.3 760.8 L791.3 759.8 L792.3 761.3 L793.3 761.5 L794.3 760.2 L795.3 761.1 L796.3 761.5 L797.3 761.6 L798.3 760.1 L799.3 759.3 L800.3 759.0 L801.3 760.7 L802.3 757.9 L803.3 759.2 L804.3 760.1 L805.3 762.1 L806.3 761.3 L807.3 760.0 L808.3 758.5 L809.3 758.3 L810.3 759.6 L811.3 758.1 L812.3 759.3 L813.3 759.5 L814.3 760.9 L815.3 761.0 L816.3 761.1 L817.3 760.1 L818.3 759.4 L819.3 759.4 L820.3 758.4 L821.3 760.0 L822.3 759.6 L823.3 759.3 L824.3 759.3 L825.3 761.4 L826.3 762.4 L827.3 764.2 L828.3 763.3 L829.3 762.6 L830.3 763.1 L831.3 762.4 L832.3 763.7 L833.3 763.3 L834.3 761.7 L835.3 760.4 L836.3 758.2 L837.3 757.4 L838.3 758.0 L839.3 757.4 L840.3 756.6 L841.3 756.4 L842.3 757.2 L843.3 757.1 L844.3 762.1 L845.3 763.5 L846.3 758.6 L847.3 757.6 L848.3 759.4 L849.3 760.3 L850.3 762.2 L851.3 761.5 L852.3 761.3 L853.3 761.3 L854.3 761.5 L855.3 761.8 L856.3 761.3 L857.3 763.9 L858.3 764.3 L859.3 763.0 L860.3 761.0 L861.3 760.9 L862.3 760.7 L863.3 759.0 L864.3 761.1 L865.3 762.6 L866.3 762.7 L867.3 762.1 L868.3 766.5 L869.3 763.8 L870.3 761.6 L871.3 760.3 L872.3 756.8 L873.3 756.2 L874.3 755.5 L875.3 755.5 L876.3 755.5 L877.3 754.2 L878.3 755.6 L879.3 757.1 L880.3 757.5 L881.3 758.3 L882.3 759.2 L883.3 760.4 L884.3 759.9 L885.3 759.4 L886.3 757.9 L887.3 757.4 L888.3 760.6 L889.3 761.2 L890.3 760.5 L891.3 761.6 L892.3 760.3 L893.3 759.8 L894.3 762.8 L895.3 761.1 L896.3 760.8 L897.3 760.5 L898.3 760.2 L899.3 759.0 L900.3 760.6 L901.3 759.3 L902.3 759.7 L903.3 760.1 L904.3 759.1 L905.3 759.2 L906.3 756.6 L907.3 757.2 L908.3 755.5 L909.3 755.8 L910.3 755.8 L911.3 758.3 L912.3 758.4 L913.3 759.5 L914.3 760.5 L915.3 764.0 L916.3 763.3 L917.3 763.3 L918.3 758.6 L919.3 760.4 L920.3 758.9 L921.3 760.3 L922.3 758.4 L923.3 758.5 L924.3 758.3 L925.3 758.4 L926.3 758.6 L927.3 759.5 L928.3 761.8 L929.3 760.2 L930.3 758.2 L931.3 758.3 L932.3 758.7 L933.3 759.9 L934.3 763.7 L935.3 762.1 L936.3 763.4 L937.3 763.8 L938.3 765.2 L939.3 760.9 L940.3 761.0 L941.3 761.2 L942.3 759.5 L943.3 764.2 L944.3 764.7 L945.3 765.0 L946.3 765.6 L947.3 764.4 L948.3 763.7 L949.3 762.1 L950.3 762.6 L951.3 761.4 L952.3 761.9 L953.3 759.9 L954.3 758.5 L955.3 762.1 L956.3 761.1 L957.3 763.5 L958.3 762.1 L959.3 757.9 L960.3 758.1 L961.3 757.8 L962.3 760.0 L963.3 759.3 L964.3 761.0 L965.3 758.7 L966.3 757.8 L967.3 756.4 L968.3 754.9 L969.3 756.5 L970.3 755.1 L971.3 757.2 L972.3 760.2 L973.3 760.3 L974.3 764.5 L975.3 765.6 L976.3 764.0 L977.3 763.9 L978.3 765.1 L979.3 763.5 L980.3 764.5 L981.3 765.4 L982.3 768.5 L983.3 766.2 L984.3 766.3 L985.3 761.2 L986.3 761.3 L987.3 762.3 L988.3 761.8 L989.3 761.6 L990.3 760.2 L991.3 759.6 L992.3 763.0 L993.3 764.4 L994.3 767.3 L995.3 764.9 L996.3 763.5 L997.3 758.5 L998.3 763.0 L999.3 762.5 L1000.3 761.9 L1001.3 763.1 L1002.3 762.2 L1003.3 762.1 L1004.3 757.2 L1005.3 756.6 L1006.3 755.7 L1007.3 756.0 L1008.3 755.8 L1009.3 756.6 L1010.3 757.4 L1011.3 757.1 L1012.3 759.3 L1013.3 759.1 L1014.3 759.4 L1015.3 757.8 L1016.3 760.0 L1017.3 758.6 L1018.3 758.9 L1019.3 758.8 L1020.3 757.5 L1021.3 758.6 L1022.3 759.1 L1023.3 759.1 L1024.3 758.7 L1025.3 759.5 L1026.3 759.8 L1027.3 759.8 L1028.3 756.3 L1029.3 756.4 L1030.3 758.7 L1031.3 759.2 L1032.3 759.3 L1033.3 758.1 L1034.3 758.3 L1035.3 758.5 L1036.3 758.7 L1037.3 758.9 L1038.3 758.6 L1039.3 758.0 L1040.3 757.7 L1041.3 757.3 L1042.3 758.8 L1043.3 759.0 L1044.3 756.9 L1045.3 758.3 L1046.3 759.1 L1047.3 759.4 L1048.3 760.4 L1049.3 760.9 L1050.3 761.5 L1051.3 761.4 L1052.3 760.0 L1053.3 758.5 L1054.3 756.8 L1055.3 757.0 L1056.3 755.8 L1057.3 755.2 L1058.3 755.5 L1059.3 757.6 L1060.3 758.6 L1061.3 759.5 L1062.3 760.2 L1063.3 759.2 L1064.3 760.1 L1065.3 758.7 L1066.3 759.4 L1067.3 759.3 L1068.3 758.6 L1069.3 758.7 L1070.3 760.8 L1071.3 761.0 L1072.3 757.4 L1073.3 757.5 L1074.3 758.7 L1075.3 759.9 L1076.3 760.0 L1077.3 760.4 L1078.3 759.3 L1079.3 759.7 L1080.3 761.3 L1081.3 759.4 L1082.3 759.7 L1083.3 761.2 L1084.3 759.2 L1085.3 760.8 L1086.3 760.2 L1087.3 759.2 L1088.3 757.6 L1089.3 757.2 L1090.3 757.6 L1091.3 756.9 L1092.3 756.6 L1093.3 757.3 L1094.3 757.0 L1095.3 758.0 L1096.3 758.8 L1097.3 759.1 L1098.3 761.1 L1099.3 760.9 L1100.3 760.0 L1101.3 761.9 L1102.3 761.5 L1103.3 759.8 L1104.3 759.1 L1105.3 759.5 L1106.3 758.8 L1107.3 759.4 L1108.3 759.6 L1109.3 758.5 L1110.3 759.2 L1111.3 756.4 L1112.3 753.6 L1113.3 750.8 L1114.3 748.0 L1115.3 745.3 L1116.3 742.8 L1117.3 740.3 L1118.3 740.7 L1119.3 747.9 L1120.3 755.0 L1121.3 760.9 L1122.3 764.1 L1123.3 767.3 L1124.3 770.4 L1125.3 773.6 L1126.3 776.8 L1127.3 779.7 L1128.3 781.7 L1129.3 781.8 L1130.3 782.0 L1131.3 780.9 L1132.3 780.1 L1133.3 779.6 L1134.3 778.9 L1135.3 778.4 L1136.3 777.8 L1137.3 775.9 L1138.3 775.7 L1139.3 774.0 L1140.3 772.0 L1141.3 774.4 L1142.3 774.3 L1143.3 775.2 L1144.3 775.6 L1145.3 775.0 L1146.3 773.1 L1147.3 772.4 L1148.3 770.5 L1149.3 770.1 L1150.3 771.0 L1151.3 770.9 L1152.3 771.1 L1153.3 770.3 L1154.3 771.0 L1155.3 769.2 L1156.3 770.2 L1157.3 770.2 L1158.3 771.0 L1159.3 771.8 L1160.3 771.1 L1161.3 770.6 L1162.3 771.4 L1163.3 772.7 L1164.3 772.0 L1165.3 773.0 L1166.3 771.7 L1167.3 771.1 L1168.3 772.1 L1169.3 772.2 L1170.3 771.2 L1171.3 771.4 L1172.3 771.3 L1173.3 771.9 L1174.3 771.3 L1175.3 771.2 L1176.3 770.1 L1177.3 770.2 L1178.3 769.4 L1179.3 769.0 L1180.3 769.5 L1181.3 769.2 L1182.3 769.6 L1183.3 769.4 L1184.3 770.4 L1185.3 770.4 L1186.3 770.5 L1187.3 771.3 L1188.3 770.5 L1189.3 769.1 L1190.3 769.9 L1191.3 771.6 L1192.3 772.8 L1193.3 770.7 L1194.3 771.4 L1195.3 770.2 L1196.3 769.5 L1197.3 771.5 L1198.3 769.3 L1199.3 770.5 L1200.3 770.6 L1201.3 771.8 L1202.3 770.7 L1203.3 772.7 L1204.3 773.6 L1205.3 772.3 L1206.3 771.0 L1207.3 770.5 L1208.3 769.5 L1209.3 767.7 L1210.3 769.4 L1211.3 770.2 L1212.3 768.7 L1213.3 772.8 L1214.3 772.1 L1215.3 770.1 L1216.3 772.3 L1217.3 773.1 L1218.3 772.4 L1219.3 772.7 L1220.3 772.9 L1221.3 771.7 L1222.3 772.3 L1223.3 772.8 L1224.3 771.8 L1225.3 772.9 L1226.3 772.1 L1227.3 768.9 L1228.3 768.7 L1229.3 768.6 L1230.3 768.5 L1231.3 766.5 L1232.3 766.5 L1233.3 766.5 L1234.3 766.9 L1235.3 768.7 L1236.3 765.4 L1237.3 766.2 L1238.3 764.8 L1239.3 767.1 L1240.3 766.4 L1241.3 768.2 L1242.3 768.1 L1243.3 767.0 L1244.3 764.7 L1245.3 765.5 L1246.3 768.1 L1247.3 769.8 L1248.3 769.5 L1249.3 770.0 L1250.3 766.1 L1251.3 765.2 L1252.3 763.6 L1253.3 766.7 L1254.3 766.6 L1255.3 764.7 L1256.3 764.8 L1257.3 767.0 L1258.3 767.0 L1259.3 767.4 L1260.3 765.7 L1261.3 764.1 L1262.3 763.2 L1263.3 765.9 L1264.3 767.2 L1265.3 766.6 L1266.3 766.0 L1267.3 763.8 L1268.3 762.9 L1269.3 762.5 L1270.3 761.2 L1271.3 760.2 L1272.3 761.4 L1273.3 759.7 L1274.3 760.9 L1275.3 762.1 L1276.3 762.8 L1277.3 762.0 L1278.3 760.5 L1279.3 761.0 L1280.3 762.4 L1281.3 761.6 L1282.3 763.7 L1283.3 763.7 L1284.3 762.2 L1285.3 760.2 L1286.3 757.5 L1287.3 757.0 L1288.3 757.4 L1289.3 756.3 L1290.3 757.3 L1291.3 757.4 L1292.3 756.4 L1293.3 755.7 L1294.3 755.0 L1295.3 754.1 L1296.3 755.5 L1297.3 755.0 L1298.3 755.3 L1299.3 755.9 L1300.3 753.3 L1301.3 751.7 L1302.3 752.6 L1303.3 749.9 L1304.3 749.8 L1305.3 749.6 L1306.3 747.0 L1307.3 747.7 L1308.3 747.7 L1309.3 748.5 L1310.3 749.9 L1311.3 752.0 L1312.3 753.8 L1313.3 751.8 L1314.3 752.8 L1315.3 752.3 L1316.3 753.3 L1317.3 754.8 L1318.3 755.2 L1319.3 759.8 L1320.3 761.1 L1321.3 761.1 L1322.3 758.7 L1323.3 758.8 L1324.3 759.0 L1325.3 754.0 L1326.3 756.9 L1327.3 754.5 L1328.3 754.9 L1329.3 756.6 L1330.3 754.2 L1331.3 753.2 L1332.3 751.7 L1333.3 751.9 L1334.3 751.9 L1335.3 753.6 L1336.3 755.3 L1337.3 754.9 L1338.3 755.3 L1339.3 755.5 L1340.3 754.1 L1341.3 753.2 L1342.3 753.0 L1343.3 754.4 L1344.3 753.9 L1345.3 755.1 L1346.3 755.1 L1347.3 755.7 L1348.3 756.9 L1349.3 758.3 L1350.3 758.6 L1351.3 758.6 L1352.3 756.2 L1353.3 755.3 L1354.3 754.8 L1355.3 752.9 L1356.5 754.0" fill="none" stroke="#73bf69" stroke-width="1" stroke-linejoin="round"/>
<path d="M740.3 703.0 L741.3 703.7 L742.3 704.3 L743.3 706.7 L744.3 705.7 L745.3 706.1 L746.3 703.0 L747.3 703.8 L748.3 703.9 L749.3 704.5 L750.3 706.0 L751.3 705.9 L752.3 705.6 L753.3 703.9 L754.3 704.8 L755.3 703.9 L756.3 705.2 L757.3 704.3 L758.3 707.0 L759.3 706.5 L760.3 709.7 L761.3 709.1 L762.3 712.3 L763.3 712.4 L764.3 710.2 L765.3 710.0 L766.3 702.4 L767.3 703.6 L768.3 701.8 L769.3 701.0 L770.3 700.8 L771.3 703.7 L772.3 704.0 L773.3 705.0 L774.3 703.4 L775.3 701.2 L776.3 701.7 L777.3 700.9 L778.3 703.8 L779.3 706.8 L780.3 707.3 L781.3 709.1 L782.3 706.8 L783.3 704.5 L784.3 703.6 L785.3 703.5 L786.3 704.9 L787.3 705.5 L788.3 701.6 L789.3 700.1 L790.3 699.6 L791.3 699.3 L792.3 701.2 L793.3 699.4 L794.3 701.0 L795.3 701.0 L796.3 702.5 L797.3 701.8 L798.3 701.0 L799.3 703.3 L800.3 702.8 L801.3 702.5 L802.3 702.5 L803.3 701.2 L804.3 701.6 L805.3 701.0 L806.3 701.6 L807.3 701.1 L808.3 701.5 L809.3 701.7 L810.3 700.9 L811.3 699.9 L812.3 699.9 L813.3 698.8 L814.3 698.8 L815.3 700.2 L816.3 699.8 L817.3 699.7 L818.3 698.5 L819.3 698.0 L820.3 697.1 L821.3 698.1 L822.3 697.9 L823.3 697.8 L824.3 698.5 L825.3 698.7 L826.3 700.1 L827.3 699.5 L828.3 701.5 L829.3 704.4 L830.3 702.9 L831.3 702.2 L832.3 702.1 L833.3 702.1 L834.3 701.8 L835.3 701.5 L836.3 701.1 L837.3 699.5 L838.3 698.9 L839.3 699.8 L840.3 700.2 L841.3 698.9 L842.3 701.1 L843.3 702.1 L844.3 701.1 L845.3 703.8 L846.3 703.2 L847.3 701.4 L848.3 703.1 L849.3 703.4 L850.3 702.4 L851.3 702.3 L852.3 705.4 L853.3 703.4 L854.3 700.3 L855.3 700.3 L856.3 704.2 L857.3 702.8 L858.3 703.6 L859.3 704.5 L860.3 703.7 L861.3 700.1 L862.3 701.6 L863.3 703.3 L864.3 705.3 L865.3 705.2 L866.3 705.1 L867.3 705.6 L868.3 705.3 L869.3 703.5 L870.3 704.7 L871.3 704.5 L872.3 705.6 L873.3 702.9 L874.3 705.1 L875.3 704.1 L876.3 702.0 L877.3 702.6 L878.3 711.2 L879.3 708.4 L880.3 710.1 L881.3 711.0 L882.3 712.1 L883.3 709.6 L884.3 710.9 L885.3 709.8 L886.3 709.7 L887.3 700.0 L888.3 699.0 L889.3 699.8 L890.3 700.9 L891.3 702.0 L892.3 702.9 L893.3 702.2 L894.3 700.7 L895.3 699.6 L896.3 698.6 L897.3 697.8 L898.3 699.7 L899.3 699.3 L900.3 698.4 L901.3 697.4 L902.3 698.4 L903.3 700.6 L904.3 701.9 L905.3 699.7 L906.3 699.5 L907.3 702.1 L908.3 704.0 L909.3 704.8 L910.3 702.1 L911.3 703.7 L912.3 706.5 L913.3 706.1 L914.3 708.1 L915.3 709.2 L916.3 708.0 L917.3 709.6 L918.3 709.6 L919.3 707.9 L920.3 707.2 L921.3 710.8 L922.3 709.9 L923.3 707.0 L924.3 699.9 L925.3 700.9 L926.3 698.6 L927.3 700.3 L928.3 699.2 L929.3 699.7 L930.3 697.9 L931.3 699.6 L932.3 702.6 L933.3 701.4 L934.3 701.8 L935.3 703.2 L936.3 703.2 L937.3 702.7 L938.3 704.1 L939.3 705.2 L940.3 705.9 L941.3 705.6 L942.3 706.2 L943.3 706.5 L944.3 706.4 L945.3 706.3 L946.3 705.2 L947.3 706.7 L948.3 704.9 L949.3 704.6 L950.3 703.2 L951.3 705.5 L952.3 701.8 L953.3 700.6 L954.3 701.2 L955.3 700.9 L956.3 702.3 L957.3 709.0 L958.3 707.9 L959.3 707.1 L960.3 706.9 L961.3 708.2 L962.3 708.4 L963.3 704.3 L964.3 705.0 L965.3 706.4 L966.3 706.6 L967.3 707.2 L968.3 707.4 L969.3 709.0 L970.3 708.4 L971.3 708.0 L972.3 707.3 L973.3 713.2 L974.3 712.1 L975.3 713.2 L976.3 714.4 L977.3 714.6 L978.3 714.9 L979.3 715.5 L980.3 713.3 L981.3 714.5 L982.3 709.2 L983.3 710.6 L984.3 710.9 L985.3 709.5 L986.3 708.4 L987.3 708.3 L988.3 709.1 L989.3 710.7 L990.3 712.6 L991.3 711.8 L992.3 712.9 L993.3 710.1 L994.3 711.1 L995.3 708.0 L996.3 707.9 L997.3 707.6 L998.3 709.6 L999.3 710.1 L1000.3 711.9 L1001.3 711.3 L1002.3 712.8 L1003.3 716.7 L1004.3 717.2 L1005.3 717.6 L1006.3 717.1 L1007.3 713.7 L1008.3 712.7 L1009.3 709.9 L1010.3 707.9 L1011.3 705.0 L1012.3 704.8 L1013.3 704.0 L1014.3 705.1 L1015.3 705.5 L1016.3 707.4 L1017.3 706.8 L1018.3 704.7 L1019.3 703.9 L1020.3 703.7 L1021.3 703.0 L1022.3 701.7 L1023.3 702.3 L1024.3 700.9 L1025.3 698.9 L1026.3 699.3 L1027.3 700.0 L1028.3 701.4 L1029.3 699.7 L1030.3 699.9 L1031.3 697.2 L1032.3 698.9 L1033.3 698.9 L1034.3 700.4 L1035.3 699.4 L1036.3 698.3 L1037.3 698.1 L1038.3 700.1 L1039.3 699.3 L1040.3 696.7 L1041.3 698.6 L1042.3 700.7 L1043.3 700.8 L1044.3 701.1 L1045.3 700.0 L1046.3 701.4 L1047.3 700.6 L1048.3 700.7 L1049.3 700.6 L1050.3 701.1 L1051.3 703.4 L1052.3 703.9 L1053.3 701.9 L1054.3 700.3 L1055.3 700.1 L1056.3 700.2 L1057.3 701.6 L1058.3 699.6 L1059.3 700.6 L1060.3 699.0 L1061.3 697.7 L1062.3 695.3 L1063.3 697.4 L1064.3 697.9 L1065.3 697.1 L1066.3 698.0 L1067.3 700.8 L1068.3 702.0 L1069.3 700.0 L1070.3 703.8 L1071.3 703.1 L1072.3 698.7 L1073.3 698.0 L1074.3 699.1 L1075.3 700.5 L1076.3 700.0 L1077.3 697.9 L1078.3 699.1 L1079.3 696.9 L1080.3 696.0 L1081.3 696.6 L1082.3 696.4 L1083.3 698.1 L1084.3 697.3 L1085.3 696.1 L1086.3 696.0 L1087.3 695.3 L1088.3 692.9 L1089.3 694.9 L1090.3 697.0 L1091.3 695.7 L1092.3 697.7 L1093.3 699.7 L1094.3 703.3 L1095.3 706.0 L1096.3 705.4 L1097.3 704.8 L1098.3 712.4 L1099.3 709.5 L1100.3 711.4 L1101.3 711.3 L1102.3 709.1 L1103.3 709.1 L1104.3 708.3 L1105.3 708.4 L1106.3 709.7 L1107.3 711.2 L1108.3 704.7 L1109.3 705.1 L1110.3 709.6 L1111.3 734.8 L1112.3 739.2 L1113.3 738.3 L1114.3 737.5 L1115.3 736.6 L1116.3 734.1 L1117.3 727.8 L1118.3 723.6 L1119.3 730.0 L1120.3 750.0 L1121.3 770.0 L1122.3 772.5 L1123.3 774.4 L1124.3 776.0 L1125.3 776.6 L1126.3 776.1 L1127.3 776.5 L1128.3 772.6 L1129.3 773.0 L1130.3 773.0 L1131.3 772.2 L1132.3 773.0 L1133.3 773.4 L1134.3 775.7 L1135.3 775.9 L1136.3 775.6 L1137.3 774.5 L1138.3 774.2 L1139.3 772.3 L1140.3 771.0 L1141.3 768.6 L1142.3 768.0 L1143.3 771.3 L1144.3 774.0 L1145.3 769.3 L1146.3 769.7 L1147.3 767.1 L1148.3 766.3 L1149.3 768.5 L1150.3 767.2 L1151.3 764.3 L1152.3 764.3 L1153.3 764.9 L1154.3 764.8 L1155.3 764.3 L1156.3 763.1 L1157.3 764.0 L1158.3 764.6 L1159.3 763.6 L1160.3 764.4 L1161.3 764.0 L1162.3 760.4 L1163.3 756.8 L1164.3 756.8 L1165.3 757.9 L1166.3 759.2 L1167.3 759.8 L1168.3 759.4 L1169.3 759.1 L1170.3 759.4 L1171.3 758.0 L1172.3 758.4 L1173.3 758.7 L1174.3 758.5 L1175.3 759.1 L1176.3 759.5 L1177.3 758.6 L1178.3 757.9 L1179.3 758.8 L1180.3 760.7 L1181.3 761.3 L1182.3 762.3 L1183.3 762.9 L1184.3 764.1 L1185.3 763.6 L1186.3 762.1 L1187.3 762.4 L1188.3 761.8 L1189.3 762.9 L1190.3 764.5 L1191.3 763.6 L1192.3 763.7 L1193.3 763.6 L1194.3 762.4 L1195.3 762.1 L1196.3 761.1 L1197.3 760.5 L1198.3 760.3 L1199.3 758.1 L1200.3 757.4 L1201.3 757.9 L1202.3 759.5 L1203.3 760.7 L1204.3 762.2 L1205.3 763.1 L1206.3 762.3 L1207.3 761.2 L1208.3 760.0 L1209.3 760.9 L1210.3 762.2 L1211.3 759.6 L1212.3 757.5 L1213.3 755.6 L1214.3 756.1 L1215.3 756.8 L1216.3 756.7 L1217.3 755.8 L1218.3 755.3 L1219.3 755.8 L1220.3 754.6 L1221.3 754.3 L1222.3 755.0 L1223.3 755.7 L1224.3 758.0 L1225.3 755.3 L1226.3 754.8 L1227.3 753.6 L1228.3 753.4 L1229.3 754.1 L1230.3 752.8 L1231.3 753.4 L1232.3 755.8 L1233.3 755.6 L1234.3 755.6 L1235.3 755.9 L1236.3 755.5 L1237.3 756.0 L1238.3 758.0 L1239.3 756.9 L1240.3 757.2 L1241.3 755.7 L1242.3 755.5 L1243.3 756.6 L1244.3 755.7 L1245.3 755.9 L1246.3 756.5 L1247.3 756.6 L1248.3 756.8 L1249.3 755.4 L1250.3 754.9 L1251.3 755.8 L1252.3 756.6 L1253.3 757.3 L1254.3 757.2 L1255.3 756.1 L1256.3 754.4 L1257.3 755.3 L1258.3 756.5 L1259.3 756.0 L1260.3 756.7 L1261.3 757.7 L1262.3 758.7 L1263.3 760.5 L1264.3 760.5 L1265.3 759.3 L1266.3 758.6 L1267.3 759.3 L1268.3 757.5 L1269.3 757.1 L1270.3 756.4 L1271.3 755.1 L1272.3 754.9 L1273.3 755.4 L1274.3 755.0 L1275.3 752.5 L1276.3 751.3 L1277.3 751.3 L1278.3 753.3 L1279.3 752.7 L1280.3 754.1 L1281.3 753.3 L1282.3 753.0 L1283.3 753.0 L1284.3 753.9 L1285.3 753.6 L1286.3 754.2 L1287.3 753.9 L1288.3 753.0 L1289.3 752.5 L1290.3 753.1 L1291.3 750.6 L1292.3 750.5 L1293.3 750.5 L1294.3 751.7 L1295.3 751.2 L1296.3 749.9 L1297.3 750.3 L1298.3 749.2 L1299.3 748.4 L1300.3 748.7 L1301.3 749.2 L1302.3 753.5 L1303.3 752.7 L1304.3 754.4 L1305.3 751.7 L1306.3 750.6 L1307.3 751.7 L1308.3 750.8 L1309.3 752.1 L1310.3 753.2 L1311.3 753.8 L1312.3 753.5 L1313.3 755.9 L1314.3 756.1 L1315.3 757.2 L1316.3 756.9 L1317.3 755.2 L1318.3 754.6 L1319.3 754.0 L1320.3 755.0 L1321.3 754.5 L1322.3 750.3 L1323.3 752.3 L1324.3 754.3 L1325.3 755.3 L1326.3 754.5 L1327.3 754.2 L1328.3 753.9 L1329.3 752.2 L1330.3 752.8 L1331.3 751.4 L1332.3 750.3 L1333.3 750.0 L1334.3 750.1 L1335.3 751.5 L1336.3 751.2 L1337.3 752.8 L1338.3 753.5 L1339.3 754.0 L1340.3 753.4 L1341.3 752.3 L1342.3 753.5 L1343.3 753.5 L1344.3 753.9 L1345.3 752.0 L1346.3 751.1 L1347.3 752.7 L1348.3 754.4 L1349.3 752.5 L1350.3 752.5 L1351.3 752.6 L1352.3 752.4 L1353.3 752.7 L1354.3 751.5 L1355.3 750.4 L1356.5 750.3" fill="none" stroke="#e0b400" stroke-width="1" stroke-linejoin="round"/>
<path d="M740.3 698.6 L741.3 698.4 L742.3 696.9 L743.3 697.5 L744.3 699.2 L745.3 699.4 L746.3 699.9 L747.3 699.2 L748.3 699.0 L749.3 700.8 L750.3 698.6 L751.3 698.9 L752.3 701.0 L753.3 700.5 L754.3 697.4 L755.3 699.7 L756.3 699.9 L757.3 700.4 L758.3 700.3 L759.3 700.1 L760.3 699.2 L761.3 699.2 L762.3 698.7 L763.3 694.6 L764.3 695.8 L765.3 694.1 L766.3 696.1 L767.3 696.0 L768.3 697.3 L769.3 697.1 L770.3 695.2 L771.3 695.5 L772.3 697.5 L773.3 698.4 L774.3 700.9 L775.3 701.3 L776.3 700.6 L777.3 699.6 L778.3 698.7 L779.3 699.6 L780.3 699.5 L781.3 698.8 L782.3 698.3 L783.3 696.9 L784.3 696.6 L785.3 695.3 L786.3 696.8 L787.3 694.1 L788.3 696.4 L789.3 699.3 L790.3 697.3 L791.3 698.4 L792.3 696.7 L793.3 697.4 L794.3 696.3 L795.3 697.8 L796.3 699.1 L797.3 702.2 L798.3 698.9 L799.3 697.8 L800.3 696.8 L801.3 698.5 L802.3 699.6 L803.3 699.1 L804.3 699.7 L805.3 699.5 L806.3 699.9 L807.3 700.9 L808.3 702.1 L809.3 700.4 L810.3 700.0 L811.3 699.7 L812.3 700.8 L813.3 701.0 L814.3 699.1 L815.3 700.8 L816.3 698.9 L817.3 699.6 L818.3 697.7 L819.3 699.1 L820.3 697.6 L821.3 697.5 L822.3 697.0 L823.3 697.8 L824.3 696.2 L825.3 695.2 L826.3 695.2 L827.3 696.7 L828.3 696.3 L829.3 695.0 L830.3 698.9 L831.3 697.4 L832.3 696.4 L833.3 696.1 L834.3 696.7 L835.3 696.6 L836.3 698.0 L837.3 698.6 L838.3 696.8 L839.3 697.1 L840.3 697.3 L841.3 696.4 L842.3 699.5 L843.3 697.9 L844.3 701.1 L845.3 701.6 L846.3 702.2 L847.3 701.9 L848.3 698.8 L849.3 697.4 L850.3 697.9 L851.3 696.7 L852.3 696.2 L853.3 697.2 L854.3 697.7 L855.3 697.8 L856.3 697.7 L857.3 697.8 L858.3 697.9 L859.3 695.7 L860.3 697.7 L861.3 696.5 L862.3 699.2 L863.3 697.3 L864.3 699.9 L865.3 698.4 L866.3 699.5 L867.3 699.6 L868.3 699.8 L869.3 700.6 L870.3 702.5 L871.3 700.3 L872.3 700.3 L873.3 700.6 L874.3 701.9 L875.3 699.1 L876.3 697.7 L877.3 699.1 L878.3 697.1 L879.3 696.6 L880.3 695.2 L881.3 694.8 L882.3 697.5 L883.3 696.6 L884.3 697.1 L885.3 698.7 L886.3 698.0 L887.3 697.5 L888.3 698.8 L889.3 698.8 L890.3 699.0 L891.3 700.7 L892.3 698.5 L893.3 701.8 L894.3 702.4 L895.3 701.1 L896.3 699.9 L897.3 698.7 L898.3 700.8 L899.3 701.3 L900.3 700.6 L901.3 698.3 L902.3 696.2 L903.3 697.6 L904.3 699.0 L905.3 698.1 L906.3 699.0 L907.3 700.2 L908.3 699.2 L909.3 697.5 L910.3 698.5 L911.3 699.0 L912.3 697.8 L913.3 698.7 L914.3 698.0 L915.3 696.7 L916.3 697.6 L917.3 695.5 L918.3 694.1 L919.3 702.0 L920.3 703.3 L921.3 698.7 L922.3 696.8 L923.3 694.1 L924.3 695.6 L925.3 697.5 L926.3 700.7 L927.3 700.2 L928.3 698.5 L929.3 699.5 L930.3 696.7 L931.3 702.4 L932.3 701.6 L933.3 696.1 L934.3 697.1 L935.3 695.2 L936.3 694.1 L937.3 693.5 L938.3 699.0 L939.3 700.0 L940.3 700.0 L941.3 700.1 L942.3 697.9 L943.3 697.2 L944.3 698.4 L945.3 699.5 L946.3 698.1 L947.3 698.6 L948.3 697.8 L949.3 698.6 L950.3 699.9 L951.3 699.5 L952.3 700.9 L953.3 700.6 L954.3 700.3 L955.3 699.1 L956.3 699.2 L957.3 697.9 L958.3 696.2 L959.3 696.1 L960.3 695.8 L961.3 696.0 L962.3 698.3 L963.3 702.1 L964.3 709.0 L965.3 706.9 L966.3 706.5 L967.3 708.0 L968.3 709.4 L969.3 709.3 L970.3 709.0 L971.3 709.5 L972.3 709.4 L973.3 708.5 L974.3 709.5 L975.3 711.5 L976.3 709.4 L977.3 708.0 L978.3 708.0 L979.3 709.2 L980.3 711.4 L981.3 709.6 L982.3 710.5 L983.3 710.1 L984.3 708.2 L985.3 708.5 L986.3 708.3 L987.3 710.5 L988.3 710.4 L989.3 711.2 L990.3 711.9 L991.3 710.9 L992.3 710.0 L993.3 710.4 L994.3 710.1 L995.3 709.5 L996.3 711.2 L997.3 711.1 L998.3 709.4 L999.3 709.4 L1000.3 708.7 L1001.3 709.3 L1002.3 710.0 L1003.3 710.4 L1004.3 709.0 L1005.3 709.3 L1006.3 708.6 L1007.3 707.2 L1008.3 707.8 L1009.3 708.3 L1010.3 707.5 L1011.3 707.9 L1012.3 709.0 L1013.3 707.0 L1014.3 706.0 L1015.3 703.7 L1016.3 705.4 L1017.3 703.7 L1018.3 704.3 L1019.3 703.2 L1020.3 705.1 L1021.3 705.1 L1022.3 705.6 L1023.3 705.4 L1024.3 704.6 L1025.3 704.7 L1026.3 705.4 L1027.3 706.0 L1028.3 707.6 L1029.3 707.0 L1030.3 704.7 L1031.3 704.0 L1032.3 703.5 L1033.3 701.8 L1034.3 704.4 L1035.3 705.9 L1036.3 704.8 L1037.3 706.6 L1038.3 705.3 L1039.3 703.5 L1040.3 704.1 L1041.3 699.3 L1042.3 699.5 L1043.3 698.7 L1044.3 700.0 L1045.3 700.9 L1046.3 700.4 L1047.3 699.6 L1048.3 698.1 L1049.3 699.1 L1050.3 701.6 L1051.3 702.0 L1052.3 703.4 L1053.3 700.8 L1054.3 701.5 L1055.3 701.9 L1056.3 704.4 L1057.3 704.7 L1058.3 702.9 L1059.3 702.2 L1060.3 699.4 L1061.3 701.3 L1062.3 700.3 L1063.3 703.0 L1064.3 700.9 L1065.3 702.4 L1066.3 703.8 L1067.3 701.2 L1068.3 701.3 L1069.3 699.8 L1070.3 700.1 L1071.3 701.2 L1072.3 705.6 L1073.3 705.5 L1074.3 701.0 L1075.3 701.9 L1076.3 701.6 L1077.3 701.7 L1078.3 703.1 L1079.3 702.3 L1080.3 701.3 L1081.3 700.6 L1082.3 700.9 L1083.3 701.6 L1084.3 700.2 L1085.3 700.0 L1086.3 700.4 L1087.3 698.4 L1088.3 700.0 L1089.3 699.8 L1090.3 697.9 L1091.3 699.9 L1092.3 699.7 L1093.3 701.2 L1094.3 700.6 L1095.3 698.2 L1096.3 697.0 L1097.3 697.8 L1098.3 697.5 L1099.3 699.0 L1100.3 697.2 L1101.3 696.4 L1102.3 697.1 L1103.3 697.0 L1104.3 696.1 L1105.3 696.2 L1106.3 698.1 L1107.3 698.2 L1108.3 697.5 L1109.3 700.1 L1110.3 696.7 L1111.3 688.3 L1112.3 686.0 L1113.3 683.7 L1114.3 681.5 L1115.3 679.2 L1116.3 676.9 L1117.3 675.5 L1118.3 685.3 L1119.3 716.3 L1120.3 747.3 L1121.3 765.8 L1122.3 767.5 L1123.3 766.8 L1124.3 764.5 L1125.3 766.1 L1126.3 765.2 L1127.3 766.1 L1128.3 765.0 L1129.3 764.7 L1130.3 767.9 L1131.3 767.3 L1132.3 767.5 L1133.3 768.6 L1134.3 768.0 L1135.3 765.3 L1136.3 765.7 L1137.3 765.5 L1138.3 766.3 L1139.3 766.8 L1140.3 767.3 L1141.3 767.0 L1142.3 765.2 L1143.3 763.8 L1144.3 763.8 L1145.3 762.7 L1146.3 764.6 L1147.3 765.5 L1148.3 766.4 L1149.3 766.3 L1150.3 767.6 L1151.3 765.8 L1152.3 764.8 L1153.3 763.5 L1154.3 762.6 L1155.3 762.7 L1156.3 764.5 L1157.3 764.3 L1158.3 761.3 L1159.3 763.0 L1160.3 761.7 L1161.3 761.5 L1162.3 760.8 L1163.3 760.4 L1164.3 759.9 L1165.3 759.3 L1166.3 759.2 L1167.3 757.9 L1168.3 758.1 L1169.3 757.3 L1170.3 757.5 L1171.3 758.2 L1172.3 759.4 L1173.3 760.5 L1174.3 758.8 L1175.3 758.3 L1176.3 757.0 L1177.3 755.5 L1178.3 756.4 L1179.3 755.1 L1180.3 756.4 L1181.3 759.7 L1182.3 758.3 L1183.3 763.6 L1184.3 764.3 L1185.3 763.4 L1186.3 761.5 L1187.3 758.3 L1188.3 758.6 L1189.3 759.0 L1190.3 760.3 L1191.3 761.3 L1192.3 762.5 L1193.3 761.7 L1194.3 760.7 L1195.3 761.7 L1196.3 763.4 L1197.3 762.8 L1198.3 764.4 L1199.3 763.7 L1200.3 763.1 L1201.3 764.8 L1202.3 764.4 L1203.3 764.1 L1204.3 761.8 L1205.3 761.7 L1206.3 761.0 L1207.3 760.3 L1208.3 760.9 L1209.3 761.0 L1210.3 762.1 L1211.3 761.6 L1212.3 762.1 L1213.3 762.9 L1214.3 762.8 L1215.3 764.9 L1216.3 765.4 L1217.3 768.8 L1218.3 768.2 L1219.3 768.3 L1220.3 768.7 L1221.3 770.2 L1222.3 764.5 L1223.3 764.1 L1224.3 763.3 L1225.3 762.8 L1226.3 765.5 L1227.3 763.4 L1228.3 765.4 L1229.3 764.4 L1230.3 762.8 L1231.3 761.9 L1232.3 763.5 L1233.3 761.2 L1234.3 762.6 L1235.3 764.3 L1236.3 768.7 L1237.3 769.8 L1238.3 763.8 L1239.3 764.3 L1240.3 763.5 L1241.3 764.6 L1242.3 763.5 L1243.3 762.7 L1244.3 763.5 L1245.3 762.9 L1246.3 764.1 L1247.3 763.8 L1248.3 764.2 L1249.3 763.6 L1250.3 763.6 L1251.3 760.6 L1252.3 758.8 L1253.3 758.4 L1254.3 760.5 L1255.3 760.4 L1256.3 760.3 L1257.3 759.3 L1258.3 760.7 L1259.3 762.4 L1260.3 763.7 L1261.3 764.3 L1262.3 762.7 L1263.3 763.2 L1264.3 764.9 L1265.3 765.4 L1266.3 764.9 L1267.3 766.4 L1268.3 766.4 L1269.3 767.3 L1270.3 766.2 L1271.3 766.4 L1272.3 765.0 L1273.3 766.0 L1274.3 765.1 L1275.3 764.1 L1276.3 763.0 L1277.3 762.1 L1278.3 764.0 L1279.3 763.2 L1280.3 764.1 L1281.3 765.6 L1282.3 764.2 L1283.3 764.0 L1284.3 762.0 L1285.3 765.2 L1286.3 764.6 L1287.3 761.4 L1288.3 760.3 L1289.3 762.8 L1290.3 762.2 L1291.3 760.9 L1292.3 758.6 L1293.3 758.3 L1294.3 759.2 L1295.3 761.0 L1296.3 759.7 L1297.3 757.4 L1298.3 758.3 L1299.3 757.5 L1300.3 756.9 L1301.3 757.2 L1302.3 757.4 L1303.3 756.8 L1304.3 757.0 L1305.3 756.1 L1306.3 755.6 L1307.3 755.8 L1308.3 755.3 L1309.3 755.1 L1310.3 756.8 L1311.3 757.4 L1312.3 758.8 L1313.3 757.6 L1314.3 757.8 L1315.3 758.9 L1316.3 759.6 L1317.3 758.6 L1318.3 758.6 L1319.3 757.9 L1320.3 757.9 L1321.3 757.2 L1322.3 756.6 L1323.3 758.7 L1324.3 758.2 L1325.3 758.9 L1326.3 759.4 L1327.3 758.4 L1328.3 758.2 L1329.3 758.8 L1330.3 758.4 L1331.3 757.0 L1332.3 757.6 L1333.3 759.1 L1334.3 759.3 L1335.3 756.2 L1336.3 755.2 L1337.3 754.8 L1338.3 756.1 L1339.3 755.7 L1340.3 756.4 L1341.3 757.7 L1342.3 758.1 L1343.3 757.8 L1344.3 757.5 L1345.3 758.4 L1346.3 757.8 L1347.3 756.7 L1348.3 758.1 L1349.3 758.9 L1350.3 760.2 L1351.3 760.9 L1352.3 760.2 L1353.3 761.0 L1354.3 759.7 L1355.3 759.9 L1356.5 759.0" fill="none" stroke="#8ab8ff" stroke-width="1" stroke-linejoin="round"/>
<text x="722.4" y="821.3" font-size="9.6" fill="#6e9fff" letter-spacing="0.35" stroke="#6e9fff" stroke-width="0.25">Name</text>
<text x="1198" y="821.3" font-size="10.5" fill="#6e9fff" text-anchor="end" stroke="#6e9fff" stroke-width="0.25">Mean</text>
<text x="1255.2" y="821.3" font-size="10.5" fill="#6e9fff" text-anchor="end" stroke="#6e9fff" stroke-width="0.25">Last *</text>
<text x="1306" y="821.3" font-size="10.5" fill="#6e9fff" text-anchor="end" stroke="#6e9fff" stroke-width="0.25">Max</text>
<text x="1355.4" y="821.3" font-size="10.5" fill="#6e9fff" text-anchor="end" stroke="#6e9fff" stroke-width="0.25">Min</text>
<line x1="698" y1="827.1" x2="1364" y2="827.1" stroke="rgba(204,204,220,0.10)" stroke-width="1"/>
<line x1="698" y1="846.1" x2="1364" y2="846.1" stroke="rgba(204,204,220,0.10)" stroke-width="1"/>
<line x1="698" y1="865.2" x2="1364" y2="865.2" stroke="rgba(204,204,220,0.10)" stroke-width="1"/>
<line x1="698" y1="885.2" x2="1364" y2="885.2" stroke="rgba(204,204,220,0.10)" stroke-width="1"/>
<rect x="705" y="835.3499999999999" width="11.4" height="3.5" rx="1.75" fill="#73bf69"/>
<text x="722.4" y="840.8" font-size="9.8" fill="#ccccdc" letter-spacing="0.45" >exportertest-0</text>
<text x="1198" y="840.8" font-size="10" fill="#ccccdc" text-anchor="end" stroke="#ccccdc" stroke-width="0.15">33.7 MB</text>
<text x="1255.7" y="840.8" font-size="10" fill="#ccccdc" text-anchor="end" stroke="#ccccdc" stroke-width="0.15">40.8 MB</text>
<text x="1307.8" y="840.8" font-size="10" fill="#ccccdc" text-anchor="end" stroke="#ccccdc" stroke-width="0.15">55.3 MB</text>
<text x="1357.0" y="840.8" font-size="10" fill="#ccccdc" text-anchor="end" stroke="#ccccdc" stroke-width="0.15">15.8 MB</text>
<rect x="705" y="854.15" width="11.4" height="3.5" rx="1.75" fill="#e0b400"/>
<text x="722.4" y="859.6" font-size="9.8" fill="#ccccdc" letter-spacing="0.45" >exportertest-1</text>
<text x="1198" y="859.6" font-size="10" fill="#ccccdc" text-anchor="end" stroke="#ccccdc" stroke-width="0.15">66.1 MB</text>
<text x="1255.7" y="859.6" font-size="10" fill="#ccccdc" text-anchor="end" stroke="#ccccdc" stroke-width="0.15">40.7 MB</text>
<text x="1307.8" y="859.6" font-size="10" fill="#ccccdc" text-anchor="end" stroke="#ccccdc" stroke-width="0.15">93.4 MB</text>
<text x="1357.0" y="859.6" font-size="10" fill="#ccccdc" text-anchor="end" stroke="#ccccdc" stroke-width="0.15">19.7 MB</text>
<rect x="705" y="872.9499999999999" width="11.4" height="3.5" rx="1.75" fill="#8ab8ff"/>
<text x="722.4" y="878.4" font-size="9.8" fill="#ccccdc" letter-spacing="0.45" >exportertest-2</text>
<text x="1198" y="878.4" font-size="10" fill="#ccccdc" text-anchor="end" stroke="#ccccdc" stroke-width="0.15">67.9 MB</text>
<text x="1255.7" y="878.4" font-size="10" fill="#ccccdc" text-anchor="end" stroke="#ccccdc" stroke-width="0.15">36.6 MB</text>
<text x="1307.8" y="878.4" font-size="10" fill="#ccccdc" text-anchor="end" stroke="#ccccdc" stroke-width="0.15">113 MB</text>
<text x="1357.0" y="878.4" font-size="10" fill="#ccccdc" text-anchor="end" stroke="#ccccdc" stroke-width="0.15">23.1 MB</text>
</svg></body></html>
